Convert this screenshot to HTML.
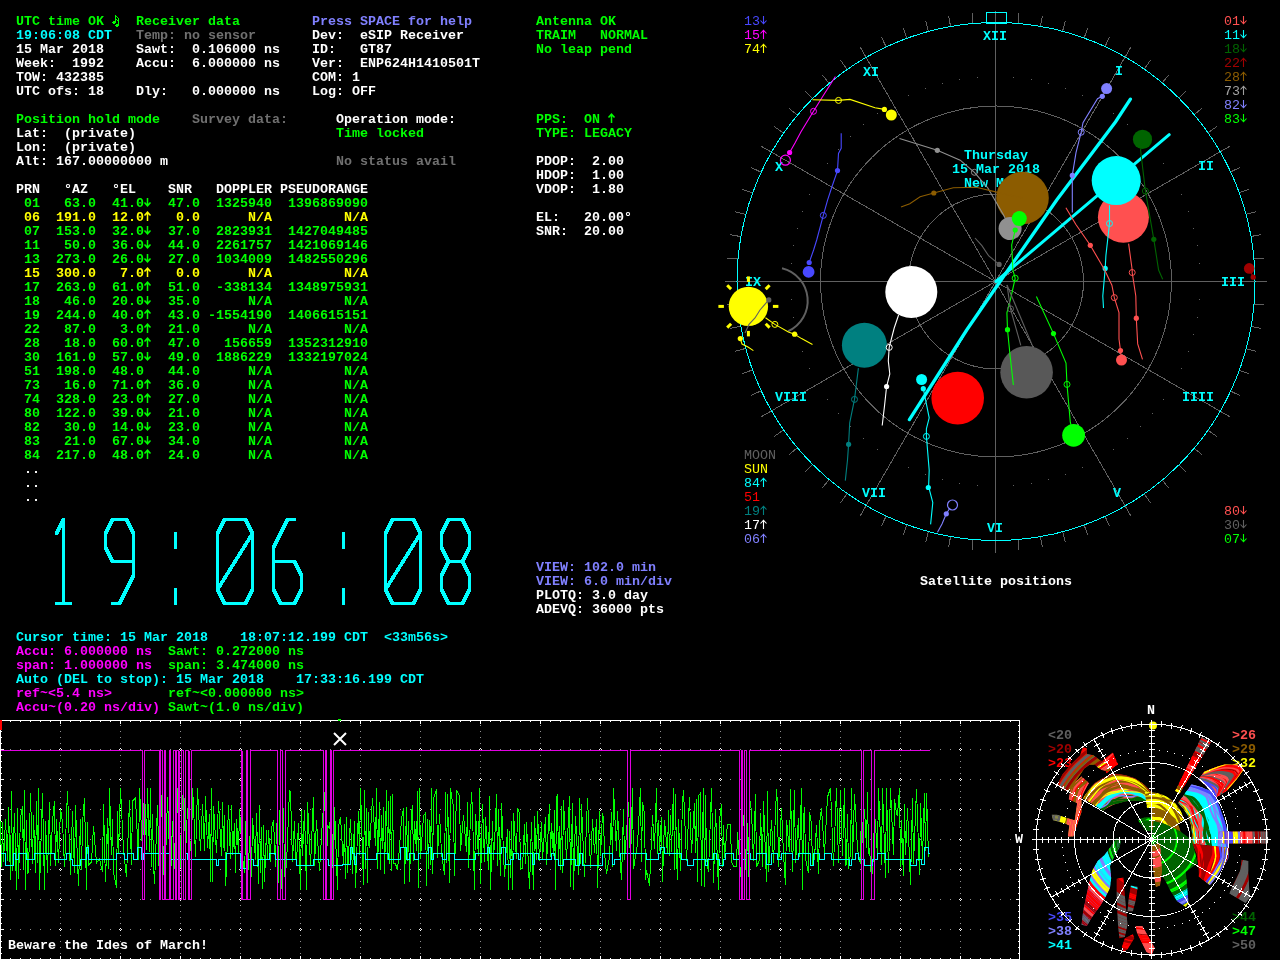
<!DOCTYPE html>
<html><head><meta charset="utf-8"><style>
html,body{margin:0;padding:0;background:#000;width:1280px;height:960px;overflow:hidden}
svg{display:block;will-change:transform}
text{white-space:pre}
</style></head><body>
<svg width="1280" height="960" viewBox="0 0 1280 960">
<rect width="1280" height="960" fill="#000"/>
<g><g stroke="#606060" stroke-width="1" fill="none" shape-rendering="crispEdges"><line x1="995.50" y1="281.50" x2="995.50" y2="10.50"/><line x1="1018.07" y1="23.49" x2="1019.03" y2="12.53"/><line x1="1040.47" y1="26.43" x2="1042.39" y2="15.60"/><line x1="1062.53" y1="31.33" x2="1065.38" y2="20.70"/><line x1="1084.08" y1="38.12" x2="1087.85" y2="27.78"/><line x1="1104.96" y1="46.77" x2="1109.61" y2="36.80"/><line x1="995.50" y1="281.50" x2="1131.00" y2="46.81"/><line x1="1144.06" y1="69.34" x2="1150.37" y2="60.33"/><line x1="1161.98" y1="83.09" x2="1169.05" y2="74.67"/><line x1="1178.64" y1="98.36" x2="1186.42" y2="90.58"/><line x1="1193.91" y1="115.02" x2="1202.33" y2="107.95"/><line x1="1207.66" y1="132.94" x2="1216.67" y2="126.63"/><line x1="995.50" y1="281.50" x2="1230.19" y2="146.00"/><line x1="1230.23" y1="172.04" x2="1240.20" y2="167.39"/><line x1="1238.88" y1="192.92" x2="1249.22" y2="189.15"/><line x1="1245.67" y1="214.47" x2="1256.30" y2="211.62"/><line x1="1250.57" y1="236.53" x2="1261.40" y2="234.61"/><line x1="1253.51" y1="258.93" x2="1264.47" y2="257.97"/><line x1="995.50" y1="281.50" x2="1266.50" y2="281.50"/><line x1="1253.51" y1="304.07" x2="1264.47" y2="305.03"/><line x1="1250.57" y1="326.47" x2="1261.40" y2="328.39"/><line x1="1245.67" y1="348.53" x2="1256.30" y2="351.38"/><line x1="1238.88" y1="370.08" x2="1249.22" y2="373.85"/><line x1="1230.23" y1="390.96" x2="1240.20" y2="395.61"/><line x1="995.50" y1="281.50" x2="1230.19" y2="417.00"/><line x1="1207.66" y1="430.06" x2="1216.67" y2="436.37"/><line x1="1193.91" y1="447.98" x2="1202.33" y2="455.05"/><line x1="1178.64" y1="464.64" x2="1186.42" y2="472.42"/><line x1="1161.98" y1="479.91" x2="1169.05" y2="488.33"/><line x1="1144.06" y1="493.66" x2="1150.37" y2="502.67"/><line x1="995.50" y1="281.50" x2="1131.00" y2="516.19"/><line x1="1104.96" y1="516.23" x2="1109.61" y2="526.20"/><line x1="1084.08" y1="524.88" x2="1087.85" y2="535.22"/><line x1="1062.53" y1="531.67" x2="1065.38" y2="542.30"/><line x1="1040.47" y1="536.57" x2="1042.39" y2="547.40"/><line x1="1018.07" y1="539.51" x2="1019.03" y2="550.47"/><line x1="995.50" y1="281.50" x2="995.50" y2="552.50"/><line x1="972.93" y1="539.51" x2="971.97" y2="550.47"/><line x1="950.53" y1="536.57" x2="948.61" y2="547.40"/><line x1="928.47" y1="531.67" x2="925.62" y2="542.30"/><line x1="906.92" y1="524.88" x2="903.15" y2="535.22"/><line x1="886.04" y1="516.23" x2="881.39" y2="526.20"/><line x1="995.50" y1="281.50" x2="860.00" y2="516.19"/><line x1="846.94" y1="493.66" x2="840.63" y2="502.67"/><line x1="829.02" y1="479.91" x2="821.95" y2="488.33"/><line x1="812.36" y1="464.64" x2="804.58" y2="472.42"/><line x1="797.09" y1="447.98" x2="788.67" y2="455.05"/><line x1="783.34" y1="430.06" x2="774.33" y2="436.37"/><line x1="995.50" y1="281.50" x2="760.81" y2="417.00"/><line x1="760.77" y1="390.96" x2="750.80" y2="395.61"/><line x1="752.12" y1="370.08" x2="741.78" y2="373.85"/><line x1="745.33" y1="348.53" x2="734.70" y2="351.38"/><line x1="740.43" y1="326.47" x2="729.60" y2="328.39"/><line x1="737.49" y1="304.07" x2="726.53" y2="305.03"/><line x1="995.50" y1="281.50" x2="724.50" y2="281.50"/><line x1="737.49" y1="258.93" x2="726.53" y2="257.97"/><line x1="740.43" y1="236.53" x2="729.60" y2="234.61"/><line x1="745.33" y1="214.47" x2="734.70" y2="211.62"/><line x1="752.12" y1="192.92" x2="741.78" y2="189.15"/><line x1="760.77" y1="172.04" x2="750.80" y2="167.39"/><line x1="995.50" y1="281.50" x2="760.81" y2="146.00"/><line x1="783.34" y1="132.94" x2="774.33" y2="126.63"/><line x1="797.09" y1="115.02" x2="788.67" y2="107.95"/><line x1="812.36" y1="98.36" x2="804.58" y2="90.58"/><line x1="829.02" y1="83.09" x2="821.95" y2="74.67"/><line x1="846.94" y1="69.34" x2="840.63" y2="60.33"/><line x1="995.50" y1="281.50" x2="860.00" y2="46.81"/><line x1="886.04" y1="46.77" x2="881.39" y2="36.80"/><line x1="906.92" y1="38.12" x2="903.15" y2="27.78"/><line x1="928.47" y1="31.33" x2="925.62" y2="20.70"/><line x1="950.53" y1="26.43" x2="948.61" y2="15.60"/><line x1="972.93" y1="23.49" x2="971.97" y2="12.53"/><circle cx="996" cy="281.5" r="87.5"/><circle cx="996" cy="281.5" r="175.5"/></g><g fill="#606060"><rect x="1013" y="77" width="1" height="1"/><rect x="1031" y="79" width="1" height="1"/><rect x="1048" y="83" width="1" height="1"/><rect x="1065" y="88" width="1" height="1"/><rect x="1082" y="95" width="1" height="1"/><rect x="1113" y="113" width="1" height="1"/><rect x="1127" y="124" width="1" height="1"/><rect x="1140" y="136" width="1" height="1"/><rect x="1152" y="149" width="1" height="1"/><rect x="1163" y="163" width="1" height="1"/><rect x="1181" y="194" width="1" height="1"/><rect x="1188" y="211" width="1" height="1"/><rect x="1193" y="228" width="1" height="1"/><rect x="1197" y="245" width="1" height="1"/><rect x="1199" y="263" width="1" height="1"/><rect x="1199" y="299" width="1" height="1"/><rect x="1197" y="317" width="1" height="1"/><rect x="1193" y="334" width="1" height="1"/><rect x="1188" y="351" width="1" height="1"/><rect x="1181" y="368" width="1" height="1"/><rect x="1163" y="399" width="1" height="1"/><rect x="1152" y="413" width="1" height="1"/><rect x="1140" y="426" width="1" height="1"/><rect x="1127" y="438" width="1" height="1"/><rect x="1113" y="449" width="1" height="1"/><rect x="1082" y="467" width="1" height="1"/><rect x="1065" y="474" width="1" height="1"/><rect x="1048" y="479" width="1" height="1"/><rect x="1031" y="483" width="1" height="1"/><rect x="1013" y="485" width="1" height="1"/><rect x="977" y="485" width="1" height="1"/><rect x="959" y="483" width="1" height="1"/><rect x="942" y="479" width="1" height="1"/><rect x="925" y="474" width="1" height="1"/><rect x="908" y="467" width="1" height="1"/><rect x="877" y="449" width="1" height="1"/><rect x="863" y="438" width="1" height="1"/><rect x="850" y="426" width="1" height="1"/><rect x="838" y="413" width="1" height="1"/><rect x="827" y="399" width="1" height="1"/><rect x="809" y="368" width="1" height="1"/><rect x="802" y="351" width="1" height="1"/><rect x="797" y="334" width="1" height="1"/><rect x="793" y="317" width="1" height="1"/><rect x="791" y="299" width="1" height="1"/><rect x="791" y="263" width="1" height="1"/><rect x="793" y="245" width="1" height="1"/><rect x="797" y="228" width="1" height="1"/><rect x="802" y="211" width="1" height="1"/><rect x="809" y="194" width="1" height="1"/><rect x="827" y="163" width="1" height="1"/><rect x="838" y="149" width="1" height="1"/><rect x="850" y="136" width="1" height="1"/><rect x="863" y="124" width="1" height="1"/><rect x="877" y="113" width="1" height="1"/><rect x="908" y="95" width="1" height="1"/><rect x="925" y="88" width="1" height="1"/><rect x="942" y="83" width="1" height="1"/><rect x="959" y="79" width="1" height="1"/><rect x="977" y="77" width="1" height="1"/></g><circle cx="996" cy="281.5" r="259" stroke="#00ffff" stroke-width="1" fill="none" shape-rendering="crispEdges"/><rect x="986.5" y="12.5" width="20" height="11" stroke="#00ffff" stroke-width="1" fill="none"/><g font-family="Liberation Mono" font-size="13.333" font-weight="bold" fill="#00ffff" xml:space="preserve"><text x="983" y="40">XII</text><text x="1115" y="75">I</text><text x="1198" y="170">II</text><text x="1221" y="286">III</text><text x="1182" y="401">IIII</text><text x="1113" y="497">V</text><text x="987" y="532">VI</text><text x="862" y="497">VII</text><text x="775" y="401">VIII</text><text x="745" y="286">IX</text><text x="775" y="171">X</text><text x="863" y="76">XI</text><text x="964" y="159">Thursday</text><text x="952" y="173">15 Mar 2018</text><text x="964" y="187">New Moon</text></g><path d="M782,268.2 A33.5,33.5 0 0 1 788.1,331.25" stroke="#606060" stroke-width="2" fill="none"/><circle cx="748.4" cy="306.4" r="19.7" fill="#ffff00"/><g stroke="#ffff00" stroke-width="3"><line x1="748.4" y1="281.9" x2="748.4" y2="276.4"/><line x1="765.7" y1="289.1" x2="769.6" y2="285.2"/><line x1="772.9" y1="306.4" x2="778.4" y2="306.4"/><line x1="765.7" y1="323.7" x2="769.6" y2="327.6"/><line x1="748.4" y1="330.9" x2="748.4" y2="336.4"/><line x1="731.1" y1="323.7" x2="727.2" y2="327.6"/><line x1="723.9" y1="306.4" x2="718.4" y2="306.4"/><line x1="731.1" y1="289.1" x2="727.2" y2="285.2"/></g><polyline points="909.4,419.6 966.7,330 991.6,293.75 1056.7,200 1115.6,121.7 1130.4,99.2" stroke="#00ffff" stroke-width="3.3" fill="none" stroke-linecap="round"/><line x1="996" y1="281.5" x2="1169.2" y2="134.6" stroke="#00ffff" stroke-width="3" stroke-linecap="round"/><circle cx="1022.5" cy="198.0" r="26.3" fill="#8c5c00"/><circle cx="1123.4" cy="217.3" r="25.5" fill="#ff5050"/><circle cx="1116.2" cy="180.6" r="24.5" fill="#00ffff"/><circle cx="1142.5" cy="139.4" r="9.6" fill="#006400"/><circle cx="1010.1" cy="228.5" r="11.5" fill="#909090"/><circle cx="1019.3" cy="218.6" r="7.5" fill="#00ff00"/><circle cx="1106.6" cy="88.6" r="5.5" fill="#8080ff"/><circle cx="891.3" cy="115.0" r="5.5" fill="#ffff00"/><circle cx="808.6" cy="271.9" r="5.9" fill="#4848ff"/><circle cx="1249.2" cy="268.4" r="5.3" fill="#a00000"/><circle cx="911.3" cy="292.0" r="26.0" fill="#ffffff"/><circle cx="864.4" cy="345.2" r="22.5" fill="#008080"/><circle cx="957.7" cy="398.1" r="26.3" fill="#ff0000"/><circle cx="1026.6" cy="372.3" r="26.3" fill="#585858"/><circle cx="1073.6" cy="435.3" r="11.4" fill="#00ff00"/><circle cx="921.6" cy="379.5" r="5.5" fill="#00ffff"/><circle cx="1121.5" cy="360.1" r="5.5" fill="#ff5050"/><circle cx="785.4" cy="160.2" r="5.0" fill="none" stroke="#ff00ff" stroke-width="1.2"/><circle cx="952.5" cy="505.0" r="5.0" fill="none" stroke="#8080ff" stroke-width="1.2"/><polyline points="835.4,76.5 823.0,96.0 813.5,111.3 801.0,131.7 795.0,143.0 789.6,152.5" stroke="#ff00ff" stroke-width="1.1" fill="none"/><circle cx="789.6" cy="152.5" r="2.6" fill="#ff00ff"/><circle cx="813.5" cy="111.3" r="3" fill="none" stroke="#ff00ff" stroke-width="1"/><polyline points="812.5,99.8 838.5,100.4 850.0,99.4 875.0,107.7 884.4,109.4" stroke="#ffff00" stroke-width="1.1" fill="none"/><circle cx="884.4" cy="109.4" r="2.6" fill="#ffff00"/><circle cx="838.5" cy="100.4" r="3" fill="none" stroke="#ffff00" stroke-width="1"/><polyline points="841.2,133.3 841.2,148.3 838.5,153.5 837.5,170.6 832.3,185.8 827.5,200.4 823.3,215.4 816.7,240.0 813.6,250.0 809.2,262.5" stroke="#4848ff" stroke-width="1.1" fill="none"/><circle cx="837.5" cy="170.6" r="2.6" fill="#4848ff"/><circle cx="809.2" cy="262.5" r="2.6" fill="#4848ff"/><circle cx="823.3" cy="215.4" r="3" fill="none" stroke="#4848ff" stroke-width="1"/><polyline points="1072.3,212.5 1072.3,175.4 1076.0,152.6 1081.2,132.2 1083.0,122.7 1097.5,98.7 1102.3,96.3" stroke="#8080ff" stroke-width="1.1" fill="none"/><circle cx="1072.3" cy="175.4" r="2.6" fill="#8080ff"/><circle cx="1102.3" cy="96.3" r="2.6" fill="#8080ff"/><circle cx="1081.2" cy="132.2" r="3" fill="none" stroke="#8080ff" stroke-width="1"/><polyline points="1142.5,139.4 1140.6,150.2 1145.4,191.0 1153.8,239.3 1158.6,270.0 1162.7,279.2" stroke="#006400" stroke-width="1.1" fill="none"/><circle cx="1153.8" cy="239.3" r="2.6" fill="#006400"/><circle cx="1145.4" cy="191.0" r="3" fill="none" stroke="#006400" stroke-width="1"/><polyline points="1109.5,205.3 1109.5,223.5 1105.9,255.6 1105.2,268.4 1102.8,296.0 1103.5,308.0" stroke="#00ffff" stroke-width="1.1" fill="none"/><circle cx="1105.2" cy="268.4" r="2.6" fill="#00ffff"/><circle cx="1109.5" cy="223.5" r="3" fill="none" stroke="#00ffff" stroke-width="1"/><polyline points="1065.9,207.7 1075.9,224.5 1090.3,245.3 1104.7,270.0 1111.9,285.2 1114.3,297.6 1119.0,312.7 1119.0,339.0 1120.5,350.6 1121.5,360.0" stroke="#ff5050" stroke-width="1.1" fill="none"/><circle cx="1090.3" cy="245.3" r="2.6" fill="#ff5050"/><circle cx="1120.5" cy="350.6" r="2.6" fill="#ff5050"/><circle cx="1114.3" cy="297.6" r="3" fill="none" stroke="#ff5050" stroke-width="1"/><polyline points="1128.6,243.6 1132.2,270.0 1132.2,272.5 1135.8,296.0 1136.3,318.2 1137.7,343.9 1142.5,359.4" stroke="#ff5050" stroke-width="1.1" fill="none"/><circle cx="1136.3" cy="318.2" r="2.6" fill="#ff5050"/><circle cx="1132.2" cy="272.5" r="3" fill="none" stroke="#ff5050" stroke-width="1"/><polyline points="1036.4,296.4 1053.5,333.6 1066.0,363.0 1067.0,384.4 1070.3,422.2 1073.6,435.3" stroke="#00ff00" stroke-width="1.1" fill="none"/><circle cx="1053.5" cy="333.6" r="2.6" fill="#00ff00"/><circle cx="1067.0" cy="384.4" r="3" fill="none" stroke="#00ff00" stroke-width="1"/><polyline points="1015.2,230.0 1011.7,245.0 1012.9,270.2 1015.2,278.2 1010.6,298.8 1006.9,312.8 1007.5,329.7 1010.2,356.6 1013.4,385.0" stroke="#00ff00" stroke-width="1.1" fill="none"/><circle cx="1015.2" cy="230.0" r="2.6" fill="#00ff00"/><circle cx="1007.5" cy="329.7" r="2.6" fill="#00ff00"/><circle cx="1015.2" cy="278.2" r="3" fill="none" stroke="#00ff00" stroke-width="1"/><polyline points="898.6,315.0 894.2,328.0 889.2,347.4 888.3,361.0 889.8,374.0 886.6,386.5 884.4,406.9 882.2,425.5" stroke="#ffffff" stroke-width="1.1" fill="none"/><circle cx="886.6" cy="386.5" r="2.6" fill="#ffffff"/><circle cx="889.2" cy="347.4" r="3" fill="none" stroke="#ffffff" stroke-width="1"/><polyline points="858.4,368.1 854.5,399.4 849.7,422.8 848.6,444.3 847.5,460.0 845.3,480.6" stroke="#008080" stroke-width="1.1" fill="none"/><circle cx="848.6" cy="444.3" r="2.6" fill="#008080"/><circle cx="854.5" cy="399.4" r="3" fill="none" stroke="#008080" stroke-width="1"/><polyline points="923.3,388.7 929.2,417.8 926.4,428.8 926.4,436.4 929.2,470.3 928.6,486.7 932.8,502.5 930.6,524.4" stroke="#00ffff" stroke-width="1.1" fill="none"/><circle cx="923.3" cy="388.7" r="2.6" fill="#00ffff"/><circle cx="928.3" cy="487.5" r="2.6" fill="#00ffff"/><circle cx="926.4" cy="436.4" r="3" fill="none" stroke="#00ffff" stroke-width="1"/><polyline points="937.5,532.2 942.0,524.0 946.3,513.8 950.0,508.0" stroke="#8080ff" stroke-width="1.1" fill="none"/><circle cx="946.3" cy="513.8" r="2.6" fill="#8080ff"/><polyline points="899.5,138.4 921.2,145.3 937.3,150.3 960.2,160.2 974.4,172.3 987.7,187.7 1003.7,215.2 1010.1,228.5" stroke="#909090" stroke-width="1.1" fill="none"/><circle cx="937.3" cy="150.3" r="2.6" fill="#909090"/><circle cx="974.4" cy="172.3" r="3" fill="none" stroke="#909090" stroke-width="1"/><polyline points="901.0,207.1 909.8,203.7 920.1,196.8 933.8,193.0 953.3,187.7 976.2,187.2 994.5,191.6 1022.5,198.0" stroke="#8c5c00" stroke-width="1.1" fill="none"/><circle cx="933.8" cy="193.0" r="2.6" fill="#8c5c00"/><polyline points="765.5,317.8 774.9,324.4 788.4,332.0 794.6,334.2 801.6,338.6 812.5,344.5" stroke="#ffff00" stroke-width="1.1" fill="none"/><circle cx="794.6" cy="334.2" r="2.6" fill="#ffff00"/><circle cx="774.9" cy="324.4" r="3" fill="none" stroke="#ffff00" stroke-width="1"/><polyline points="740.3,338.6 742.0,344.0 748.0,347.0 753.4,350.6" stroke="#ffff00" stroke-width="1.1" fill="none"/><circle cx="740.3" cy="338.6" r="2.6" fill="#ffff00"/><polyline points="768.8,299.9 760.0,310.0 755.0,318.0 749.0,324.4 745.0,333.0" stroke="#606060" stroke-width="1.1" fill="none"/><circle cx="768.8" cy="299.9" r="2.6" fill="#606060"/><polyline points="975.0,238.0 981.9,245.7 988.8,256.0 999.1,264.4" stroke="#606060" stroke-width="1.1" fill="none"/><circle cx="999.1" cy="264.4" r="2.6" fill="#606060"/><polyline points="1007.0,285.0 1010.5,308.8 1020.8,345.4" stroke="#606060" stroke-width="1.1" fill="none"/><circle cx="1010.5" cy="308.8" r="3" fill="none" stroke="#606060" stroke-width="1"/><polyline points="1007.0,285.0 1032.3,345.4" stroke="#606060" stroke-width="1.1" fill="none"/><polyline points="1249.2,268.4 1253.2,277.2" stroke="#a00000" stroke-width="1.1" fill="none"/><circle cx="1253.2" cy="277.2" r="2.6" fill="#a00000"/></g><g shape-rendering="crispEdges"><path fill="#909090" d="M60,725h1v1h-1zM60,731h1v1h-1zM60,737h1v1h-1zM60,743h1v1h-1zM60,755h1v1h-1zM60,761h1v1h-1zM60,767h1v1h-1zM60,773h1v1h-1zM60,785h1v1h-1zM60,791h1v1h-1zM60,797h1v1h-1zM60,803h1v1h-1zM60,815h1v1h-1zM60,821h1v1h-1zM60,827h1v1h-1zM60,833h1v1h-1zM60,845h1v1h-1zM60,851h1v1h-1zM60,857h1v1h-1zM60,863h1v1h-1zM60,875h1v1h-1zM60,881h1v1h-1zM60,887h1v1h-1zM60,893h1v1h-1zM60,905h1v1h-1zM60,911h1v1h-1zM60,917h1v1h-1zM60,923h1v1h-1zM60,935h1v1h-1zM60,941h1v1h-1zM60,947h1v1h-1zM60,953h1v1h-1zM120,725h1v1h-1zM120,731h1v1h-1zM120,737h1v1h-1zM120,743h1v1h-1zM120,755h1v1h-1zM120,761h1v1h-1zM120,767h1v1h-1zM120,773h1v1h-1zM120,785h1v1h-1zM120,791h1v1h-1zM120,797h1v1h-1zM120,803h1v1h-1zM120,815h1v1h-1zM120,821h1v1h-1zM120,827h1v1h-1zM120,833h1v1h-1zM120,845h1v1h-1zM120,851h1v1h-1zM120,857h1v1h-1zM120,863h1v1h-1zM120,875h1v1h-1zM120,881h1v1h-1zM120,887h1v1h-1zM120,893h1v1h-1zM120,905h1v1h-1zM120,911h1v1h-1zM120,917h1v1h-1zM120,923h1v1h-1zM120,935h1v1h-1zM120,941h1v1h-1zM120,947h1v1h-1zM120,953h1v1h-1zM180,725h1v1h-1zM180,731h1v1h-1zM180,737h1v1h-1zM180,743h1v1h-1zM180,755h1v1h-1zM180,761h1v1h-1zM180,767h1v1h-1zM180,773h1v1h-1zM180,785h1v1h-1zM180,791h1v1h-1zM180,797h1v1h-1zM180,803h1v1h-1zM180,815h1v1h-1zM180,821h1v1h-1zM180,827h1v1h-1zM180,833h1v1h-1zM180,845h1v1h-1zM180,851h1v1h-1zM180,857h1v1h-1zM180,863h1v1h-1zM180,875h1v1h-1zM180,881h1v1h-1zM180,887h1v1h-1zM180,893h1v1h-1zM180,905h1v1h-1zM180,911h1v1h-1zM180,917h1v1h-1zM180,923h1v1h-1zM180,935h1v1h-1zM180,941h1v1h-1zM180,947h1v1h-1zM180,953h1v1h-1zM240,725h1v1h-1zM240,731h1v1h-1zM240,737h1v1h-1zM240,743h1v1h-1zM240,755h1v1h-1zM240,761h1v1h-1zM240,767h1v1h-1zM240,773h1v1h-1zM240,785h1v1h-1zM240,791h1v1h-1zM240,797h1v1h-1zM240,803h1v1h-1zM240,815h1v1h-1zM240,821h1v1h-1zM240,827h1v1h-1zM240,833h1v1h-1zM240,845h1v1h-1zM240,851h1v1h-1zM240,857h1v1h-1zM240,863h1v1h-1zM240,875h1v1h-1zM240,881h1v1h-1zM240,887h1v1h-1zM240,893h1v1h-1zM240,905h1v1h-1zM240,911h1v1h-1zM240,917h1v1h-1zM240,923h1v1h-1zM240,935h1v1h-1zM240,941h1v1h-1zM240,947h1v1h-1zM240,953h1v1h-1zM300,725h1v1h-1zM300,731h1v1h-1zM300,737h1v1h-1zM300,743h1v1h-1zM300,755h1v1h-1zM300,761h1v1h-1zM300,767h1v1h-1zM300,773h1v1h-1zM300,785h1v1h-1zM300,791h1v1h-1zM300,797h1v1h-1zM300,803h1v1h-1zM300,815h1v1h-1zM300,821h1v1h-1zM300,827h1v1h-1zM300,833h1v1h-1zM300,845h1v1h-1zM300,851h1v1h-1zM300,857h1v1h-1zM300,863h1v1h-1zM300,875h1v1h-1zM300,881h1v1h-1zM300,887h1v1h-1zM300,893h1v1h-1zM300,905h1v1h-1zM300,911h1v1h-1zM300,917h1v1h-1zM300,923h1v1h-1zM300,935h1v1h-1zM300,941h1v1h-1zM300,947h1v1h-1zM300,953h1v1h-1zM360,725h1v1h-1zM360,731h1v1h-1zM360,737h1v1h-1zM360,743h1v1h-1zM360,755h1v1h-1zM360,761h1v1h-1zM360,767h1v1h-1zM360,773h1v1h-1zM360,785h1v1h-1zM360,791h1v1h-1zM360,797h1v1h-1zM360,803h1v1h-1zM360,815h1v1h-1zM360,821h1v1h-1zM360,827h1v1h-1zM360,833h1v1h-1zM360,845h1v1h-1zM360,851h1v1h-1zM360,857h1v1h-1zM360,863h1v1h-1zM360,875h1v1h-1zM360,881h1v1h-1zM360,887h1v1h-1zM360,893h1v1h-1zM360,905h1v1h-1zM360,911h1v1h-1zM360,917h1v1h-1zM360,923h1v1h-1zM360,935h1v1h-1zM360,941h1v1h-1zM360,947h1v1h-1zM360,953h1v1h-1zM420,725h1v1h-1zM420,731h1v1h-1zM420,737h1v1h-1zM420,743h1v1h-1zM420,755h1v1h-1zM420,761h1v1h-1zM420,767h1v1h-1zM420,773h1v1h-1zM420,785h1v1h-1zM420,791h1v1h-1zM420,797h1v1h-1zM420,803h1v1h-1zM420,815h1v1h-1zM420,821h1v1h-1zM420,827h1v1h-1zM420,833h1v1h-1zM420,845h1v1h-1zM420,851h1v1h-1zM420,857h1v1h-1zM420,863h1v1h-1zM420,875h1v1h-1zM420,881h1v1h-1zM420,887h1v1h-1zM420,893h1v1h-1zM420,905h1v1h-1zM420,911h1v1h-1zM420,917h1v1h-1zM420,923h1v1h-1zM420,935h1v1h-1zM420,941h1v1h-1zM420,947h1v1h-1zM420,953h1v1h-1zM480,725h1v1h-1zM480,731h1v1h-1zM480,737h1v1h-1zM480,743h1v1h-1zM480,755h1v1h-1zM480,761h1v1h-1zM480,767h1v1h-1zM480,773h1v1h-1zM480,785h1v1h-1zM480,791h1v1h-1zM480,797h1v1h-1zM480,803h1v1h-1zM480,815h1v1h-1zM480,821h1v1h-1zM480,827h1v1h-1zM480,833h1v1h-1zM480,845h1v1h-1zM480,851h1v1h-1zM480,857h1v1h-1zM480,863h1v1h-1zM480,875h1v1h-1zM480,881h1v1h-1zM480,887h1v1h-1zM480,893h1v1h-1zM480,905h1v1h-1zM480,911h1v1h-1zM480,917h1v1h-1zM480,923h1v1h-1zM480,935h1v1h-1zM480,941h1v1h-1zM480,947h1v1h-1zM480,953h1v1h-1zM540,725h1v1h-1zM540,731h1v1h-1zM540,737h1v1h-1zM540,743h1v1h-1zM540,755h1v1h-1zM540,761h1v1h-1zM540,767h1v1h-1zM540,773h1v1h-1zM540,785h1v1h-1zM540,791h1v1h-1zM540,797h1v1h-1zM540,803h1v1h-1zM540,815h1v1h-1zM540,821h1v1h-1zM540,827h1v1h-1zM540,833h1v1h-1zM540,845h1v1h-1zM540,851h1v1h-1zM540,857h1v1h-1zM540,863h1v1h-1zM540,875h1v1h-1zM540,881h1v1h-1zM540,887h1v1h-1zM540,893h1v1h-1zM540,905h1v1h-1zM540,911h1v1h-1zM540,917h1v1h-1zM540,923h1v1h-1zM540,935h1v1h-1zM540,941h1v1h-1zM540,947h1v1h-1zM540,953h1v1h-1zM600,725h1v1h-1zM600,731h1v1h-1zM600,737h1v1h-1zM600,743h1v1h-1zM600,755h1v1h-1zM600,761h1v1h-1zM600,767h1v1h-1zM600,773h1v1h-1zM600,785h1v1h-1zM600,791h1v1h-1zM600,797h1v1h-1zM600,803h1v1h-1zM600,815h1v1h-1zM600,821h1v1h-1zM600,827h1v1h-1zM600,833h1v1h-1zM600,845h1v1h-1zM600,851h1v1h-1zM600,857h1v1h-1zM600,863h1v1h-1zM600,875h1v1h-1zM600,881h1v1h-1zM600,887h1v1h-1zM600,893h1v1h-1zM600,905h1v1h-1zM600,911h1v1h-1zM600,917h1v1h-1zM600,923h1v1h-1zM600,935h1v1h-1zM600,941h1v1h-1zM600,947h1v1h-1zM600,953h1v1h-1zM660,725h1v1h-1zM660,731h1v1h-1zM660,737h1v1h-1zM660,743h1v1h-1zM660,755h1v1h-1zM660,761h1v1h-1zM660,767h1v1h-1zM660,773h1v1h-1zM660,785h1v1h-1zM660,791h1v1h-1zM660,797h1v1h-1zM660,803h1v1h-1zM660,815h1v1h-1zM660,821h1v1h-1zM660,827h1v1h-1zM660,833h1v1h-1zM660,845h1v1h-1zM660,851h1v1h-1zM660,857h1v1h-1zM660,863h1v1h-1zM660,875h1v1h-1zM660,881h1v1h-1zM660,887h1v1h-1zM660,893h1v1h-1zM660,905h1v1h-1zM660,911h1v1h-1zM660,917h1v1h-1zM660,923h1v1h-1zM660,935h1v1h-1zM660,941h1v1h-1zM660,947h1v1h-1zM660,953h1v1h-1zM720,725h1v1h-1zM720,731h1v1h-1zM720,737h1v1h-1zM720,743h1v1h-1zM720,755h1v1h-1zM720,761h1v1h-1zM720,767h1v1h-1zM720,773h1v1h-1zM720,785h1v1h-1zM720,791h1v1h-1zM720,797h1v1h-1zM720,803h1v1h-1zM720,815h1v1h-1zM720,821h1v1h-1zM720,827h1v1h-1zM720,833h1v1h-1zM720,845h1v1h-1zM720,851h1v1h-1zM720,857h1v1h-1zM720,863h1v1h-1zM720,875h1v1h-1zM720,881h1v1h-1zM720,887h1v1h-1zM720,893h1v1h-1zM720,905h1v1h-1zM720,911h1v1h-1zM720,917h1v1h-1zM720,923h1v1h-1zM720,935h1v1h-1zM720,941h1v1h-1zM720,947h1v1h-1zM720,953h1v1h-1zM780,725h1v1h-1zM780,731h1v1h-1zM780,737h1v1h-1zM780,743h1v1h-1zM780,755h1v1h-1zM780,761h1v1h-1zM780,767h1v1h-1zM780,773h1v1h-1zM780,785h1v1h-1zM780,791h1v1h-1zM780,797h1v1h-1zM780,803h1v1h-1zM780,815h1v1h-1zM780,821h1v1h-1zM780,827h1v1h-1zM780,833h1v1h-1zM780,845h1v1h-1zM780,851h1v1h-1zM780,857h1v1h-1zM780,863h1v1h-1zM780,875h1v1h-1zM780,881h1v1h-1zM780,887h1v1h-1zM780,893h1v1h-1zM780,905h1v1h-1zM780,911h1v1h-1zM780,917h1v1h-1zM780,923h1v1h-1zM780,935h1v1h-1zM780,941h1v1h-1zM780,947h1v1h-1zM780,953h1v1h-1zM840,725h1v1h-1zM840,731h1v1h-1zM840,737h1v1h-1zM840,743h1v1h-1zM840,755h1v1h-1zM840,761h1v1h-1zM840,767h1v1h-1zM840,773h1v1h-1zM840,785h1v1h-1zM840,791h1v1h-1zM840,797h1v1h-1zM840,803h1v1h-1zM840,815h1v1h-1zM840,821h1v1h-1zM840,827h1v1h-1zM840,833h1v1h-1zM840,845h1v1h-1zM840,851h1v1h-1zM840,857h1v1h-1zM840,863h1v1h-1zM840,875h1v1h-1zM840,881h1v1h-1zM840,887h1v1h-1zM840,893h1v1h-1zM840,905h1v1h-1zM840,911h1v1h-1zM840,917h1v1h-1zM840,923h1v1h-1zM840,935h1v1h-1zM840,941h1v1h-1zM840,947h1v1h-1zM840,953h1v1h-1zM900,725h1v1h-1zM900,731h1v1h-1zM900,737h1v1h-1zM900,743h1v1h-1zM900,755h1v1h-1zM900,761h1v1h-1zM900,767h1v1h-1zM900,773h1v1h-1zM900,785h1v1h-1zM900,791h1v1h-1zM900,797h1v1h-1zM900,803h1v1h-1zM900,815h1v1h-1zM900,821h1v1h-1zM900,827h1v1h-1zM900,833h1v1h-1zM900,845h1v1h-1zM900,851h1v1h-1zM900,857h1v1h-1zM900,863h1v1h-1zM900,875h1v1h-1zM900,881h1v1h-1zM900,887h1v1h-1zM900,893h1v1h-1zM900,905h1v1h-1zM900,911h1v1h-1zM900,917h1v1h-1zM900,923h1v1h-1zM900,935h1v1h-1zM900,941h1v1h-1zM900,947h1v1h-1zM900,953h1v1h-1zM960,725h1v1h-1zM960,731h1v1h-1zM960,737h1v1h-1zM960,743h1v1h-1zM960,755h1v1h-1zM960,761h1v1h-1zM960,767h1v1h-1zM960,773h1v1h-1zM960,785h1v1h-1zM960,791h1v1h-1zM960,797h1v1h-1zM960,803h1v1h-1zM960,815h1v1h-1zM960,821h1v1h-1zM960,827h1v1h-1zM960,833h1v1h-1zM960,845h1v1h-1zM960,851h1v1h-1zM960,857h1v1h-1zM960,863h1v1h-1zM960,875h1v1h-1zM960,881h1v1h-1zM960,887h1v1h-1zM960,893h1v1h-1zM960,905h1v1h-1zM960,911h1v1h-1zM960,917h1v1h-1zM960,923h1v1h-1zM960,935h1v1h-1zM960,941h1v1h-1zM960,947h1v1h-1zM960,953h1v1h-1zM10,749h1v1h-1zM20,749h1v1h-1zM30,749h1v1h-1zM40,749h1v1h-1zM50,749h1v1h-1zM70,749h1v1h-1zM80,749h1v1h-1zM90,749h1v1h-1zM100,749h1v1h-1zM110,749h1v1h-1zM130,749h1v1h-1zM140,749h1v1h-1zM150,749h1v1h-1zM160,749h1v1h-1zM170,749h1v1h-1zM190,749h1v1h-1zM200,749h1v1h-1zM210,749h1v1h-1zM220,749h1v1h-1zM230,749h1v1h-1zM250,749h1v1h-1zM260,749h1v1h-1zM270,749h1v1h-1zM280,749h1v1h-1zM290,749h1v1h-1zM310,749h1v1h-1zM320,749h1v1h-1zM330,749h1v1h-1zM340,749h1v1h-1zM350,749h1v1h-1zM370,749h1v1h-1zM380,749h1v1h-1zM390,749h1v1h-1zM400,749h1v1h-1zM410,749h1v1h-1zM430,749h1v1h-1zM440,749h1v1h-1zM450,749h1v1h-1zM460,749h1v1h-1zM470,749h1v1h-1zM490,749h1v1h-1zM500,749h1v1h-1zM510,749h1v1h-1zM520,749h1v1h-1zM530,749h1v1h-1zM550,749h1v1h-1zM560,749h1v1h-1zM570,749h1v1h-1zM580,749h1v1h-1zM590,749h1v1h-1zM610,749h1v1h-1zM620,749h1v1h-1zM630,749h1v1h-1zM640,749h1v1h-1zM650,749h1v1h-1zM670,749h1v1h-1zM680,749h1v1h-1zM690,749h1v1h-1zM700,749h1v1h-1zM710,749h1v1h-1zM730,749h1v1h-1zM740,749h1v1h-1zM750,749h1v1h-1zM760,749h1v1h-1zM770,749h1v1h-1zM790,749h1v1h-1zM800,749h1v1h-1zM810,749h1v1h-1zM820,749h1v1h-1zM830,749h1v1h-1zM850,749h1v1h-1zM860,749h1v1h-1zM870,749h1v1h-1zM880,749h1v1h-1zM890,749h1v1h-1zM910,749h1v1h-1zM920,749h1v1h-1zM930,749h1v1h-1zM940,749h1v1h-1zM950,749h1v1h-1zM970,749h1v1h-1zM980,749h1v1h-1zM990,749h1v1h-1zM1000,749h1v1h-1zM1010,749h1v1h-1zM10,779h1v1h-1zM20,779h1v1h-1zM30,779h1v1h-1zM40,779h1v1h-1zM50,779h1v1h-1zM70,779h1v1h-1zM80,779h1v1h-1zM90,779h1v1h-1zM100,779h1v1h-1zM110,779h1v1h-1zM130,779h1v1h-1zM140,779h1v1h-1zM150,779h1v1h-1zM160,779h1v1h-1zM170,779h1v1h-1zM190,779h1v1h-1zM200,779h1v1h-1zM210,779h1v1h-1zM220,779h1v1h-1zM230,779h1v1h-1zM250,779h1v1h-1zM260,779h1v1h-1zM270,779h1v1h-1zM280,779h1v1h-1zM290,779h1v1h-1zM310,779h1v1h-1zM320,779h1v1h-1zM330,779h1v1h-1zM340,779h1v1h-1zM350,779h1v1h-1zM370,779h1v1h-1zM380,779h1v1h-1zM390,779h1v1h-1zM400,779h1v1h-1zM410,779h1v1h-1zM430,779h1v1h-1zM440,779h1v1h-1zM450,779h1v1h-1zM460,779h1v1h-1zM470,779h1v1h-1zM490,779h1v1h-1zM500,779h1v1h-1zM510,779h1v1h-1zM520,779h1v1h-1zM530,779h1v1h-1zM550,779h1v1h-1zM560,779h1v1h-1zM570,779h1v1h-1zM580,779h1v1h-1zM590,779h1v1h-1zM610,779h1v1h-1zM620,779h1v1h-1zM630,779h1v1h-1zM640,779h1v1h-1zM650,779h1v1h-1zM670,779h1v1h-1zM680,779h1v1h-1zM690,779h1v1h-1zM700,779h1v1h-1zM710,779h1v1h-1zM730,779h1v1h-1zM740,779h1v1h-1zM750,779h1v1h-1zM760,779h1v1h-1zM770,779h1v1h-1zM790,779h1v1h-1zM800,779h1v1h-1zM810,779h1v1h-1zM820,779h1v1h-1zM830,779h1v1h-1zM850,779h1v1h-1zM860,779h1v1h-1zM870,779h1v1h-1zM880,779h1v1h-1zM890,779h1v1h-1zM910,779h1v1h-1zM920,779h1v1h-1zM930,779h1v1h-1zM940,779h1v1h-1zM950,779h1v1h-1zM970,779h1v1h-1zM980,779h1v1h-1zM990,779h1v1h-1zM1000,779h1v1h-1zM1010,779h1v1h-1zM10,809h1v1h-1zM20,809h1v1h-1zM30,809h1v1h-1zM40,809h1v1h-1zM50,809h1v1h-1zM70,809h1v1h-1zM80,809h1v1h-1zM90,809h1v1h-1zM100,809h1v1h-1zM110,809h1v1h-1zM130,809h1v1h-1zM140,809h1v1h-1zM150,809h1v1h-1zM160,809h1v1h-1zM170,809h1v1h-1zM190,809h1v1h-1zM200,809h1v1h-1zM210,809h1v1h-1zM220,809h1v1h-1zM230,809h1v1h-1zM250,809h1v1h-1zM260,809h1v1h-1zM270,809h1v1h-1zM280,809h1v1h-1zM290,809h1v1h-1zM310,809h1v1h-1zM320,809h1v1h-1zM330,809h1v1h-1zM340,809h1v1h-1zM350,809h1v1h-1zM370,809h1v1h-1zM380,809h1v1h-1zM390,809h1v1h-1zM400,809h1v1h-1zM410,809h1v1h-1zM430,809h1v1h-1zM440,809h1v1h-1zM450,809h1v1h-1zM460,809h1v1h-1zM470,809h1v1h-1zM490,809h1v1h-1zM500,809h1v1h-1zM510,809h1v1h-1zM520,809h1v1h-1zM530,809h1v1h-1zM550,809h1v1h-1zM560,809h1v1h-1zM570,809h1v1h-1zM580,809h1v1h-1zM590,809h1v1h-1zM610,809h1v1h-1zM620,809h1v1h-1zM630,809h1v1h-1zM640,809h1v1h-1zM650,809h1v1h-1zM670,809h1v1h-1zM680,809h1v1h-1zM690,809h1v1h-1zM700,809h1v1h-1zM710,809h1v1h-1zM730,809h1v1h-1zM740,809h1v1h-1zM750,809h1v1h-1zM760,809h1v1h-1zM770,809h1v1h-1zM790,809h1v1h-1zM800,809h1v1h-1zM810,809h1v1h-1zM820,809h1v1h-1zM830,809h1v1h-1zM850,809h1v1h-1zM860,809h1v1h-1zM870,809h1v1h-1zM880,809h1v1h-1zM890,809h1v1h-1zM910,809h1v1h-1zM920,809h1v1h-1zM930,809h1v1h-1zM940,809h1v1h-1zM950,809h1v1h-1zM970,809h1v1h-1zM980,809h1v1h-1zM990,809h1v1h-1zM1000,809h1v1h-1zM1010,809h1v1h-1zM10,839h1v1h-1zM20,839h1v1h-1zM30,839h1v1h-1zM40,839h1v1h-1zM50,839h1v1h-1zM70,839h1v1h-1zM80,839h1v1h-1zM90,839h1v1h-1zM100,839h1v1h-1zM110,839h1v1h-1zM130,839h1v1h-1zM140,839h1v1h-1zM150,839h1v1h-1zM160,839h1v1h-1zM170,839h1v1h-1zM190,839h1v1h-1zM200,839h1v1h-1zM210,839h1v1h-1zM220,839h1v1h-1zM230,839h1v1h-1zM250,839h1v1h-1zM260,839h1v1h-1zM270,839h1v1h-1zM280,839h1v1h-1zM290,839h1v1h-1zM310,839h1v1h-1zM320,839h1v1h-1zM330,839h1v1h-1zM340,839h1v1h-1zM350,839h1v1h-1zM370,839h1v1h-1zM380,839h1v1h-1zM390,839h1v1h-1zM400,839h1v1h-1zM410,839h1v1h-1zM430,839h1v1h-1zM440,839h1v1h-1zM450,839h1v1h-1zM460,839h1v1h-1zM470,839h1v1h-1zM490,839h1v1h-1zM500,839h1v1h-1zM510,839h1v1h-1zM520,839h1v1h-1zM530,839h1v1h-1zM550,839h1v1h-1zM560,839h1v1h-1zM570,839h1v1h-1zM580,839h1v1h-1zM590,839h1v1h-1zM610,839h1v1h-1zM620,839h1v1h-1zM630,839h1v1h-1zM640,839h1v1h-1zM650,839h1v1h-1zM670,839h1v1h-1zM680,839h1v1h-1zM690,839h1v1h-1zM700,839h1v1h-1zM710,839h1v1h-1zM730,839h1v1h-1zM740,839h1v1h-1zM750,839h1v1h-1zM760,839h1v1h-1zM770,839h1v1h-1zM790,839h1v1h-1zM800,839h1v1h-1zM810,839h1v1h-1zM820,839h1v1h-1zM830,839h1v1h-1zM850,839h1v1h-1zM860,839h1v1h-1zM870,839h1v1h-1zM880,839h1v1h-1zM890,839h1v1h-1zM910,839h1v1h-1zM920,839h1v1h-1zM930,839h1v1h-1zM940,839h1v1h-1zM950,839h1v1h-1zM970,839h1v1h-1zM980,839h1v1h-1zM990,839h1v1h-1zM1000,839h1v1h-1zM1010,839h1v1h-1zM10,869h1v1h-1zM20,869h1v1h-1zM30,869h1v1h-1zM40,869h1v1h-1zM50,869h1v1h-1zM70,869h1v1h-1zM80,869h1v1h-1zM90,869h1v1h-1zM100,869h1v1h-1zM110,869h1v1h-1zM130,869h1v1h-1zM140,869h1v1h-1zM150,869h1v1h-1zM160,869h1v1h-1zM170,869h1v1h-1zM190,869h1v1h-1zM200,869h1v1h-1zM210,869h1v1h-1zM220,869h1v1h-1zM230,869h1v1h-1zM250,869h1v1h-1zM260,869h1v1h-1zM270,869h1v1h-1zM280,869h1v1h-1zM290,869h1v1h-1zM310,869h1v1h-1zM320,869h1v1h-1zM330,869h1v1h-1zM340,869h1v1h-1zM350,869h1v1h-1zM370,869h1v1h-1zM380,869h1v1h-1zM390,869h1v1h-1zM400,869h1v1h-1zM410,869h1v1h-1zM430,869h1v1h-1zM440,869h1v1h-1zM450,869h1v1h-1zM460,869h1v1h-1zM470,869h1v1h-1zM490,869h1v1h-1zM500,869h1v1h-1zM510,869h1v1h-1zM520,869h1v1h-1zM530,869h1v1h-1zM550,869h1v1h-1zM560,869h1v1h-1zM570,869h1v1h-1zM580,869h1v1h-1zM590,869h1v1h-1zM610,869h1v1h-1zM620,869h1v1h-1zM630,869h1v1h-1zM640,869h1v1h-1zM650,869h1v1h-1zM670,869h1v1h-1zM680,869h1v1h-1zM690,869h1v1h-1zM700,869h1v1h-1zM710,869h1v1h-1zM730,869h1v1h-1zM740,869h1v1h-1zM750,869h1v1h-1zM760,869h1v1h-1zM770,869h1v1h-1zM790,869h1v1h-1zM800,869h1v1h-1zM810,869h1v1h-1zM820,869h1v1h-1zM830,869h1v1h-1zM850,869h1v1h-1zM860,869h1v1h-1zM870,869h1v1h-1zM880,869h1v1h-1zM890,869h1v1h-1zM910,869h1v1h-1zM920,869h1v1h-1zM930,869h1v1h-1zM940,869h1v1h-1zM950,869h1v1h-1zM970,869h1v1h-1zM980,869h1v1h-1zM990,869h1v1h-1zM1000,869h1v1h-1zM1010,869h1v1h-1zM10,899h1v1h-1zM20,899h1v1h-1zM30,899h1v1h-1zM40,899h1v1h-1zM50,899h1v1h-1zM70,899h1v1h-1zM80,899h1v1h-1zM90,899h1v1h-1zM100,899h1v1h-1zM110,899h1v1h-1zM130,899h1v1h-1zM140,899h1v1h-1zM150,899h1v1h-1zM160,899h1v1h-1zM170,899h1v1h-1zM190,899h1v1h-1zM200,899h1v1h-1zM210,899h1v1h-1zM220,899h1v1h-1zM230,899h1v1h-1zM250,899h1v1h-1zM260,899h1v1h-1zM270,899h1v1h-1zM280,899h1v1h-1zM290,899h1v1h-1zM310,899h1v1h-1zM320,899h1v1h-1zM330,899h1v1h-1zM340,899h1v1h-1zM350,899h1v1h-1zM370,899h1v1h-1zM380,899h1v1h-1zM390,899h1v1h-1zM400,899h1v1h-1zM410,899h1v1h-1zM430,899h1v1h-1zM440,899h1v1h-1zM450,899h1v1h-1zM460,899h1v1h-1zM470,899h1v1h-1zM490,899h1v1h-1zM500,899h1v1h-1zM510,899h1v1h-1zM520,899h1v1h-1zM530,899h1v1h-1zM550,899h1v1h-1zM560,899h1v1h-1zM570,899h1v1h-1zM580,899h1v1h-1zM590,899h1v1h-1zM610,899h1v1h-1zM620,899h1v1h-1zM630,899h1v1h-1zM640,899h1v1h-1zM650,899h1v1h-1zM670,899h1v1h-1zM680,899h1v1h-1zM690,899h1v1h-1zM700,899h1v1h-1zM710,899h1v1h-1zM730,899h1v1h-1zM740,899h1v1h-1zM750,899h1v1h-1zM760,899h1v1h-1zM770,899h1v1h-1zM790,899h1v1h-1zM800,899h1v1h-1zM810,899h1v1h-1zM820,899h1v1h-1zM830,899h1v1h-1zM850,899h1v1h-1zM860,899h1v1h-1zM870,899h1v1h-1zM880,899h1v1h-1zM890,899h1v1h-1zM910,899h1v1h-1zM920,899h1v1h-1zM930,899h1v1h-1zM940,899h1v1h-1zM950,899h1v1h-1zM970,899h1v1h-1zM980,899h1v1h-1zM990,899h1v1h-1zM1000,899h1v1h-1zM1010,899h1v1h-1zM10,929h1v1h-1zM20,929h1v1h-1zM30,929h1v1h-1zM40,929h1v1h-1zM50,929h1v1h-1zM70,929h1v1h-1zM80,929h1v1h-1zM90,929h1v1h-1zM100,929h1v1h-1zM110,929h1v1h-1zM130,929h1v1h-1zM140,929h1v1h-1zM150,929h1v1h-1zM160,929h1v1h-1zM170,929h1v1h-1zM190,929h1v1h-1zM200,929h1v1h-1zM210,929h1v1h-1zM220,929h1v1h-1zM230,929h1v1h-1zM250,929h1v1h-1zM260,929h1v1h-1zM270,929h1v1h-1zM280,929h1v1h-1zM290,929h1v1h-1zM310,929h1v1h-1zM320,929h1v1h-1zM330,929h1v1h-1zM340,929h1v1h-1zM350,929h1v1h-1zM370,929h1v1h-1zM380,929h1v1h-1zM390,929h1v1h-1zM400,929h1v1h-1zM410,929h1v1h-1zM430,929h1v1h-1zM440,929h1v1h-1zM450,929h1v1h-1zM460,929h1v1h-1zM470,929h1v1h-1zM490,929h1v1h-1zM500,929h1v1h-1zM510,929h1v1h-1zM520,929h1v1h-1zM530,929h1v1h-1zM550,929h1v1h-1zM560,929h1v1h-1zM570,929h1v1h-1zM580,929h1v1h-1zM590,929h1v1h-1zM610,929h1v1h-1zM620,929h1v1h-1zM630,929h1v1h-1zM640,929h1v1h-1zM650,929h1v1h-1zM670,929h1v1h-1zM680,929h1v1h-1zM690,929h1v1h-1zM700,929h1v1h-1zM710,929h1v1h-1zM730,929h1v1h-1zM740,929h1v1h-1zM750,929h1v1h-1zM760,929h1v1h-1zM770,929h1v1h-1zM790,929h1v1h-1zM800,929h1v1h-1zM810,929h1v1h-1zM820,929h1v1h-1zM830,929h1v1h-1zM850,929h1v1h-1zM860,929h1v1h-1zM870,929h1v1h-1zM880,929h1v1h-1zM890,929h1v1h-1zM910,929h1v1h-1zM920,929h1v1h-1zM930,929h1v1h-1zM940,929h1v1h-1zM950,929h1v1h-1zM970,929h1v1h-1zM980,929h1v1h-1zM990,929h1v1h-1zM1000,929h1v1h-1zM1010,929h1v1h-1z"/><path fill="#ffffff" d="M60,748h1v1h-1zM59,749h1v1h-1zM61,749h1v1h-1zM60,750h1v1h-1zM60,778h1v1h-1zM59,779h1v1h-1zM61,779h1v1h-1zM60,780h1v1h-1zM60,808h1v1h-1zM59,809h1v1h-1zM61,809h1v1h-1zM60,810h1v1h-1zM60,838h1v1h-1zM59,839h1v1h-1zM61,839h1v1h-1zM60,840h1v1h-1zM60,868h1v1h-1zM59,869h1v1h-1zM61,869h1v1h-1zM60,870h1v1h-1zM60,898h1v1h-1zM59,899h1v1h-1zM61,899h1v1h-1zM60,900h1v1h-1zM60,928h1v1h-1zM59,929h1v1h-1zM61,929h1v1h-1zM60,930h1v1h-1zM120,748h1v1h-1zM119,749h1v1h-1zM121,749h1v1h-1zM120,750h1v1h-1zM120,778h1v1h-1zM119,779h1v1h-1zM121,779h1v1h-1zM120,780h1v1h-1zM120,808h1v1h-1zM119,809h1v1h-1zM121,809h1v1h-1zM120,810h1v1h-1zM120,838h1v1h-1zM119,839h1v1h-1zM121,839h1v1h-1zM120,840h1v1h-1zM120,868h1v1h-1zM119,869h1v1h-1zM121,869h1v1h-1zM120,870h1v1h-1zM120,898h1v1h-1zM119,899h1v1h-1zM121,899h1v1h-1zM120,900h1v1h-1zM120,928h1v1h-1zM119,929h1v1h-1zM121,929h1v1h-1zM120,930h1v1h-1zM180,748h1v1h-1zM179,749h1v1h-1zM181,749h1v1h-1zM180,750h1v1h-1zM180,778h1v1h-1zM179,779h1v1h-1zM181,779h1v1h-1zM180,780h1v1h-1zM180,808h1v1h-1zM179,809h1v1h-1zM181,809h1v1h-1zM180,810h1v1h-1zM180,838h1v1h-1zM179,839h1v1h-1zM181,839h1v1h-1zM180,840h1v1h-1zM180,868h1v1h-1zM179,869h1v1h-1zM181,869h1v1h-1zM180,870h1v1h-1zM180,898h1v1h-1zM179,899h1v1h-1zM181,899h1v1h-1zM180,900h1v1h-1zM180,928h1v1h-1zM179,929h1v1h-1zM181,929h1v1h-1zM180,930h1v1h-1zM240,748h1v1h-1zM239,749h1v1h-1zM241,749h1v1h-1zM240,750h1v1h-1zM240,778h1v1h-1zM239,779h1v1h-1zM241,779h1v1h-1zM240,780h1v1h-1zM240,808h1v1h-1zM239,809h1v1h-1zM241,809h1v1h-1zM240,810h1v1h-1zM240,838h1v1h-1zM239,839h1v1h-1zM241,839h1v1h-1zM240,840h1v1h-1zM240,868h1v1h-1zM239,869h1v1h-1zM241,869h1v1h-1zM240,870h1v1h-1zM240,898h1v1h-1zM239,899h1v1h-1zM241,899h1v1h-1zM240,900h1v1h-1zM240,928h1v1h-1zM239,929h1v1h-1zM241,929h1v1h-1zM240,930h1v1h-1zM300,748h1v1h-1zM299,749h1v1h-1zM301,749h1v1h-1zM300,750h1v1h-1zM300,778h1v1h-1zM299,779h1v1h-1zM301,779h1v1h-1zM300,780h1v1h-1zM300,808h1v1h-1zM299,809h1v1h-1zM301,809h1v1h-1zM300,810h1v1h-1zM300,838h1v1h-1zM299,839h1v1h-1zM301,839h1v1h-1zM300,840h1v1h-1zM300,868h1v1h-1zM299,869h1v1h-1zM301,869h1v1h-1zM300,870h1v1h-1zM300,898h1v1h-1zM299,899h1v1h-1zM301,899h1v1h-1zM300,900h1v1h-1zM300,928h1v1h-1zM299,929h1v1h-1zM301,929h1v1h-1zM300,930h1v1h-1zM360,748h1v1h-1zM359,749h1v1h-1zM361,749h1v1h-1zM360,750h1v1h-1zM360,778h1v1h-1zM359,779h1v1h-1zM361,779h1v1h-1zM360,780h1v1h-1zM360,808h1v1h-1zM359,809h1v1h-1zM361,809h1v1h-1zM360,810h1v1h-1zM360,838h1v1h-1zM359,839h1v1h-1zM361,839h1v1h-1zM360,840h1v1h-1zM360,868h1v1h-1zM359,869h1v1h-1zM361,869h1v1h-1zM360,870h1v1h-1zM360,898h1v1h-1zM359,899h1v1h-1zM361,899h1v1h-1zM360,900h1v1h-1zM360,928h1v1h-1zM359,929h1v1h-1zM361,929h1v1h-1zM360,930h1v1h-1zM420,748h1v1h-1zM419,749h1v1h-1zM421,749h1v1h-1zM420,750h1v1h-1zM420,778h1v1h-1zM419,779h1v1h-1zM421,779h1v1h-1zM420,780h1v1h-1zM420,808h1v1h-1zM419,809h1v1h-1zM421,809h1v1h-1zM420,810h1v1h-1zM420,838h1v1h-1zM419,839h1v1h-1zM421,839h1v1h-1zM420,840h1v1h-1zM420,868h1v1h-1zM419,869h1v1h-1zM421,869h1v1h-1zM420,870h1v1h-1zM420,898h1v1h-1zM419,899h1v1h-1zM421,899h1v1h-1zM420,900h1v1h-1zM420,928h1v1h-1zM419,929h1v1h-1zM421,929h1v1h-1zM420,930h1v1h-1zM480,748h1v1h-1zM479,749h1v1h-1zM481,749h1v1h-1zM480,750h1v1h-1zM480,778h1v1h-1zM479,779h1v1h-1zM481,779h1v1h-1zM480,780h1v1h-1zM480,808h1v1h-1zM479,809h1v1h-1zM481,809h1v1h-1zM480,810h1v1h-1zM480,838h1v1h-1zM479,839h1v1h-1zM481,839h1v1h-1zM480,840h1v1h-1zM480,868h1v1h-1zM479,869h1v1h-1zM481,869h1v1h-1zM480,870h1v1h-1zM480,898h1v1h-1zM479,899h1v1h-1zM481,899h1v1h-1zM480,900h1v1h-1zM480,928h1v1h-1zM479,929h1v1h-1zM481,929h1v1h-1zM480,930h1v1h-1zM540,748h1v1h-1zM539,749h1v1h-1zM541,749h1v1h-1zM540,750h1v1h-1zM540,778h1v1h-1zM539,779h1v1h-1zM541,779h1v1h-1zM540,780h1v1h-1zM540,808h1v1h-1zM539,809h1v1h-1zM541,809h1v1h-1zM540,810h1v1h-1zM540,838h1v1h-1zM539,839h1v1h-1zM541,839h1v1h-1zM540,840h1v1h-1zM540,868h1v1h-1zM539,869h1v1h-1zM541,869h1v1h-1zM540,870h1v1h-1zM540,898h1v1h-1zM539,899h1v1h-1zM541,899h1v1h-1zM540,900h1v1h-1zM540,928h1v1h-1zM539,929h1v1h-1zM541,929h1v1h-1zM540,930h1v1h-1zM600,748h1v1h-1zM599,749h1v1h-1zM601,749h1v1h-1zM600,750h1v1h-1zM600,778h1v1h-1zM599,779h1v1h-1zM601,779h1v1h-1zM600,780h1v1h-1zM600,808h1v1h-1zM599,809h1v1h-1zM601,809h1v1h-1zM600,810h1v1h-1zM600,838h1v1h-1zM599,839h1v1h-1zM601,839h1v1h-1zM600,840h1v1h-1zM600,868h1v1h-1zM599,869h1v1h-1zM601,869h1v1h-1zM600,870h1v1h-1zM600,898h1v1h-1zM599,899h1v1h-1zM601,899h1v1h-1zM600,900h1v1h-1zM600,928h1v1h-1zM599,929h1v1h-1zM601,929h1v1h-1zM600,930h1v1h-1zM660,748h1v1h-1zM659,749h1v1h-1zM661,749h1v1h-1zM660,750h1v1h-1zM660,778h1v1h-1zM659,779h1v1h-1zM661,779h1v1h-1zM660,780h1v1h-1zM660,808h1v1h-1zM659,809h1v1h-1zM661,809h1v1h-1zM660,810h1v1h-1zM660,838h1v1h-1zM659,839h1v1h-1zM661,839h1v1h-1zM660,840h1v1h-1zM660,868h1v1h-1zM659,869h1v1h-1zM661,869h1v1h-1zM660,870h1v1h-1zM660,898h1v1h-1zM659,899h1v1h-1zM661,899h1v1h-1zM660,900h1v1h-1zM660,928h1v1h-1zM659,929h1v1h-1zM661,929h1v1h-1zM660,930h1v1h-1zM720,748h1v1h-1zM719,749h1v1h-1zM721,749h1v1h-1zM720,750h1v1h-1zM720,778h1v1h-1zM719,779h1v1h-1zM721,779h1v1h-1zM720,780h1v1h-1zM720,808h1v1h-1zM719,809h1v1h-1zM721,809h1v1h-1zM720,810h1v1h-1zM720,838h1v1h-1zM719,839h1v1h-1zM721,839h1v1h-1zM720,840h1v1h-1zM720,868h1v1h-1zM719,869h1v1h-1zM721,869h1v1h-1zM720,870h1v1h-1zM720,898h1v1h-1zM719,899h1v1h-1zM721,899h1v1h-1zM720,900h1v1h-1zM720,928h1v1h-1zM719,929h1v1h-1zM721,929h1v1h-1zM720,930h1v1h-1zM780,748h1v1h-1zM779,749h1v1h-1zM781,749h1v1h-1zM780,750h1v1h-1zM780,778h1v1h-1zM779,779h1v1h-1zM781,779h1v1h-1zM780,780h1v1h-1zM780,808h1v1h-1zM779,809h1v1h-1zM781,809h1v1h-1zM780,810h1v1h-1zM780,838h1v1h-1zM779,839h1v1h-1zM781,839h1v1h-1zM780,840h1v1h-1zM780,868h1v1h-1zM779,869h1v1h-1zM781,869h1v1h-1zM780,870h1v1h-1zM780,898h1v1h-1zM779,899h1v1h-1zM781,899h1v1h-1zM780,900h1v1h-1zM780,928h1v1h-1zM779,929h1v1h-1zM781,929h1v1h-1zM780,930h1v1h-1zM840,748h1v1h-1zM839,749h1v1h-1zM841,749h1v1h-1zM840,750h1v1h-1zM840,778h1v1h-1zM839,779h1v1h-1zM841,779h1v1h-1zM840,780h1v1h-1zM840,808h1v1h-1zM839,809h1v1h-1zM841,809h1v1h-1zM840,810h1v1h-1zM840,838h1v1h-1zM839,839h1v1h-1zM841,839h1v1h-1zM840,840h1v1h-1zM840,868h1v1h-1zM839,869h1v1h-1zM841,869h1v1h-1zM840,870h1v1h-1zM840,898h1v1h-1zM839,899h1v1h-1zM841,899h1v1h-1zM840,900h1v1h-1zM840,928h1v1h-1zM839,929h1v1h-1zM841,929h1v1h-1zM840,930h1v1h-1zM900,748h1v1h-1zM899,749h1v1h-1zM901,749h1v1h-1zM900,750h1v1h-1zM900,778h1v1h-1zM899,779h1v1h-1zM901,779h1v1h-1zM900,780h1v1h-1zM900,808h1v1h-1zM899,809h1v1h-1zM901,809h1v1h-1zM900,810h1v1h-1zM900,838h1v1h-1zM899,839h1v1h-1zM901,839h1v1h-1zM900,840h1v1h-1zM900,868h1v1h-1zM899,869h1v1h-1zM901,869h1v1h-1zM900,870h1v1h-1zM900,898h1v1h-1zM899,899h1v1h-1zM901,899h1v1h-1zM900,900h1v1h-1zM900,928h1v1h-1zM899,929h1v1h-1zM901,929h1v1h-1zM900,930h1v1h-1zM960,748h1v1h-1zM959,749h1v1h-1zM961,749h1v1h-1zM960,750h1v1h-1zM960,778h1v1h-1zM959,779h1v1h-1zM961,779h1v1h-1zM960,780h1v1h-1zM960,808h1v1h-1zM959,809h1v1h-1zM961,809h1v1h-1zM960,810h1v1h-1zM960,838h1v1h-1zM959,839h1v1h-1zM961,839h1v1h-1zM960,840h1v1h-1zM960,868h1v1h-1zM959,869h1v1h-1zM961,869h1v1h-1zM960,870h1v1h-1zM960,898h1v1h-1zM959,899h1v1h-1zM961,899h1v1h-1zM960,900h1v1h-1zM960,928h1v1h-1zM959,929h1v1h-1zM961,929h1v1h-1zM960,930h1v1h-1z"/><path fill="#ffffff" d="M0,720h1020v1h-1020z M0,959h1020v1h-1020z M0,720h1v240h-1z M1019,720h1v240h-1zM10,721h1v1h-1z M10,958h1v1h-1zM20,721h1v1h-1z M20,958h1v1h-1zM30,721h1v1h-1z M30,958h1v1h-1zM40,721h1v1h-1z M40,958h1v1h-1zM50,721h1v1h-1z M50,958h1v1h-1zM60,721h1v3h-1z M60,956h1v3h-1zM70,721h1v1h-1z M70,958h1v1h-1zM80,721h1v1h-1z M80,958h1v1h-1zM90,721h1v1h-1z M90,958h1v1h-1zM100,721h1v1h-1z M100,958h1v1h-1zM110,721h1v1h-1z M110,958h1v1h-1zM120,721h1v3h-1z M120,956h1v3h-1zM130,721h1v1h-1z M130,958h1v1h-1zM140,721h1v1h-1z M140,958h1v1h-1zM150,721h1v1h-1z M150,958h1v1h-1zM160,721h1v1h-1z M160,958h1v1h-1zM170,721h1v1h-1z M170,958h1v1h-1zM180,721h1v3h-1z M180,956h1v3h-1zM190,721h1v1h-1z M190,958h1v1h-1zM200,721h1v1h-1z M200,958h1v1h-1zM210,721h1v1h-1z M210,958h1v1h-1zM220,721h1v1h-1z M220,958h1v1h-1zM230,721h1v1h-1z M230,958h1v1h-1zM240,721h1v3h-1z M240,956h1v3h-1zM250,721h1v1h-1z M250,958h1v1h-1zM260,721h1v1h-1z M260,958h1v1h-1zM270,721h1v1h-1z M270,958h1v1h-1zM280,721h1v1h-1z M280,958h1v1h-1zM290,721h1v1h-1z M290,958h1v1h-1zM300,721h1v3h-1z M300,956h1v3h-1zM310,721h1v1h-1z M310,958h1v1h-1zM320,721h1v1h-1z M320,958h1v1h-1zM330,721h1v1h-1z M330,958h1v1h-1zM340,721h1v1h-1z M340,958h1v1h-1zM350,721h1v1h-1z M350,958h1v1h-1zM360,721h1v3h-1z M360,956h1v3h-1zM370,721h1v1h-1z M370,958h1v1h-1zM380,721h1v1h-1z M380,958h1v1h-1zM390,721h1v1h-1z M390,958h1v1h-1zM400,721h1v1h-1z M400,958h1v1h-1zM410,721h1v1h-1z M410,958h1v1h-1zM420,721h1v3h-1z M420,956h1v3h-1zM430,721h1v1h-1z M430,958h1v1h-1zM440,721h1v1h-1z M440,958h1v1h-1zM450,721h1v1h-1z M450,958h1v1h-1zM460,721h1v1h-1z M460,958h1v1h-1zM470,721h1v1h-1z M470,958h1v1h-1zM480,721h1v3h-1z M480,956h1v3h-1zM490,721h1v1h-1z M490,958h1v1h-1zM500,721h1v1h-1z M500,958h1v1h-1zM510,721h1v1h-1z M510,958h1v1h-1zM520,721h1v1h-1z M520,958h1v1h-1zM530,721h1v1h-1z M530,958h1v1h-1zM540,721h1v3h-1z M540,956h1v3h-1zM550,721h1v1h-1z M550,958h1v1h-1zM560,721h1v1h-1z M560,958h1v1h-1zM570,721h1v1h-1z M570,958h1v1h-1zM580,721h1v1h-1z M580,958h1v1h-1zM590,721h1v1h-1z M590,958h1v1h-1zM600,721h1v3h-1z M600,956h1v3h-1zM610,721h1v1h-1z M610,958h1v1h-1zM620,721h1v1h-1z M620,958h1v1h-1zM630,721h1v1h-1z M630,958h1v1h-1zM640,721h1v1h-1z M640,958h1v1h-1zM650,721h1v1h-1z M650,958h1v1h-1zM660,721h1v3h-1z M660,956h1v3h-1zM670,721h1v1h-1z M670,958h1v1h-1zM680,721h1v1h-1z M680,958h1v1h-1zM690,721h1v1h-1z M690,958h1v1h-1zM700,721h1v1h-1z M700,958h1v1h-1zM710,721h1v1h-1z M710,958h1v1h-1zM720,721h1v3h-1z M720,956h1v3h-1zM730,721h1v1h-1z M730,958h1v1h-1zM740,721h1v1h-1z M740,958h1v1h-1zM750,721h1v1h-1z M750,958h1v1h-1zM760,721h1v1h-1z M760,958h1v1h-1zM770,721h1v1h-1z M770,958h1v1h-1zM780,721h1v3h-1z M780,956h1v3h-1zM790,721h1v1h-1z M790,958h1v1h-1zM800,721h1v1h-1z M800,958h1v1h-1zM810,721h1v1h-1z M810,958h1v1h-1zM820,721h1v1h-1z M820,958h1v1h-1zM830,721h1v1h-1z M830,958h1v1h-1zM840,721h1v3h-1z M840,956h1v3h-1zM850,721h1v1h-1z M850,958h1v1h-1zM860,721h1v1h-1z M860,958h1v1h-1zM870,721h1v1h-1z M870,958h1v1h-1zM880,721h1v1h-1z M880,958h1v1h-1zM890,721h1v1h-1z M890,958h1v1h-1zM900,721h1v3h-1z M900,956h1v3h-1zM910,721h1v1h-1z M910,958h1v1h-1zM920,721h1v1h-1z M920,958h1v1h-1zM930,721h1v1h-1z M930,958h1v1h-1zM940,721h1v1h-1z M940,958h1v1h-1zM950,721h1v1h-1z M950,958h1v1h-1zM960,721h1v3h-1z M960,956h1v3h-1zM970,721h1v1h-1z M970,958h1v1h-1zM980,721h1v1h-1z M980,958h1v1h-1zM990,721h1v1h-1z M990,958h1v1h-1zM1000,721h1v1h-1z M1000,958h1v1h-1zM1010,721h1v1h-1z M1010,958h1v1h-1zM1,725h1v1h-1z M1018,725h1v1h-1zM1,731h1v1h-1z M1018,731h1v1h-1zM1,737h1v1h-1z M1018,737h1v1h-1zM1,743h1v1h-1z M1018,743h1v1h-1zM1,749h3v1h-3z M1016,749h3v1h-3zM1,755h1v1h-1z M1018,755h1v1h-1zM1,761h1v1h-1z M1018,761h1v1h-1zM1,767h1v1h-1z M1018,767h1v1h-1zM1,773h1v1h-1z M1018,773h1v1h-1zM1,779h3v1h-3z M1016,779h3v1h-3zM1,785h1v1h-1z M1018,785h1v1h-1zM1,791h1v1h-1z M1018,791h1v1h-1zM1,797h1v1h-1z M1018,797h1v1h-1zM1,803h1v1h-1z M1018,803h1v1h-1zM1,809h3v1h-3z M1016,809h3v1h-3zM1,815h1v1h-1z M1018,815h1v1h-1zM1,821h1v1h-1z M1018,821h1v1h-1zM1,827h1v1h-1z M1018,827h1v1h-1zM1,833h1v1h-1z M1018,833h1v1h-1zM1,839h3v1h-3z M1016,839h3v1h-3zM1,845h1v1h-1z M1018,845h1v1h-1zM1,851h1v1h-1z M1018,851h1v1h-1zM1,857h1v1h-1z M1018,857h1v1h-1zM1,863h1v1h-1z M1018,863h1v1h-1zM1,869h3v1h-3z M1016,869h3v1h-3zM1,875h1v1h-1z M1018,875h1v1h-1zM1,881h1v1h-1z M1018,881h1v1h-1zM1,887h1v1h-1z M1018,887h1v1h-1zM1,893h1v1h-1z M1018,893h1v1h-1zM1,899h3v1h-3z M1016,899h3v1h-3zM1,905h1v1h-1z M1018,905h1v1h-1zM1,911h1v1h-1z M1018,911h1v1h-1zM1,917h1v1h-1z M1018,917h1v1h-1zM1,923h1v1h-1z M1018,923h1v1h-1zM1,929h3v1h-3z M1016,929h3v1h-3zM1,935h1v1h-1z M1018,935h1v1h-1zM1,941h1v1h-1z M1018,941h1v1h-1zM1,947h1v1h-1z M1018,947h1v1h-1zM1,953h1v1h-1z M1018,953h1v1h-1z"/><rect x="0" y="720" width="2" height="10" fill="#ff0000"/><rect x="338" y="719" width="3" height="2" fill="#00ff00"/></g><polyline points="0.5,821 1.5,867 2.5,822 3.5,862 5.5,819 7.5,861 8.5,807 10.5,880 11.5,791 12.5,871 14.5,813 16.5,890 17.5,808 18.5,879 20.5,818 22.5,806 23.5,870 24.5,790 25.5,890 26.5,820 27.5,874 28.5,872 30.5,793 32.5,864 33.5,815 35.5,873 36.5,801 37.5,863 38.5,788 39.5,890 42.5,793 44.5,890 45.5,821 47.5,873 49.5,802 50.5,866 52.5,821 54.5,801 55.5,866 56.5,819 58.5,863 60.5,809 62.5,822 64.5,867 67.5,791 70.5,875 72.5,811 74.5,873 75.5,805 77.5,862 78.5,886 80.5,819 81.5,870 82.5,823 84.5,798 86.5,890 87.5,822 88.5,865 91.5,862 93.5,826 96.5,863 99.5,859 102.5,872 103.5,804 105.5,882 107.5,818 108.5,869 109.5,788 111.5,855 112.5,819 113.5,872 116.5,888 117.5,811 118.5,854 120.5,788 123.5,850 126.5,877 129.5,800 131.5,865 132.5,801 135.5,798 138.5,860 139.5,788 142.5,851 144.5,788 146.5,850 147.5,788 149.5,852 150.5,788 151.5,867 152.5,814 153.5,864 154.5,884 157.5,805 159.5,886 161.5,795 163.5,875 164.5,818 165.5,862 167.5,797 170.5,880 171.5,853 172.5,821 174.5,869 175.5,818 177.5,788 179.5,886 181.5,818 183.5,788 184.5,806 185.5,855 187.5,808 190.5,847 191.5,855 192.5,788 193.5,805 195.5,857 197.5,788 200.5,851 202.5,804 204.5,851 205.5,796 207.5,848 209.5,814 210.5,882 211.5,788 212.5,882 213.5,806 216.5,853 218.5,801 221.5,856 222.5,802 223.5,848 224.5,815 225.5,886 226.5,868 228.5,805 230.5,859 231.5,805 232.5,855 234.5,823 235.5,873 236.5,819 238.5,854 239.5,809 242.5,857 244.5,873 246.5,804 247.5,879 250.5,828 251.5,877 252.5,818 255.5,860 256.5,813 258.5,884 259.5,805 260.5,873 261.5,827 262.5,889 263.5,825 264.5,882 266.5,830 267.5,860 268.5,830 270.5,862 271.5,828 273.5,820 275.5,867 276.5,823 278.5,883 279.5,810 281.5,889 283.5,808 284.5,877 286.5,865 289.5,790 290.5,793 292.5,862 294.5,821 295.5,855 296.5,862 298.5,823 300.5,890 301.5,810 302.5,856 304.5,810 306.5,890 307.5,802 310.5,866 313.5,797 314.5,866 316.5,820 319.5,871 322.5,820 324.5,792 326.5,867 327.5,826 329.5,828 331.5,806 332.5,859 333.5,876 334.5,807 337.5,890 338.5,826 340.5,817 343.5,864 344.5,824 345.5,879 346.5,817 347.5,873 350.5,819 352.5,874 354.5,821 355.5,888 356.5,859 358.5,811 359.5,855 360.5,788 363.5,885 364.5,790 365.5,869 366.5,808 367.5,883 368.5,812 369.5,848 372.5,798 375.5,846 376.5,788 377.5,869 379.5,802 380.5,870 381.5,815 382.5,849 383.5,807 384.5,874 386.5,790 387.5,860 388.5,801 389.5,864 390.5,796 391.5,871 392.5,794 393.5,863 395.5,864 397.5,870 399.5,847 401.5,819 403.5,808 404.5,884 406.5,807 407.5,861 408.5,821 409.5,882 411.5,813 412.5,805 413.5,861 414.5,821 416.5,851 417.5,791 418.5,888 419.5,788 420.5,859 423.5,816 425.5,813 426.5,886 427.5,819 428.5,869 429.5,820 430.5,865 431.5,788 432.5,874 433.5,799 436.5,789 437.5,858 439.5,814 441.5,853 444.5,875 445.5,792 446.5,863 447.5,794 449.5,883 450.5,788 451.5,796 453.5,806 454.5,876 456.5,790 459.5,796 460.5,851 463.5,815 466.5,852 467.5,802 468.5,868 471.5,792 472.5,811 474.5,890 475.5,814 478.5,856 479.5,788 480.5,884 482.5,804 484.5,862 485.5,817 488.5,870 489.5,796 490.5,890 492.5,821 493.5,860 495.5,823 496.5,794 497.5,866 498.5,809 500.5,876 501.5,803 504.5,877 507.5,829 508.5,890 509.5,831 510.5,878 511.5,821 512.5,890 513.5,813 516.5,859 517.5,808 519.5,813 520.5,869 522.5,868 524.5,824 525.5,864 526.5,822 529.5,889 531.5,822 532.5,859 533.5,890 534.5,816 536.5,860 537.5,811 539.5,861 541.5,822 542.5,860 545.5,817 546.5,865 549.5,804 550.5,857 551.5,823 553.5,856 554.5,810 555.5,890 556.5,799 557.5,794 558.5,866 559.5,826 560.5,870 561.5,806 562.5,873 563.5,800 566.5,860 569.5,796 570.5,887 572.5,803 573.5,890 575.5,816 578.5,875 579.5,798 580.5,864 581.5,804 584.5,877 587.5,798 590.5,868 592.5,819 594.5,853 596.5,819 597.5,888 599.5,811 600.5,856 602.5,813 603.5,819 604.5,852 606.5,874 609.5,857 611.5,812 612.5,867 613.5,788 616.5,851 617.5,811 619.5,849 621.5,880 623.5,809 624.5,860 625.5,848 628.5,802 630.5,863 632.5,788 633.5,869 636.5,850 637.5,845 640.5,788 641.5,862 642.5,802 644.5,814 645.5,880 646.5,870 649.5,886 652.5,815 654.5,849 656.5,788 657.5,854 658.5,820 659.5,851 661.5,817 662.5,882 664.5,820 667.5,854 668.5,810 669.5,856 670.5,815 671.5,852 673.5,788 674.5,870 675.5,794 676.5,858 677.5,880 678.5,819 680.5,871 682.5,803 683.5,790 686.5,861 689.5,797 691.5,853 694.5,803 695.5,853 696.5,799 697.5,882 698.5,796 700.5,793 701.5,886 703.5,788 704.5,887 705.5,795 706.5,858 708.5,872 711.5,788 713.5,883 715.5,809 718.5,890 719.5,820 721.5,804 722.5,867 723.5,825 724.5,858 727.5,824 730.5,824 731.5,862 733.5,866 736.5,866 737.5,832 740.5,877 743.5,815 746.5,881 747.5,823 748.5,877 749.5,798 751.5,811 753.5,861 755.5,794 756.5,867 759.5,860 760.5,813 762.5,867 763.5,801 764.5,828 766.5,882 767.5,791 768.5,872 771.5,820 773.5,863 776.5,789 777.5,805 778.5,867 781.5,808 783.5,854 785.5,885 786.5,820 789.5,852 790.5,789 792.5,872 794.5,790 795.5,863 798.5,818 799.5,857 801.5,788 802.5,890 803.5,819 804.5,807 805.5,858 808.5,873 809.5,812 811.5,824 812.5,866 814.5,858 816.5,825 818.5,874 819.5,824 821.5,808 824.5,854 827.5,797 830.5,788 833.5,866 836.5,788 838.5,863 840.5,790 842.5,856 844.5,788 845.5,865 846.5,864 847.5,814 848.5,869 850.5,853 851.5,788 852.5,859 854.5,794 857.5,849 860.5,864 861.5,799 862.5,843 864.5,809 866.5,848 867.5,792 868.5,854 869.5,848 871.5,880 873.5,856 874.5,811 877.5,855 878.5,788 881.5,865 882.5,788 885.5,878 886.5,788 888.5,873 890.5,788 893.5,855 894.5,799 896.5,814 897.5,815 899.5,788 900.5,867 901.5,820 902.5,854 903.5,876 904.5,804 905.5,855 907.5,808 910.5,885 912.5,798 913.5,864 916.5,789 919.5,875 920.5,803 922.5,860 923.5,823 924.5,793 925.5,851 926.5,793 928.5,857" stroke="#00ff00" stroke-width="1" fill="none" shape-rendering="crispEdges"/><polyline points="0.5,853.5 3.5,853.5 3.5,853.5 5.5,853.5 5.5,865.5 13.5,865.5 13.5,853.5 15.5,853.5 15.5,859.5 18.5,859.5 18.5,853.5 26.5,853.5 26.5,859.5 34.5,859.5 34.5,853.5 40.5,853.5 40.5,853.5 44.5,853.5 44.5,853.5 50.5,853.5 50.5,853.5 54.5,853.5 54.5,859.5 60.5,859.5 60.5,859.5 64.5,859.5 64.5,859.5 66.5,859.5 66.5,853.5 70.5,853.5 70.5,859.5 72.5,859.5 72.5,865.5 80.5,865.5 80.5,859.5 86.5,859.5 86.5,847.5 88.5,847.5 88.5,859.5 93.5,859.5 93.5,859.5 99.5,859.5 99.5,859.5 105.5,859.5 105.5,859.5 113.5,859.5 113.5,859.5 116.5,859.5 116.5,853.5 124.5,853.5 124.5,859.5 127.5,859.5 127.5,853.5 129.5,853.5 129.5,853.5 133.5,853.5 133.5,859.5 137.5,859.5 137.5,847.5 141.5,847.5 141.5,859.5 143.5,859.5 143.5,853.5 145.5,853.5 145.5,853.5 147.5,853.5 147.5,853.5 155.5,853.5 155.5,853.5 157.5,853.5 157.5,853.5 165.5,853.5 165.5,853.5 170.5,853.5 170.5,859.5 175.5,859.5 175.5,859.5 177.5,859.5 177.5,859.5 185.5,859.5 185.5,853.5 187.5,853.5 187.5,859.5 192.5,859.5 192.5,859.5 195.5,859.5 195.5,859.5 197.5,859.5 197.5,859.5 205.5,859.5 205.5,859.5 207.5,859.5 207.5,859.5 212.5,859.5 212.5,859.5 216.5,859.5 216.5,865.5 218.5,865.5 218.5,859.5 226.5,859.5 226.5,853.5 231.5,853.5 231.5,853.5 234.5,853.5 234.5,853.5 240.5,853.5 240.5,868.5 246.5,868.5 246.5,859.5 249.5,859.5 249.5,859.5 253.5,859.5 253.5,865.5 258.5,865.5 258.5,859.5 263.5,859.5 263.5,859.5 269.5,859.5 269.5,853.5 275.5,853.5 275.5,859.5 281.5,859.5 281.5,859.5 283.5,859.5 283.5,859.5 287.5,859.5 287.5,859.5 290.5,859.5 290.5,859.5 296.5,859.5 296.5,865.5 301.5,865.5 301.5,865.5 305.5,865.5 305.5,865.5 307.5,865.5 307.5,865.5 313.5,865.5 313.5,859.5 319.5,859.5 319.5,859.5 323.5,859.5 323.5,859.5 328.5,859.5 328.5,865.5 336.5,865.5 336.5,865.5 342.5,865.5 342.5,864.5 350.5,864.5 350.5,847.5 352.5,847.5 352.5,853.5 354.5,853.5 354.5,864.5 356.5,864.5 356.5,853.5 360.5,853.5 360.5,853.5 365.5,853.5 365.5,859.5 368.5,859.5 368.5,859.5 376.5,859.5 376.5,853.5 380.5,853.5 380.5,853.5 383.5,853.5 383.5,853.5 388.5,853.5 388.5,859.5 396.5,859.5 396.5,859.5 400.5,859.5 400.5,847.5 406.5,847.5 406.5,859.5 409.5,859.5 409.5,853.5 414.5,853.5 414.5,859.5 418.5,859.5 418.5,853.5 424.5,853.5 424.5,853.5 428.5,853.5 428.5,847.5 431.5,847.5 431.5,859.5 433.5,859.5 433.5,853.5 438.5,853.5 438.5,853.5 440.5,853.5 440.5,853.5 442.5,853.5 442.5,859.5 446.5,859.5 446.5,853.5 454.5,853.5 454.5,859.5 457.5,859.5 457.5,859.5 465.5,859.5 465.5,859.5 469.5,859.5 469.5,859.5 475.5,859.5 475.5,853.5 477.5,853.5 477.5,853.5 485.5,853.5 485.5,853.5 487.5,853.5 487.5,847.5 489.5,847.5 489.5,853.5 493.5,853.5 493.5,853.5 501.5,853.5 501.5,847.5 505.5,847.5 505.5,864.5 510.5,864.5 510.5,859.5 513.5,859.5 513.5,853.5 518.5,853.5 518.5,859.5 520.5,859.5 520.5,853.5 522.5,853.5 522.5,853.5 530.5,853.5 530.5,853.5 532.5,853.5 532.5,864.5 534.5,864.5 534.5,853.5 538.5,853.5 538.5,859.5 540.5,859.5 540.5,859.5 543.5,859.5 543.5,859.5 548.5,859.5 548.5,859.5 551.5,859.5 551.5,853.5 554.5,853.5 554.5,859.5 558.5,859.5 558.5,865.5 563.5,865.5 563.5,859.5 568.5,859.5 568.5,859.5 570.5,859.5 570.5,859.5 573.5,859.5 573.5,859.5 575.5,859.5 575.5,865.5 579.5,865.5 579.5,853.5 582.5,853.5 582.5,865.5 586.5,865.5 586.5,865.5 594.5,865.5 594.5,865.5 602.5,865.5 602.5,853.5 606.5,853.5 606.5,853.5 612.5,853.5 612.5,864.5 614.5,864.5 614.5,859.5 620.5,859.5 620.5,853.5 626.5,853.5 626.5,853.5 629.5,853.5 629.5,853.5 635.5,853.5 635.5,853.5 638.5,853.5 638.5,853.5 646.5,853.5 646.5,859.5 650.5,859.5 650.5,859.5 658.5,859.5 658.5,853.5 660.5,853.5 660.5,847.5 664.5,847.5 664.5,853.5 669.5,853.5 669.5,853.5 674.5,853.5 674.5,853.5 677.5,853.5 677.5,853.5 681.5,853.5 681.5,859.5 687.5,859.5 687.5,865.5 693.5,865.5 693.5,859.5 695.5,859.5 695.5,859.5 699.5,859.5 699.5,859.5 705.5,859.5 705.5,865.5 707.5,865.5 707.5,859.5 713.5,859.5 713.5,853.5 716.5,853.5 716.5,859.5 719.5,859.5 719.5,865.5 723.5,865.5 723.5,859.5 725.5,859.5 725.5,853.5 733.5,853.5 733.5,859.5 739.5,859.5 739.5,853.5 742.5,853.5 742.5,859.5 744.5,859.5 744.5,859.5 746.5,859.5 746.5,853.5 750.5,853.5 750.5,859.5 753.5,859.5 753.5,859.5 756.5,859.5 756.5,853.5 764.5,853.5 764.5,853.5 766.5,853.5 766.5,864.5 771.5,864.5 771.5,853.5 773.5,853.5 773.5,853.5 777.5,853.5 777.5,859.5 781.5,859.5 781.5,853.5 787.5,853.5 787.5,853.5 792.5,853.5 792.5,859.5 798.5,859.5 798.5,853.5 802.5,853.5 802.5,853.5 810.5,853.5 810.5,865.5 813.5,865.5 813.5,853.5 819.5,853.5 819.5,859.5 824.5,859.5 824.5,853.5 829.5,853.5 829.5,853.5 831.5,853.5 831.5,859.5 835.5,859.5 835.5,859.5 843.5,859.5 843.5,859.5 849.5,859.5 849.5,865.5 851.5,865.5 851.5,859.5 855.5,859.5 855.5,853.5 858.5,853.5 858.5,859.5 864.5,859.5 864.5,865.5 870.5,865.5 870.5,865.5 872.5,865.5 872.5,859.5 877.5,859.5 877.5,853.5 885.5,853.5 885.5,859.5 890.5,859.5 890.5,859.5 898.5,859.5 898.5,859.5 902.5,859.5 902.5,859.5 908.5,859.5 908.5,859.5 910.5,859.5 910.5,865.5 916.5,865.5 916.5,859.5 921.5,859.5 921.5,864.5 924.5,864.5 924.5,847.5 928.5,847.5 928.5,853.5 929.5,853.5" stroke="#00ffff" stroke-width="1" fill="none" shape-rendering="crispEdges"/><polyline points="0.5,750.5 142.5,750.5 142.5,899.5 144.5,899.5 144.5,750.5 159.5,750.5 159.5,899.5 160.5,899.5 160.5,750.5 162.5,750.5 162.5,899.5 164.5,899.5 164.5,750.5 165.5,750.5 165.5,899.5 169.5,899.5 169.5,750.5 170.5,750.5 170.5,899.5 173.5,899.5 173.5,750.5 175.5,750.5 175.5,899.5 176.5,899.5 176.5,750.5 178.5,750.5 178.5,899.5 179.5,899.5 179.5,750.5 179.5,750.5 179.5,899.5 181.5,899.5 181.5,750.5 183.5,750.5 183.5,899.5 185.5,899.5 185.5,750.5 188.5,750.5 188.5,899.5 189.5,899.5 189.5,750.5 189.5,750.5 189.5,899.5 191.5,899.5 191.5,750.5 241.5,750.5 241.5,899.5 242.5,899.5 242.5,750.5 242.5,750.5 242.5,899.5 246.5,899.5 246.5,750.5 247.5,750.5 247.5,899.5 250.5,899.5 250.5,750.5 277.5,750.5 277.5,899.5 280.5,899.5 280.5,750.5 282.5,750.5 282.5,899.5 285.5,899.5 285.5,750.5 323.5,750.5 323.5,899.5 325.5,899.5 325.5,750.5 326.5,750.5 326.5,899.5 330.5,899.5 330.5,750.5 331.5,750.5 331.5,899.5 333.5,899.5 333.5,750.5 627.5,750.5 627.5,899.5 630.5,899.5 630.5,750.5 739.5,750.5 739.5,899.5 741.5,899.5 741.5,750.5 742.5,750.5 742.5,899.5 744.5,899.5 744.5,750.5 746.5,750.5 746.5,899.5 749.5,899.5 749.5,750.5 861.5,750.5 861.5,899.5 863.5,899.5 863.5,750.5 871.5,750.5 871.5,899.5 874.5,899.5 874.5,750.5 929.5,750.5" stroke="#e000e0" stroke-width="1" fill="none" shape-rendering="crispEdges"/><path d="M334,733 L346,745 M346,733 L334,745" stroke="#ffffff" stroke-width="2"/><g font-family="Liberation Mono" font-size="13.333" xml:space="preserve"><text x="1048" y="739" fill="#606060" font-weight="bold">&lt;20</text><text x="1048" y="753" fill="#a00000" font-weight="bold">&gt;20</text><text x="1048" y="767" fill="#ff0000" font-weight="bold">&gt;23</text><text x="1232" y="739" fill="#ff5050" font-weight="bold">&gt;26</text><text x="1232" y="753" fill="#8c5c00" font-weight="bold">&gt;29</text><text x="1232" y="767" fill="#ffff00" font-weight="bold">&gt;32</text><text x="1048" y="921" fill="#4848ff" font-weight="bold">&gt;35</text><text x="1048" y="935" fill="#8080ff" font-weight="bold">&gt;38</text><text x="1048" y="949" fill="#00ffff" font-weight="bold">&gt;41</text><text x="1232" y="921" fill="#006400" font-weight="bold">&gt;44</text><text x="1232" y="935" fill="#00ff00" font-weight="bold">&gt;47</text><text x="1232" y="949" fill="#606060" font-weight="bold">&gt;50</text></g><defs><clipPath id="cpA"><polygon points="1057.8,783.6 1062.5,774.2 1070.6,764.7 1080.1,755.2 1082.8,747.1 1086.9,748.4 1086.9,753.9 1093.6,755.2 1100.4,760.6 1105.8,762.0 1111.2,767.4 1108.5,771.5 1101.8,770.1 1097.7,767.4 1095.0,764.7 1089.6,764.7 1084.2,768.7 1078.7,776.9 1074.7,783.6 1070.6,790.4 1065.2,790.4 1060.5,787.7"/></clipPath><clipPath id="cpG"><polygon points="1218.5,831.5 1268.0,831.5 1268.0,843.5 1218.5,843.5"/></clipPath><clipPath id="cpM"><polygon points="1153.7,821.0 1165.0,824.0 1180.0,831.3 1191.7,840.0 1195.0,852.0 1197.5,863.3 1191.0,868.0 1185.8,872.1 1187.0,885.0 1188.5,903.0 1185.8,907.0 1177.1,901.3 1170.0,890.0 1165.4,880.8 1159.6,872.1 1152.3,851.7 1151.5,839.5"/></clipPath><clipPath id="cpI"><polygon points="1081.5,924.8 1083.0,912.0 1084.2,905.8 1088.2,886.9 1092.3,870.6 1097.7,861.1 1104.5,855.0 1111.2,846.0 1116.7,838.0 1121.0,841.0 1119.4,848.0 1114.0,857.1 1110.0,866.0 1111.2,878.0 1110.0,888.0 1105.0,898.0 1100.4,905.8 1092.3,916.7 1086.9,926.1"/></clipPath><clipPath id="cpJ1"><polygon points="1116.7,878.7 1123.4,877.4 1124.8,895.0 1127.5,924.8 1124.8,937.0 1119.4,938.3 1118.0,924.8 1116.7,897.7"/></clipPath><clipPath id="cpJ2"><polygon points="1130.9,885.5 1137.7,886.9 1135.6,900.4 1132.9,911.2 1127.5,911.2 1128.8,897.7"/></clipPath><clipPath id="cpK1"><polygon points="1124.8,938.3 1132.9,934.3 1134.3,938.3 1127.5,949.2 1123.4,951.9 1122.1,946.5"/></clipPath><clipPath id="cpK2"><polygon points="1135.6,926.1 1142.4,926.1 1154.6,947.8 1151.9,954.6 1146.5,951.9 1137.0,932.9"/></clipPath><clipPath id="cpL"><polygon points="1152.0,844.9 1160.0,843.5 1162.0,870.6 1160.0,885.5 1155.9,886.9 1153.2,870.6"/></clipPath><clipPath id="cpC"><polygon points="1051.7,814.8 1057.1,814.8 1065.2,817.5 1074.7,820.2 1077.4,801.2 1081.5,799.9 1081.5,812.1 1076.0,828.3 1073.3,836.5 1067.9,836.5 1069.3,825.6 1063.9,822.9 1053.0,820.2"/></clipPath><clipPath id="cpP"><polygon points="1241.6,859.8 1248.3,861.1 1248.3,873.3 1249.7,897.7 1245.6,903.1 1229.4,893.6 1232.1,886.9 1240.2,870.6"/></clipPath></defs><clipPath id="csA3"><polygon points="1068.8,799.2 1069.4,795.8 1070.1,792.5 1070.9,789.2 1071.9,785.8 1074.2,783.4 1076.6,781.0 1079.1,778.8 1081.6,776.6 1089.1,783.3 1087.5,785.8 1086.1,788.4 1084.8,791.0 1083.5,793.6 1082.4,796.3 1081.4,799.0 1080.4,801.7 1079.6,804.4"/></clipPath><g clip-path="url(#csA3)" fill="none"><polygon points="1068.8,799.2 1069.4,795.8 1070.1,792.5 1070.9,789.2 1071.9,785.8 1074.2,783.4 1076.6,781.0 1079.1,778.8 1081.6,776.6 1089.1,783.3 1087.5,785.8 1086.1,788.4 1084.8,791.0 1083.5,793.6 1082.4,796.3 1081.4,799.0 1080.4,801.7 1079.6,804.4" fill="#8c5c00"/><polyline points="1077.9,806.7 1078.9,804.1 1079.5,801.2 1080.3,798.4 1081.1,795.5 1082.2,792.7 1083.4,790.1 1084.8,787.4 1086.4,784.9 1088.1,782.4 1090.2,780.3" stroke="#ff5050" stroke-width="3.2"/><polyline points="1077.1,806.4 1078.5,803.9 1079.3,801.1 1080.2,798.3 1081.1,795.5 1082.0,792.6 1083.2,789.9 1084.5,787.1 1085.8,784.4 1087.3,781.7 1089.1,779.3" stroke="#ff0000" stroke-width="1.1"/><polyline points="1075.5,805.6 1076.6,803.0 1077.2,800.0 1077.9,797.0 1078.7,794.0 1079.7,791.1 1081.2,788.4 1082.8,785.8 1084.6,783.3 1086.5,781.0 1088.6,778.8" stroke="#ff5050" stroke-width="2.1"/><polyline points="1073.3,804.7 1073.9,801.7 1074.2,798.4 1074.7,795.2 1075.7,792.2 1077.1,789.3 1079.3,787.1 1081.7,785.0 1084.1,783.0 1086.4,780.9 1088.5,778.7" stroke="#8c5c00" stroke-width="3.2"/><polyline points="1070.5,803.4 1071.8,800.6 1072.6,797.5 1073.4,794.4 1074.5,791.4 1075.6,788.3 1077.7,785.9 1079.9,783.6 1082.1,781.3 1084.4,779.1 1086.5,776.8" stroke="#ff0000" stroke-width="2.6"/><polyline points="1069.2,802.9 1070.8,800.1 1071.6,797.0 1072.6,793.9 1073.6,790.8 1074.7,787.7 1076.9,785.3 1079.2,783.0 1081.5,780.7 1083.8,778.5 1085.9,776.2" stroke="#ff5050" stroke-width="2.1"/><polyline points="1068.1,802.4 1069.3,799.4 1069.7,796.0 1070.3,792.6 1071.0,789.2 1071.9,785.8 1074.1,783.3 1076.5,780.9 1078.9,778.6 1081.5,776.5 1083.8,774.1" stroke="#ff5050" stroke-width="1.6"/><polyline points="1066.5,801.6 1068.0,798.8 1068.7,795.5 1069.5,792.1 1070.4,788.8 1071.4,785.5 1073.9,783.1 1076.4,780.8 1078.9,778.6 1081.4,776.4 1083.6,773.9" stroke="#ff5050" stroke-width="1.6"/></g><clipPath id="csA2"><polygon points="1100.1,763.2 1101.5,761.8 1103.0,760.4 1104.6,759.1 1106.2,757.7 1107.8,756.4 1109.4,755.2 1111.1,753.9 1112.9,752.7 1118.1,764.6 1116.6,765.6 1115.1,766.6 1113.7,767.6 1112.2,768.7 1110.8,769.7 1109.4,770.9 1108.1,772.0 1106.8,773.2"/></clipPath><g clip-path="url(#csA2)" fill="none"><polygon points="1100.1,763.2 1101.5,761.8 1103.0,760.4 1104.6,759.1 1106.2,757.7 1107.8,756.4 1109.4,755.2 1111.1,753.9 1112.9,752.7 1118.1,764.6 1116.6,765.6 1115.1,766.6 1113.7,767.6 1112.2,768.7 1110.8,769.7 1109.4,770.9 1108.1,772.0 1106.8,773.2" fill="#ff0000"/><polyline points="1105.1,773.9 1106.5,772.8 1107.7,771.5 1109.0,770.2 1110.4,768.9 1111.7,767.8 1113.2,766.6 1114.6,765.5 1116.1,764.5 1117.7,763.6 1119.4,762.9" stroke="#ff0000" stroke-width="2.1"/><polyline points="1103.0,770.9 1104.5,769.9 1106.0,768.8 1107.5,767.7 1109.1,766.8 1110.7,766.0 1112.4,765.2 1114.1,764.5 1115.8,763.8 1117.5,763.2 1119.3,762.8" stroke="#ff0000" stroke-width="2.1"/><polyline points="1102.9,770.7 1104.3,769.5 1105.6,768.1 1106.9,766.8 1108.3,765.4 1109.7,764.1 1111.2,762.9 1112.7,761.6 1114.2,760.5 1115.8,759.3 1117.5,758.5" stroke="#ff0000" stroke-width="2.6"/><polyline points="1101.1,768.1 1102.8,767.3 1104.4,766.2 1106.0,765.3 1107.6,764.3 1109.3,763.4 1111.0,762.5 1112.7,761.7 1114.4,760.8 1116.1,760.0 1117.9,759.4" stroke="#ff0000" stroke-width="1.6"/><polyline points="1100.6,767.4 1102.0,766.2 1103.3,764.6 1104.7,763.1 1106.1,761.7 1107.6,760.3 1109.1,758.9 1110.7,757.6 1112.3,756.3 1113.9,755.1 1115.8,754.3" stroke="#ff0000" stroke-width="3.2"/><polyline points="1100.3,767.1 1101.8,765.8 1103.1,764.2 1104.4,762.6 1105.7,761.0 1107.1,759.4 1108.5,757.7 1110.0,756.2 1111.5,754.7 1113.1,753.2 1114.9,752.2" stroke="#ff5050" stroke-width="1.6"/><polyline points="1099.1,765.4 1100.7,764.1 1102.0,762.6 1103.4,761.0 1104.9,759.5 1106.3,758.0 1107.8,756.5 1109.4,755.1 1111.0,753.7 1112.7,752.3 1114.6,751.4" stroke="#ff0000" stroke-width="1.6"/><polyline points="1098.0,763.7 1099.6,762.6 1101.1,761.2 1102.6,759.8 1104.2,758.4 1105.8,757.0 1107.4,755.7 1109.1,754.4 1110.8,753.1 1112.5,751.9 1114.4,751.0" stroke="#ff0000" stroke-width="2.1"/></g><clipPath id="csB"><polygon points="1082.9,798.3 1084.4,795.9 1086.0,793.6 1087.6,791.4 1089.3,789.2 1091.1,787.0 1093.0,784.9 1094.9,782.9 1097.3,781.4 1099.7,779.9 1102.2,778.6 1104.6,777.3 1107.1,776.2 1109.7,775.1 1112.2,774.1 1115.1,773.8 1118.2,774.1 1121.2,774.5 1124.2,775.1 1127.1,775.8 1129.9,776.7 1132.6,777.6 1135.2,778.6 1137.8,780.2 1140.3,781.9 1142.7,783.6 1144.9,785.5 1146.9,787.4 1148.9,789.4 1150.7,791.5 1150.9,803.5 1149.6,803.0 1148.3,802.6 1146.9,802.2 1145.5,801.9 1144.1,801.6 1142.7,801.3 1141.2,801.2 1139.7,801.0 1138.2,801.0 1136.7,800.9 1135.1,800.8 1133.4,800.8 1131.8,800.8 1130.1,800.9 1128.4,801.1 1126.7,801.3 1125.0,801.6 1123.2,802.0 1121.5,802.5 1119.7,803.0 1117.9,803.5 1116.1,804.1 1114.2,804.8 1112.4,805.5 1110.6,806.4 1108.8,807.3 1107.0,808.3 1105.2,809.5 1103.5,810.7"/></clipPath><g clip-path="url(#csB)" fill="none"><polygon points="1082.9,798.3 1084.4,795.9 1086.0,793.6 1087.6,791.4 1089.3,789.2 1091.1,787.0 1093.0,784.9 1094.9,782.9 1097.3,781.4 1099.7,779.9 1102.2,778.6 1104.6,777.3 1107.1,776.2 1109.7,775.1 1112.2,774.1 1115.1,773.8 1118.2,774.1 1121.2,774.5 1124.2,775.1 1127.1,775.8 1129.9,776.7 1132.6,777.6 1135.2,778.6 1137.8,780.2 1140.3,781.9 1142.7,783.6 1144.9,785.5 1146.9,787.4 1148.9,789.4 1150.7,791.5 1150.9,803.5 1149.6,803.0 1148.3,802.6 1146.9,802.2 1145.5,801.9 1144.1,801.6 1142.7,801.3 1141.2,801.2 1139.7,801.0 1138.2,801.0 1136.7,800.9 1135.1,800.8 1133.4,800.8 1131.8,800.8 1130.1,800.9 1128.4,801.1 1126.7,801.3 1125.0,801.6 1123.2,802.0 1121.5,802.5 1119.7,803.0 1117.9,803.5 1116.1,804.1 1114.2,804.8 1112.4,805.5 1110.6,806.4 1108.8,807.3 1107.0,808.3 1105.2,809.5 1103.5,810.7" fill="#ff5050"/><polyline points="1104.6,813.5 1105.7,812.0 1107.5,810.9 1109.2,809.9 1110.8,808.8 1112.3,807.8 1113.8,806.7 1115.2,805.7 1116.7,804.7 1118.1,803.7 1119.7,802.9 1121.2,802.1 1122.8,801.4 1124.5,800.9 1126.3,800.6 1128.1,800.5 1129.9,800.6 1131.8,800.8 1133.6,801.2 1135.4,801.7 1137.2,802.2 1138.8,802.7 1140.4,803.2 1141.9,803.6 1143.3,803.9 1144.6,804.1 1145.9,804.2 1147.2,804.3 1148.4,804.2 1149.6,804.2 1150.9,804.1 1152.1,803.6" stroke="#006400" stroke-width="1.1"/><polyline points="1101.7,811.9 1102.2,809.9 1103.6,808.4 1105.1,807.0 1106.8,805.8 1108.6,804.8 1110.6,803.9 1112.6,803.3 1114.8,802.8 1117.0,802.5 1119.2,802.3 1121.3,802.2 1123.3,802.1 1125.2,802.0 1127.1,801.9 1128.8,801.8 1130.5,801.6 1132.0,801.3 1133.6,801.0 1135.0,800.7 1136.5,800.3 1137.9,799.9 1139.3,799.6 1140.7,799.3 1142.2,799.2 1143.7,799.3 1145.2,799.6 1146.7,800.1 1148.1,800.8 1149.5,801.7 1150.9,802.7 1152.1,803.3" stroke="#006400" stroke-width="3.2"/><polyline points="1101.4,811.7 1102.0,809.8 1103.3,808.2 1104.5,806.6 1105.8,805.1 1107.3,803.7 1108.9,802.5 1110.7,801.4 1112.6,800.6 1114.7,800.1 1117.0,799.8 1119.2,799.6 1121.4,799.5 1123.5,799.5 1125.5,799.5 1127.5,799.5 1129.3,799.4 1131.0,799.3 1132.7,799.1 1134.2,798.8 1135.7,798.4 1137.2,798.1 1138.7,797.7 1140.2,797.4 1141.8,797.5 1143.4,797.7 1145.0,798.3 1146.5,799.1 1148.1,800.1 1149.5,801.3 1150.9,802.5 1152.1,803.1" stroke="#006400" stroke-width="2.1"/><polyline points="1099.3,810.5 1100.5,808.8 1102.3,807.5 1104.1,806.3 1105.9,805.1 1107.6,804.0 1109.4,802.9 1111.1,801.8 1112.8,800.8 1114.6,799.9 1116.3,799.1 1118.1,798.3 1119.9,797.5 1121.7,796.9 1123.5,796.4 1125.4,796.0 1127.3,795.8 1129.3,795.9 1131.3,796.1 1133.2,796.4 1135.1,796.8 1136.9,797.2 1138.7,797.6 1140.4,798.0 1142.0,798.5 1143.6,799.0 1145.2,799.5 1146.7,800.0 1148.1,800.5 1149.5,801.0 1150.8,801.6 1152.2,801.4" stroke="#006400" stroke-width="1.6"/><polyline points="1097.6,809.6 1099.4,808.2 1101.8,807.2 1104.0,806.2 1105.8,805.1 1107.4,803.8 1108.7,802.3 1109.9,800.7 1111.1,799.1 1112.6,797.7 1114.3,796.7 1116.2,795.9 1118.4,795.6 1120.7,795.6 1123.1,795.8 1125.5,796.2 1127.7,796.5 1129.7,796.8 1131.6,796.8 1133.2,796.5 1134.8,796.0 1136.3,795.4 1137.9,794.9 1139.5,794.7 1141.2,795.0 1143.0,795.8 1144.8,797.0 1146.5,798.5 1148.1,800.1 1149.5,801.6 1150.9,802.8 1152.1,802.8" stroke="#8080ff" stroke-width="1.6"/><polyline points="1098.2,809.9 1099.1,808.0 1100.5,806.4 1102.0,804.8 1103.5,803.3 1105.0,801.8 1106.5,800.4 1108.1,799.0 1109.7,797.7 1111.5,796.6 1113.3,795.6 1115.2,794.7 1117.1,793.8 1119.0,793.1 1121.0,792.5 1123.0,792.1 1125.1,791.9 1127.3,792.1 1129.5,792.3 1131.7,792.8 1133.8,793.3 1135.8,793.9 1137.8,794.5 1139.6,795.3 1141.5,796.2 1143.3,797.1 1144.9,798.1 1146.5,799.1 1148.0,800.1 1149.5,801.0 1150.8,802.0 1152.2,802.0" stroke="#00ffff" stroke-width="2.6"/><polyline points="1095.2,808.3 1096.7,806.6 1098.6,805.1 1100.4,803.7 1102.1,802.3 1103.7,800.8 1105.2,799.3 1106.8,797.8 1108.3,796.3 1110.1,795.1 1112.0,794.1 1114.0,793.1 1116.0,792.4 1118.2,791.9 1120.4,791.6 1122.6,791.5 1124.9,791.6 1127.3,792.0 1129.5,792.3 1131.6,792.6 1133.6,792.9 1135.5,793.0 1137.3,793.0 1139.1,793.1 1140.8,793.3 1142.6,793.7 1144.4,794.4 1146.1,795.2 1147.7,796.3 1149.3,797.6 1150.8,799.0 1152.2,799.4" stroke="#00ffff" stroke-width="2.6"/><polyline points="1092.4,806.7 1093.5,804.6 1095.1,802.9 1096.9,801.3 1098.8,799.8 1100.8,798.4 1102.8,797.2 1104.9,796.1 1107.1,795.1 1109.4,794.4 1111.7,793.8 1114.0,793.2 1116.2,792.7 1118.4,792.3 1120.6,791.8 1122.6,791.5 1124.8,791.3 1127.0,791.4 1129.1,791.6 1131.2,791.7 1133.2,791.9 1135.1,792.0 1137.0,792.1 1138.8,792.3 1140.7,792.7 1142.5,793.1 1144.2,793.6 1145.9,794.3 1147.6,795.0 1149.2,795.8 1150.8,796.8 1152.2,796.7" stroke="#ffff00" stroke-width="1.1"/><polyline points="1094.4,807.8 1095.3,805.7 1096.5,803.8 1097.6,801.8 1098.8,799.8 1100.1,797.9 1101.7,796.2 1103.5,794.8 1105.6,793.6 1108.0,792.9 1110.5,792.4 1113.0,792.0 1115.4,791.6 1117.7,791.3 1119.9,790.8 1121.8,790.1 1123.8,789.6 1125.8,789.1 1127.8,788.7 1129.8,788.4 1131.9,788.4 1134.0,788.5 1136.1,789.0 1138.2,789.9 1140.4,791.2 1142.4,792.7 1144.3,794.3 1146.1,795.9 1147.8,797.2 1149.3,798.4 1150.8,799.3 1152.2,798.8" stroke="#ffff00" stroke-width="1.6"/><polyline points="1092.5,806.8 1093.7,804.7 1095.2,802.9 1096.7,801.2 1098.3,799.4 1099.8,797.7 1101.4,796.0 1103.1,794.4 1104.8,792.8 1106.8,791.6 1108.9,790.5 1111.0,789.5 1113.1,788.6 1115.4,787.9 1117.6,787.3 1119.9,786.9 1122.3,786.8 1124.8,787.2 1127.3,787.6 1129.7,788.2 1132.0,788.7 1134.2,789.3 1136.3,789.8 1138.3,790.3 1140.3,791.1 1142.2,791.9 1144.1,792.7 1145.9,793.5 1147.6,794.5 1149.2,795.5 1150.8,796.6 1152.3,796.5" stroke="#8c5c00" stroke-width="2.6"/><polyline points="1089.7,805.2 1091.5,803.5 1093.7,801.9 1095.7,800.4 1097.7,798.9 1099.4,797.3 1101.0,795.6 1102.5,793.8 1103.9,791.9 1105.6,790.3 1107.3,788.7 1109.1,787.2 1111.1,785.9 1113.3,784.9 1115.6,784.2 1118.1,783.9 1120.8,784.1 1123.7,784.9 1126.4,785.8 1129.1,786.7 1131.6,787.6 1133.9,788.3 1136.0,788.8 1138.0,789.2 1140.0,789.7 1141.9,790.1 1143.7,790.6 1145.6,791.1 1147.3,792.0 1149.1,793.1 1150.7,794.5 1152.3,794.8" stroke="#8c5c00" stroke-width="2.6"/><polyline points="1088.9,804.8 1090.4,802.8 1092.1,800.9 1093.8,799.1 1095.5,797.3 1097.1,795.5 1098.7,793.6 1100.4,791.8 1102.1,790.1 1104.1,788.7 1106.2,787.3 1108.3,786.2 1110.5,785.1 1112.8,784.3 1115.2,783.6 1117.6,783.1 1120.2,783.0 1122.9,783.5 1125.6,784.0 1128.2,784.5 1130.6,785.1 1133.0,785.7 1135.2,786.2 1137.4,786.7 1139.5,787.6 1141.6,788.4 1143.6,789.4 1145.5,790.6 1147.3,791.8 1149.1,793.3 1150.7,794.9 1152.3,795.1" stroke="#ff5050" stroke-width="1.6"/><polyline points="1088.2,804.4 1089.4,802.2 1090.7,800.0 1092.0,797.8 1093.4,795.7 1094.9,793.7 1096.6,791.8 1098.5,790.1 1100.6,788.6 1103.0,787.5 1105.5,786.6 1108.0,785.7 1110.4,784.9 1112.7,784.1 1115.0,783.2 1117.1,782.3 1119.5,781.7 1122.0,781.6 1124.5,781.6 1127.0,781.8 1129.5,782.2 1132.0,782.9 1134.5,783.8 1136.9,784.9 1139.3,786.5 1141.5,788.0 1143.6,789.6 1145.6,791.1 1147.4,792.5 1149.1,793.8 1150.7,795.0 1152.3,794.6" stroke="#8c5c00" stroke-width="2.1"/><polyline points="1087.4,804.0 1088.8,801.8 1090.3,799.8 1091.9,797.8 1093.4,795.7 1095.0,793.8 1096.6,791.8 1098.2,789.8 1099.9,787.9 1101.9,786.3 1104.0,784.8 1106.1,783.4 1108.3,782.2 1110.5,781.0 1112.9,780.0 1115.3,779.2 1117.9,778.9 1120.8,779.2 1123.6,779.7 1126.4,780.4 1129.2,781.3 1131.8,782.2 1134.3,783.3 1136.7,784.4 1139.1,785.9 1141.4,787.5 1143.5,789.1 1145.5,790.7 1147.4,792.2 1149.1,793.8 1150.7,795.3 1152.3,795.1" stroke="#ffff00" stroke-width="1.6"/><polyline points="1084.7,802.5 1086.0,800.2 1087.6,798.0 1089.3,796.0 1091.2,794.0 1093.1,792.2 1095.0,790.4 1097.0,788.7 1099.0,787.0 1101.3,785.7 1103.6,784.4 1105.8,783.1 1108.1,781.9 1110.3,780.7 1112.6,779.6 1114.9,778.6 1117.5,778.2 1120.3,778.3 1123.1,778.6 1125.9,779.1 1128.6,779.8 1131.2,780.6 1133.8,781.6 1136.3,782.7 1138.7,784.2 1141.0,785.7 1143.2,787.3 1145.3,789.0 1147.2,790.6 1149.0,792.3 1150.7,793.9 1152.3,793.7" stroke="#8c5c00" stroke-width="2.1"/><polyline points="1082.6,801.3 1084.0,798.9 1085.5,796.7 1087.2,794.5 1089.0,792.4 1090.9,790.4 1092.8,788.5 1094.8,786.6 1096.9,784.9 1099.4,783.6 1101.9,782.4 1104.3,781.3 1106.8,780.2 1109.3,779.3 1111.8,778.4 1114.3,777.6 1117.0,777.3 1119.9,777.6 1122.8,777.9 1125.6,778.4 1128.2,778.9 1130.8,779.5 1133.4,780.2 1135.8,781.0 1138.3,782.2 1140.6,783.5 1142.9,784.9 1145.0,786.5 1147.0,788.1 1148.9,789.8 1150.7,791.7 1152.3,791.6" stroke="#ffff00" stroke-width="3.2"/><polyline points="1083.0,801.5 1084.2,799.1 1085.5,796.6 1086.7,794.1 1088.0,791.6 1089.4,789.2 1090.9,786.9 1092.7,784.7 1094.7,782.7 1097.2,781.3 1099.8,780.1 1102.6,779.1 1105.3,778.2 1108.0,777.4 1110.6,776.5 1113.2,775.7 1115.9,775.3 1118.8,775.4 1121.6,775.4 1124.4,775.6 1127.1,775.9 1129.8,776.4 1132.4,777.1 1135.1,778.2 1137.7,779.9 1140.3,781.8 1142.7,784.0 1145.0,786.2 1147.0,788.5 1148.9,790.7 1150.7,792.9 1152.3,792.8" stroke="#8c5c00" stroke-width="1.6"/><polyline points="1080.6,800.2 1081.9,797.7 1083.2,795.2 1084.7,792.7 1086.3,790.4 1088.0,788.1 1089.9,785.9 1091.8,783.9 1093.9,781.9 1096.4,780.4 1099.0,779.1 1101.6,777.8 1104.1,776.7 1106.7,775.6 1109.3,774.5 1111.9,773.5 1114.7,773.2 1117.8,773.4 1120.8,773.7 1123.8,774.2 1126.6,774.7 1129.4,775.4 1132.2,776.3 1134.8,777.2 1137.5,778.8 1140.0,780.5 1142.5,782.4 1144.7,784.4 1146.9,786.5 1148.8,788.8 1150.7,791.1 1152.3,791.3" stroke="#a00000" stroke-width="2.6"/></g><clipPath id="csDy"><polygon points="1144.8,792.0 1146.5,791.9 1148.2,792.0 1149.8,792.1 1151.5,792.2 1153.1,792.4 1154.8,792.7 1156.4,793.0 1158.0,793.3 1159.6,793.8 1161.1,794.3 1162.6,794.8 1164.1,795.4 1165.6,796.2 1167.0,797.0 1168.3,797.8 1169.7,798.7 1170.9,799.6 1172.2,800.6 1173.4,801.6 1174.5,802.7 1175.6,803.7 1176.6,804.9 1177.6,806.1 1178.4,807.4 1179.3,808.7 1180.0,810.0 1180.7,811.3 1181.4,812.6 1181.9,814.0 1182.5,815.3 1182.9,816.7 1183.4,818.0 1183.7,819.4 1175.2,824.7 1174.8,823.8 1174.3,822.9 1173.8,822.1 1173.3,821.2 1172.7,820.4 1172.1,819.6 1171.5,818.8 1170.8,818.1 1170.1,817.3 1169.4,816.6 1168.6,815.9 1167.9,815.2 1167.1,814.6 1166.2,814.0 1165.4,813.4 1164.5,812.8 1163.6,812.3 1162.7,811.8 1161.8,811.3 1160.8,810.8 1159.8,810.4 1158.9,810.0 1157.9,809.6 1156.8,809.3 1155.8,808.9 1154.7,808.7 1153.7,808.4 1152.6,808.2 1151.5,808.1 1150.4,807.9 1149.3,807.9 1148.2,807.8 1147.0,807.8"/></clipPath><g clip-path="url(#csDy)" fill="none"><polygon points="1144.8,792.0 1146.5,791.9 1148.2,792.0 1149.8,792.1 1151.5,792.2 1153.1,792.4 1154.8,792.7 1156.4,793.0 1158.0,793.3 1159.6,793.8 1161.1,794.3 1162.6,794.8 1164.1,795.4 1165.6,796.2 1167.0,797.0 1168.3,797.8 1169.7,798.7 1170.9,799.6 1172.2,800.6 1173.4,801.6 1174.5,802.7 1175.6,803.7 1176.6,804.9 1177.6,806.1 1178.4,807.4 1179.3,808.7 1180.0,810.0 1180.7,811.3 1181.4,812.6 1181.9,814.0 1182.5,815.3 1182.9,816.7 1183.4,818.0 1183.7,819.4 1175.2,824.7 1174.8,823.8 1174.3,822.9 1173.8,822.1 1173.3,821.2 1172.7,820.4 1172.1,819.6 1171.5,818.8 1170.8,818.1 1170.1,817.3 1169.4,816.6 1168.6,815.9 1167.9,815.2 1167.1,814.6 1166.2,814.0 1165.4,813.4 1164.5,812.8 1163.6,812.3 1162.7,811.8 1161.8,811.3 1160.8,810.8 1159.8,810.4 1158.9,810.0 1157.9,809.6 1156.8,809.3 1155.8,808.9 1154.7,808.7 1153.7,808.4 1152.6,808.2 1151.5,808.1 1150.4,807.9 1149.3,807.9 1148.2,807.8 1147.0,807.8" fill="#ffff00"/><polyline points="1146.0,808.2 1147.1,808.1 1148.2,808.1 1149.3,808.1 1150.4,808.1 1151.5,808.1 1152.6,808.2 1153.7,808.2 1154.8,808.3 1155.9,808.4 1156.9,808.6 1158.0,808.8 1159.1,809.1 1160.1,809.4 1161.2,809.8 1162.1,810.2 1163.1,810.7 1164.1,811.3 1165.0,811.9 1165.8,812.6 1166.6,813.3 1167.4,814.1 1168.1,814.8 1168.8,815.7 1169.5,816.5 1170.1,817.3 1170.7,818.2 1171.3,819.0 1171.9,819.8 1172.4,820.7 1173.0,821.5 1173.5,822.3 1174.1,823.1 1174.6,823.9 1175.2,824.7 1175.8,825.5" stroke="#ffff00" stroke-width="2.6"/><polyline points="1145.7,806.8 1146.9,806.4 1148.0,806.0 1149.1,805.5 1150.3,805.0 1151.5,804.7 1152.7,804.6 1153.9,804.9 1155.1,805.4 1156.2,806.2 1157.2,807.1 1158.2,808.0 1159.2,808.7 1160.2,809.2 1161.2,809.5 1162.4,809.6 1163.6,809.6 1164.8,809.7 1165.9,809.9 1167.0,810.4 1167.9,811.1 1168.6,812.1 1169.2,813.3 1169.7,814.5 1170.1,815.7 1170.6,816.7 1171.3,817.5 1172.1,818.1 1173.1,818.7 1174.1,819.1 1175.1,819.7 1176.0,820.4 1176.6,821.2 1177.0,822.3 1177.1,823.5 1177.2,824.7" stroke="#ffff00" stroke-width="1.6"/><polyline points="1145.3,804.3 1146.5,803.8 1147.7,803.5 1149.0,803.3 1150.2,803.1 1151.5,803.0 1152.8,803.0 1154.0,803.1 1155.3,803.3 1156.5,803.6 1157.7,804.1 1158.9,804.6 1160.0,805.2 1161.1,805.9 1162.1,806.7 1163.1,807.6 1164.1,808.4 1165.0,809.3 1165.8,810.1 1166.7,810.9 1167.5,811.7 1168.4,812.5 1169.2,813.3 1170.0,814.0 1170.9,814.7 1171.7,815.4 1172.6,816.1 1173.5,816.8 1174.3,817.5 1175.1,818.2 1175.9,819.0 1176.7,819.8 1177.4,820.7 1178.0,821.6 1178.5,822.6 1179.1,823.6" stroke="#8c5c00" stroke-width="2.1"/><polyline points="1144.9,802.3 1146.3,802.5 1147.6,802.7 1148.9,803.0 1150.2,803.1 1151.5,803.1 1152.8,803.1 1154.1,803.0 1155.4,802.8 1156.7,802.6 1158.0,802.5 1159.4,802.5 1160.7,802.6 1162.0,802.9 1163.2,803.4 1164.4,804.1 1165.5,804.9 1166.5,805.9 1167.4,806.9 1168.2,808.1 1169.0,809.3 1169.7,810.4 1170.4,811.5 1171.0,812.6 1171.7,813.6 1172.5,814.5 1173.3,815.3 1174.1,816.1 1175.0,816.8 1175.9,817.5 1176.9,818.2 1177.8,819.0 1178.6,819.8 1179.3,820.7 1179.9,821.7 1180.6,822.7" stroke="#ffff00" stroke-width="2.6"/><polyline points="1144.5,799.8 1146.0,800.5 1147.5,801.1 1148.8,801.4 1150.2,801.5 1151.5,801.1 1152.9,800.6 1154.3,800.0 1155.7,799.4 1157.2,799.1 1158.6,799.1 1160.0,799.6 1161.2,800.5 1162.3,801.8 1163.3,803.2 1164.2,804.7 1165.1,805.9 1166.0,806.9 1167.1,807.6 1168.3,808.0 1169.6,808.1 1171.0,808.2 1172.5,808.4 1173.8,808.8 1174.9,809.5 1175.8,810.6 1176.3,812.0 1176.5,813.6 1176.6,815.3 1176.6,816.9 1176.6,818.4 1176.8,819.7 1177.3,820.8 1178.0,821.6 1179.0,822.3 1180.3,822.8" stroke="#ffff00" stroke-width="1.6"/><polyline points="1144.3,798.4 1145.7,798.0 1147.1,797.8 1148.6,797.7 1150.0,797.5 1151.5,797.4 1153.0,797.4 1154.4,797.4 1155.9,797.5 1157.4,797.7 1158.8,797.9 1160.3,798.2 1161.7,798.7 1163.1,799.2 1164.4,799.9 1165.7,800.6 1166.9,801.4 1168.0,802.3 1169.2,803.3 1170.2,804.3 1171.2,805.4 1172.1,806.5 1173.0,807.6 1173.8,808.8 1174.5,810.0 1175.2,811.2 1175.9,812.4 1176.5,813.7 1177.0,814.8 1177.6,816.0 1178.1,817.2 1178.6,818.3 1179.1,819.4 1179.6,820.5 1180.1,821.6 1180.9,822.5" stroke="#8c5c00" stroke-width="3.2"/><polyline points="1143.8,796.0 1145.4,795.8 1146.9,795.8 1148.4,795.8 1150.0,795.8 1151.5,795.8 1153.0,795.8 1154.5,795.9 1156.1,796.0 1157.6,796.2 1159.1,796.4 1160.6,796.7 1162.1,797.0 1163.5,797.5 1164.9,798.2 1166.3,798.9 1167.6,799.7 1168.8,800.6 1170.0,801.6 1171.1,802.6 1172.1,803.7 1173.1,804.9 1174.1,806.0 1174.9,807.2 1175.7,808.5 1176.4,809.8 1177.1,811.0 1177.8,812.3 1178.5,813.5 1179.1,814.6 1179.7,815.8 1180.3,817.0 1180.9,818.1 1181.5,819.3 1182.0,820.4 1182.8,821.4" stroke="#ffff00" stroke-width="1.6"/><polyline points="1143.7,795.0 1145.2,794.9 1146.8,794.7 1148.3,794.2 1149.9,793.6 1151.5,793.0 1153.1,792.6 1154.8,792.4 1156.4,792.6 1158.0,793.2 1159.5,794.1 1160.9,795.3 1162.2,796.5 1163.5,797.7 1164.7,798.8 1166.0,799.7 1167.4,800.3 1168.8,800.6 1170.3,800.9 1171.9,801.1 1173.4,801.6 1174.8,802.3 1175.9,803.3 1176.8,804.7 1177.4,806.3 1177.8,808.1 1178.1,809.9 1178.5,811.6 1178.9,813.1 1179.4,814.3 1180.2,815.4 1181.2,816.3 1182.2,817.2 1183.2,818.1 1184.1,819.1 1185.1,820.1" stroke="#8c5c00" stroke-width="2.1"/><polyline points="1143.3,793.3 1144.9,792.3 1146.4,791.4 1148.1,790.6 1149.8,790.1 1151.5,790.1 1153.2,790.6 1154.9,791.4 1156.4,792.6 1157.9,793.8 1159.4,795.0 1160.8,795.8 1162.3,796.4 1163.8,796.6 1165.4,796.7 1167.1,796.7 1168.8,796.8 1170.4,797.1 1171.8,797.8 1173.1,798.9 1174.1,800.4 1174.9,802.1 1175.5,803.9 1176.1,805.7 1176.6,807.4 1177.3,808.7 1178.3,809.8 1179.4,810.6 1180.7,811.3 1182.0,812.1 1183.1,813.0 1184.0,814.1 1184.5,815.5 1184.7,817.1 1184.5,818.9 1184.4,820.5" stroke="#ffff00" stroke-width="1.1"/><polyline points="1143.1,792.0 1144.8,791.7 1146.5,791.5 1148.1,791.1 1149.8,790.6 1151.5,790.2 1153.2,790.0 1155.0,790.0 1156.7,790.4 1158.3,791.0 1159.9,791.8 1161.4,792.8 1162.9,793.9 1164.3,795.0 1165.6,796.0 1167.0,796.8 1168.5,797.5 1170.0,798.0 1171.5,798.5 1173.0,799.0 1174.5,799.7 1175.8,800.6 1177.0,801.7 1178.0,803.1 1178.7,804.7 1179.3,806.4 1179.7,808.2 1180.2,809.8 1180.6,811.4 1181.2,812.7 1181.9,814.0 1182.8,815.1 1183.6,816.2 1184.5,817.2 1185.2,818.4 1186.2,819.5" stroke="#ffff00" stroke-width="1.6"/></g><clipPath id="csDb"><polygon points="1151.5,807.5 1152.6,807.6 1153.7,807.7 1154.8,807.8 1155.9,808.0 1157.0,808.2 1158.1,808.5 1159.2,808.8 1160.2,809.1 1161.2,809.5 1162.3,809.9 1163.3,810.3 1164.3,810.8 1165.2,811.3 1166.2,811.9 1167.1,812.4 1168.0,813.0 1168.9,813.7 1169.8,814.3 1170.6,815.0 1171.4,815.8 1172.2,816.5 1173.0,817.3 1173.7,818.1 1174.4,818.9 1175.0,819.8 1175.7,820.6 1176.3,821.5 1176.8,822.4 1177.4,823.3 1177.9,824.3 1178.3,825.2 1178.8,826.2 1179.2,827.2 1179.5,828.2 1179.8,829.2 1180.1,830.2 1180.4,831.2 1180.6,832.2 1163.1,836.6 1163.0,836.2 1162.8,835.8 1162.6,835.4 1162.4,835.1 1162.2,834.7 1162.0,834.4 1161.8,834.0 1161.5,833.7 1161.3,833.4 1161.0,833.1 1160.7,832.8 1160.5,832.5 1160.2,832.2 1159.9,832.0 1159.6,831.7 1159.3,831.5 1158.9,831.2 1158.6,831.0 1158.3,830.8 1157.9,830.6 1157.6,830.5 1157.2,830.3 1156.9,830.2 1156.5,830.0 1156.2,829.9 1155.8,829.8 1155.5,829.7 1155.1,829.6 1154.7,829.5 1154.4,829.5 1154.0,829.4 1153.6,829.4 1153.3,829.4 1152.9,829.4 1152.6,829.4 1152.2,829.4 1151.9,829.5 1151.5,829.5"/></clipPath><g clip-path="url(#csDb)" fill="none"><polygon points="1151.5,807.5 1152.6,807.6 1153.7,807.7 1154.8,807.8 1155.9,808.0 1157.0,808.2 1158.1,808.5 1159.2,808.8 1160.2,809.1 1161.2,809.5 1162.3,809.9 1163.3,810.3 1164.3,810.8 1165.2,811.3 1166.2,811.9 1167.1,812.4 1168.0,813.0 1168.9,813.7 1169.8,814.3 1170.6,815.0 1171.4,815.8 1172.2,816.5 1173.0,817.3 1173.7,818.1 1174.4,818.9 1175.0,819.8 1175.7,820.6 1176.3,821.5 1176.8,822.4 1177.4,823.3 1177.9,824.3 1178.3,825.2 1178.8,826.2 1179.2,827.2 1179.5,828.2 1179.8,829.2 1180.1,830.2 1180.4,831.2 1180.6,832.2 1163.1,836.6 1163.0,836.2 1162.8,835.8 1162.6,835.4 1162.4,835.1 1162.2,834.7 1162.0,834.4 1161.8,834.0 1161.5,833.7 1161.3,833.4 1161.0,833.1 1160.7,832.8 1160.5,832.5 1160.2,832.2 1159.9,832.0 1159.6,831.7 1159.3,831.5 1158.9,831.2 1158.6,831.0 1158.3,830.8 1157.9,830.6 1157.6,830.5 1157.2,830.3 1156.9,830.2 1156.5,830.0 1156.2,829.9 1155.8,829.8 1155.5,829.7 1155.1,829.6 1154.7,829.5 1154.4,829.5 1154.0,829.4 1153.6,829.4 1153.3,829.4 1152.9,829.4 1152.6,829.4 1152.2,829.4 1151.9,829.5 1151.5,829.5" fill="#8c5c00"/><polyline points="1151.2,830.0 1151.5,829.8 1151.8,829.6 1152.2,829.4 1152.6,829.2 1153.0,829.0 1153.4,828.8 1153.8,828.7 1154.2,828.6 1154.6,828.5 1155.1,828.5 1155.5,828.6 1155.9,828.7 1156.3,828.8 1156.6,829.0 1157.0,829.2 1157.3,829.4 1157.6,829.7 1157.9,830.0 1158.2,830.3 1158.4,830.7 1158.6,831.0 1158.8,831.4 1159.0,831.8 1159.1,832.1 1159.3,832.5 1159.5,832.8 1159.6,833.1 1159.8,833.5 1160.0,833.8 1160.2,834.1 1160.4,834.4 1160.6,834.6 1160.9,834.9 1161.2,835.2 1161.5,835.5 1161.8,835.8 1162.1,836.1 1162.4,836.4 1162.8,836.7 1163.0,837.0" stroke="#ffff00" stroke-width="2.1"/><polyline points="1151.1,827.8 1151.5,828.0 1151.9,828.1 1152.3,828.2 1152.7,828.3 1153.1,828.4 1153.5,828.4 1153.8,828.4 1154.3,828.5 1154.7,828.5 1155.1,828.4 1155.5,828.4 1156.0,828.4 1156.5,828.3 1157.0,828.3 1157.5,828.3 1158.0,828.3 1158.5,828.3 1159.0,828.3 1159.6,828.4 1160.1,828.5 1160.6,828.7 1161.1,828.8 1161.6,829.1 1162.0,829.3 1162.4,829.6 1162.8,830.0 1163.2,830.4 1163.5,830.8 1163.7,831.2 1164.0,831.7 1164.1,832.2 1164.3,832.7 1164.4,833.2 1164.4,833.7 1164.5,834.3 1164.5,834.8 1164.5,835.3 1164.5,835.8 1164.4,836.3 1164.3,836.8" stroke="#8c5c00" stroke-width="3.2"/><polyline points="1151.0,825.4 1151.5,825.6 1152.0,825.7 1152.5,825.6 1153.0,825.5 1153.5,825.2 1154.1,824.9 1154.7,824.6 1155.3,824.3 1155.9,824.2 1156.5,824.1 1157.1,824.2 1157.6,824.4 1158.1,824.8 1158.5,825.2 1158.8,825.8 1159.1,826.3 1159.4,826.9 1159.7,827.4 1160.0,827.8 1160.3,828.2 1160.8,828.4 1161.3,828.6 1161.9,828.7 1162.5,828.8 1163.2,829.0 1163.9,829.1 1164.5,829.3 1165.0,829.7 1165.5,830.1 1165.8,830.6 1165.9,831.2 1166.0,831.8 1165.9,832.5 1165.9,833.1 1165.8,833.7 1165.7,834.3 1165.7,834.9 1165.8,835.4 1166.0,835.9 1166.3,836.4" stroke="#8c5c00" stroke-width="2.1"/><polyline points="1150.9,822.8 1151.5,822.3 1152.1,821.9 1152.8,821.6 1153.4,821.5 1154.0,821.5 1154.6,821.8 1155.2,822.2 1155.7,822.7 1156.1,823.4 1156.5,824.0 1156.9,824.5 1157.4,825.0 1157.8,825.4 1158.3,825.6 1158.9,825.6 1159.5,825.6 1160.2,825.5 1161.0,825.4 1161.8,825.3 1162.6,825.3 1163.3,825.5 1163.9,825.7 1164.4,826.2 1164.7,826.7 1165.0,827.4 1165.1,828.1 1165.1,828.9 1165.1,829.6 1165.1,830.3 1165.1,831.0 1165.2,831.6 1165.5,832.1 1165.9,832.5 1166.4,832.9 1167.0,833.2 1167.7,833.6 1168.4,834.0 1169.0,834.5 1169.6,835.0 1169.9,835.6" stroke="#8c5c00" stroke-width="1.6"/><polyline points="1150.8,819.9 1151.5,820.5 1152.1,821.1 1152.7,821.7 1153.3,822.1 1153.9,822.4 1154.5,822.5 1155.1,822.3 1155.8,822.1 1156.6,821.7 1157.4,821.3 1158.3,820.9 1159.1,820.7 1159.9,820.6 1160.6,820.8 1161.2,821.3 1161.7,821.9 1162.0,822.7 1162.3,823.5 1162.5,824.4 1162.6,825.2 1162.9,826.0 1163.2,826.5 1163.6,826.9 1164.2,827.2 1164.9,827.4 1165.8,827.5 1166.7,827.6 1167.6,827.8 1168.4,828.1 1169.1,828.5 1169.6,829.0 1169.9,829.7 1170.0,830.5 1169.8,831.3 1169.6,832.2 1169.2,833.0 1168.9,833.8 1168.7,834.6 1168.6,835.2 1168.7,835.8" stroke="#8c5c00" stroke-width="3.2"/><polyline points="1150.7,817.7 1151.5,817.9 1152.2,818.1 1153.0,818.2 1153.7,818.4 1154.5,818.5 1155.2,818.5 1156.0,818.5 1156.7,818.5 1157.5,818.5 1158.3,818.6 1159.1,818.6 1159.9,818.8 1160.6,819.0 1161.4,819.3 1162.1,819.6 1162.7,820.1 1163.3,820.6 1163.8,821.2 1164.4,821.8 1164.8,822.4 1165.3,823.1 1165.8,823.7 1166.2,824.2 1166.7,824.8 1167.3,825.3 1167.8,825.8 1168.4,826.3 1169.0,826.8 1169.6,827.3 1170.2,827.8 1170.7,828.4 1171.2,829.0 1171.6,829.7 1172.0,830.4 1172.2,831.1 1172.4,831.9 1172.5,832.7 1172.5,833.5 1172.5,834.3 1172.5,835.0" stroke="#ffff00" stroke-width="3.2"/><polyline points="1150.7,815.7 1151.5,815.5 1152.3,815.3 1153.2,815.2 1154.1,815.1 1154.9,815.0 1155.8,815.0 1156.7,815.1 1157.5,815.2 1158.4,815.4 1159.2,815.7 1160.0,816.0 1160.8,816.4 1161.6,816.9 1162.3,817.4 1163.0,817.9 1163.6,818.5 1164.3,819.1 1164.8,819.7 1165.4,820.4 1165.9,821.0 1166.4,821.7 1166.9,822.4 1167.4,823.1 1167.8,823.8 1168.2,824.4 1168.7,825.1 1169.1,825.7 1169.6,826.4 1170.0,827.0 1170.5,827.7 1170.9,828.3 1171.4,828.9 1171.9,829.6 1172.3,830.2 1172.8,830.9 1173.3,831.6 1173.7,832.3 1174.1,833.0 1174.5,833.8 1174.9,834.5" stroke="#8c5c00" stroke-width="1.1"/><polyline points="1150.6,813.6 1151.5,813.8 1152.4,814.2 1153.2,814.7 1154.1,815.2 1154.9,815.5 1155.7,815.7 1156.6,815.7 1157.5,815.5 1158.4,815.4 1159.4,815.3 1160.3,815.3 1161.2,815.5 1162.0,816.0 1162.7,816.6 1163.2,817.4 1163.8,818.2 1164.3,819.0 1164.9,819.6 1165.6,820.1 1166.4,820.5 1167.2,820.8 1168.1,821.0 1169.0,821.3 1169.8,821.8 1170.5,822.4 1171.0,823.1 1171.3,824.0 1171.5,825.0 1171.7,825.9 1171.8,826.8 1172.0,827.6 1172.4,828.4 1172.9,829.0 1173.6,829.7 1174.3,830.3 1175.0,831.0 1175.5,831.7 1175.8,832.5 1175.9,833.4 1175.9,834.3" stroke="#8c5c00" stroke-width="1.6"/><polyline points="1150.5,811.7 1151.5,811.8 1152.5,812.1 1153.4,812.6 1154.3,813.1 1155.1,813.6 1156.0,814.0 1156.9,814.2 1157.8,814.2 1158.8,814.2 1159.8,814.0 1160.8,814.0 1161.8,814.1 1162.7,814.4 1163.5,814.9 1164.2,815.6 1164.8,816.5 1165.3,817.3 1165.9,818.1 1166.5,818.8 1167.2,819.4 1168.1,819.8 1169.0,820.1 1169.9,820.4 1170.8,820.8 1171.6,821.4 1172.3,822.1 1172.7,822.9 1173.0,823.9 1173.2,824.9 1173.3,825.9 1173.4,826.8 1173.7,827.7 1174.1,828.5 1174.7,829.2 1175.4,829.8 1176.1,830.6 1176.7,831.3 1177.2,832.1 1177.4,833.0 1177.4,834.0" stroke="#8c5c00" stroke-width="2.1"/><polyline points="1150.5,809.5 1151.5,809.3 1152.6,809.3 1153.6,809.5 1154.6,810.0 1155.6,810.7 1156.4,811.4 1157.3,812.2 1158.1,813.0 1158.9,813.6 1159.8,814.1 1160.6,814.4 1161.6,814.5 1162.6,814.6 1163.7,814.5 1164.8,814.5 1165.9,814.5 1167.0,814.6 1168.0,815.0 1168.9,815.5 1169.7,816.2 1170.3,817.1 1170.7,818.2 1171.0,819.3 1171.2,820.4 1171.5,821.5 1171.7,822.5 1172.1,823.4 1172.6,824.2 1173.2,824.8 1174.0,825.4 1174.9,826.0 1175.8,826.6 1176.8,827.2 1177.6,827.9 1178.3,828.7 1178.8,829.6 1179.0,830.6 1179.0,831.6 1178.8,832.7 1178.5,833.8" stroke="#8c5c00" stroke-width="1.6"/><polyline points="1150.4,809.0 1151.5,808.9 1152.6,808.8 1153.6,808.8 1154.7,808.9 1155.8,809.1 1156.8,809.3 1157.8,809.7 1158.8,810.1 1159.8,810.5 1160.7,811.0 1161.7,811.6 1162.5,812.2 1163.4,812.8 1164.3,813.4 1165.1,813.9 1165.9,814.5 1166.7,815.1 1167.6,815.7 1168.4,816.2 1169.2,816.8 1170.1,817.4 1170.9,817.9 1171.7,818.5 1172.6,819.2 1173.4,819.8 1174.1,820.5 1174.8,821.3 1175.5,822.1 1176.1,822.9 1176.6,823.8 1177.1,824.7 1177.5,825.7 1177.8,826.7 1178.1,827.7 1178.3,828.7 1178.4,829.7 1178.5,830.7 1178.6,831.7 1178.7,832.7 1178.8,833.7" stroke="#8c5c00" stroke-width="1.6"/><polyline points="1150.4,807.9 1151.5,807.8 1152.6,807.8 1153.7,807.8 1154.8,807.8 1155.9,807.9 1157.1,808.0 1158.2,808.1 1159.3,808.3 1160.4,808.6 1161.5,808.9 1162.5,809.3 1163.5,809.7 1164.5,810.2 1165.5,810.8 1166.4,811.4 1167.3,812.1 1168.2,812.8 1169.0,813.6 1169.8,814.3 1170.6,815.1 1171.3,815.9 1172.0,816.7 1172.7,817.5 1173.4,818.4 1174.1,819.2 1174.7,820.0 1175.4,820.8 1176.1,821.7 1176.7,822.5 1177.3,823.3 1178.0,824.2 1178.5,825.1 1179.1,826.0 1179.6,827.0 1180.0,828.0 1180.4,829.0 1180.8,830.0 1181.0,831.0 1181.2,832.1 1181.4,833.1" stroke="#8c5c00" stroke-width="2.6"/></g><clipPath id="csE"><polygon points="1201.5,737.0 1202.7,737.6 1203.9,738.3 1205.1,738.9 1206.3,739.6 1207.5,740.2 1208.7,740.9 1209.9,741.6 1211.1,742.3 1179.7,793.5 1179.2,793.1 1178.6,792.8 1178.0,792.5 1177.5,792.2 1176.9,791.8 1176.3,791.5 1175.8,791.3 1175.2,791.0"/></clipPath><g clip-path="url(#csE)" fill="none"><polygon points="1201.5,737.0 1202.7,737.6 1203.9,738.3 1205.1,738.9 1206.3,739.6 1207.5,740.2 1208.7,740.9 1209.9,741.6 1211.1,742.3 1179.7,793.5 1179.2,793.1 1178.6,792.8 1178.0,792.5 1177.5,792.2 1176.9,791.8 1176.3,791.5 1175.8,791.3 1175.2,791.0" fill="#ff0000"/><polyline points="1173.7,792.6 1174.3,792.7 1175.0,792.8 1175.6,792.9 1176.3,793.0 1176.9,793.2 1177.5,793.4 1178.1,793.6 1178.8,793.8 1179.4,794.1 1179.9,794.3" stroke="#ffff00" stroke-width="2.1"/><polyline points="1174.9,790.0 1175.4,790.5 1175.9,791.0 1176.3,791.5 1176.8,792.0 1177.3,792.6 1177.7,793.1 1178.1,793.6 1178.6,794.1 1179.0,794.6 1179.4,795.1" stroke="#ffff00" stroke-width="1.6"/><polyline points="1175.1,789.5 1175.7,789.8 1176.3,790.1 1176.9,790.4 1177.5,790.8 1178.1,791.1 1178.6,791.4 1179.2,791.7 1179.8,792.1 1180.3,792.4 1180.9,792.8" stroke="#ffff00" stroke-width="2.6"/><polyline points="1176.8,786.0 1177.4,786.5 1177.9,787.0 1178.5,787.4 1179.0,787.9 1179.5,788.4 1180.1,788.9 1180.6,789.4 1181.1,789.9 1181.6,790.4 1182.1,790.9" stroke="#8c5c00" stroke-width="3.2"/><polyline points="1176.7,786.1 1177.3,786.6 1177.9,787.0 1178.5,787.4 1179.1,787.7 1179.7,788.0 1180.4,788.3 1181.0,788.6 1181.7,788.8 1182.4,789.0 1183.1,789.2" stroke="#8c5c00" stroke-width="1.1"/><polyline points="1178.3,782.7 1179.1,782.9 1179.8,783.2 1180.5,783.4 1181.2,783.7 1181.9,784.1 1182.6,784.5 1183.2,784.9 1183.8,785.3 1184.4,785.8 1185.0,786.4" stroke="#ff0000" stroke-width="1.6"/><polyline points="1179.0,781.3 1179.7,781.7 1180.4,782.0 1181.1,782.4 1181.8,782.7 1182.4,783.1 1183.1,783.5 1183.7,783.9 1184.4,784.4 1185.0,784.8 1185.6,785.3" stroke="#ff0000" stroke-width="1.6"/><polyline points="1179.8,779.8 1180.5,780.0 1181.3,780.3 1182.0,780.6 1182.7,781.0 1183.4,781.4 1184.1,781.8 1184.8,782.2 1185.4,782.6 1186.0,783.1 1186.7,783.6" stroke="#ff0000" stroke-width="3.2"/><polyline points="1180.7,777.8 1181.4,778.2 1182.1,778.7 1182.7,779.2 1183.4,779.7 1184.1,780.2 1184.7,780.7 1185.4,781.2 1186.0,781.7 1186.6,782.2 1187.2,782.7" stroke="#ff0000" stroke-width="1.1"/><polyline points="1180.3,778.7 1181.0,779.0 1181.8,779.3 1182.5,779.6 1183.2,780.0 1184.0,780.3 1184.7,780.7 1185.4,781.0 1186.2,781.4 1186.9,781.8 1187.6,782.1" stroke="#ff0000" stroke-width="1.6"/><polyline points="1181.6,775.8 1182.4,776.2 1183.1,776.6 1183.8,777.1 1184.5,777.5 1185.2,778.0 1186.0,778.4 1186.7,778.9 1187.4,779.4 1188.1,779.9 1188.7,780.3" stroke="#ff0000" stroke-width="2.1"/><polyline points="1183.2,772.6 1183.9,773.0 1184.7,773.4 1185.5,773.9 1186.3,774.3 1187.0,774.8 1187.8,775.3 1188.5,775.7 1189.2,776.3 1189.9,776.8 1190.7,777.3" stroke="#ff0000" stroke-width="3.2"/><polyline points="1183.4,772.0 1184.2,772.4 1185.1,772.7 1185.9,773.1 1186.7,773.4 1187.5,773.8 1188.4,774.2 1189.2,774.5 1190.0,774.9 1190.8,775.3 1191.7,775.7" stroke="#ff0000" stroke-width="2.1"/><polyline points="1185.5,767.5 1186.4,768.0 1187.2,768.5 1188.0,769.1 1188.8,769.6 1189.5,770.2 1190.3,770.7 1191.1,771.3 1191.8,771.9 1192.5,772.5 1193.3,773.2" stroke="#ff0000" stroke-width="3.2"/><polyline points="1186.0,766.5 1186.9,766.9 1187.8,767.3 1188.7,767.7 1189.5,768.2 1190.4,768.7 1191.2,769.2 1192.0,769.7 1192.8,770.2 1193.6,770.7 1194.4,771.3" stroke="#ff5050" stroke-width="1.6"/><polyline points="1187.0,764.5 1187.9,764.8 1188.8,765.2 1189.8,765.6 1190.7,766.0 1191.6,766.4 1192.5,766.9 1193.4,767.4 1194.2,767.8 1195.1,768.4 1195.9,768.9" stroke="#ff0000" stroke-width="2.1"/><polyline points="1187.0,764.4 1187.9,764.8 1188.8,765.2 1189.7,765.7 1190.6,766.1 1191.5,766.5 1192.4,767.0 1193.3,767.4 1194.2,767.9 1195.1,768.3 1196.0,768.8" stroke="#ff5050" stroke-width="2.6"/><polyline points="1187.9,762.5 1188.8,763.0 1189.7,763.6 1190.6,764.0 1191.5,764.5 1192.4,765.0 1193.3,765.5 1194.2,765.9 1195.1,766.3 1196.1,766.8 1197.0,767.2" stroke="#ff0000" stroke-width="1.6"/><polyline points="1188.4,761.6 1189.3,762.0 1190.2,762.4 1191.2,762.9 1192.1,763.3 1193.1,763.8 1194.0,764.2 1194.9,764.7 1195.9,765.1 1196.8,765.6 1197.7,766.1" stroke="#ff0000" stroke-width="2.1"/><polyline points="1190.6,756.8 1191.6,757.3 1192.6,757.8 1193.6,758.3 1194.5,758.8 1195.5,759.4 1196.4,759.9 1197.3,760.5 1198.3,761.1 1199.2,761.7 1200.0,762.4" stroke="#ff0000" stroke-width="2.6"/><polyline points="1190.7,756.6 1191.8,756.9 1192.8,757.3 1193.9,757.6 1195.0,757.9 1196.0,758.3 1197.1,758.7 1198.1,759.1 1199.2,759.6 1200.2,760.0 1201.2,760.5" stroke="#ff0000" stroke-width="1.6"/><polyline points="1191.9,754.1 1192.9,754.5 1194.0,755.0 1195.0,755.5 1196.0,756.1 1197.0,756.6 1197.9,757.2 1198.9,757.8 1199.8,758.4 1200.8,759.1 1201.7,759.7" stroke="#a00000" stroke-width="2.1"/><polyline points="1192.5,752.8 1193.6,753.2 1194.7,753.6 1195.7,754.1 1196.8,754.5 1197.9,754.9 1199.0,755.4 1200.0,755.9 1201.1,756.3 1202.2,756.8 1203.2,757.4" stroke="#a00000" stroke-width="3.2"/><polyline points="1194.3,749.1 1195.4,749.5 1196.4,750.1 1197.5,750.7 1198.5,751.3 1199.5,752.0 1200.5,752.8 1201.4,753.5 1202.3,754.3 1203.2,755.2 1204.0,756.0" stroke="#a00000" stroke-width="1.1"/><polyline points="1194.3,749.1 1195.4,749.5 1196.5,750.0 1197.6,750.5 1198.6,751.1 1199.7,751.6 1200.8,752.2 1201.9,752.7 1202.9,753.3 1204.0,753.9 1205.0,754.5" stroke="#606060" stroke-width="2.6"/><polyline points="1195.7,746.1 1196.7,746.7 1197.8,747.4 1198.9,748.0 1199.9,748.8 1200.9,749.5 1201.9,750.3 1202.8,751.0 1203.8,751.8 1204.7,752.7 1205.6,753.5" stroke="#606060" stroke-width="1.1"/><polyline points="1195.2,747.1 1196.3,747.7 1197.4,748.3 1198.4,748.8 1199.5,749.4 1200.6,750.0 1201.7,750.6 1202.7,751.2 1203.8,751.9 1204.8,752.5 1205.9,753.1" stroke="#606060" stroke-width="2.6"/><polyline points="1197.4,742.5 1198.6,743.0 1199.8,743.5 1201.0,744.0 1202.1,744.5 1203.3,745.1 1204.4,745.7 1205.6,746.3 1206.7,746.9 1207.8,747.6 1208.9,748.3" stroke="#a00000" stroke-width="2.1"/><polyline points="1197.3,742.7 1198.5,743.1 1199.7,743.6 1200.9,744.1 1202.1,744.5 1203.3,745.0 1204.5,745.6 1205.7,746.1 1206.9,746.7 1208.0,747.3 1209.1,747.9" stroke="#606060" stroke-width="1.1"/><polyline points="1197.3,742.6 1198.4,743.3 1199.6,743.9 1200.7,744.6 1201.8,745.2 1202.9,745.8 1204.0,746.5 1205.1,747.1 1206.2,747.8 1207.3,748.4 1208.4,749.0" stroke="#606060" stroke-width="1.6"/><polyline points="1198.7,739.8 1199.7,740.6 1200.8,741.4 1201.8,742.3 1202.9,743.1 1203.9,744.0 1205.0,744.8 1206.0,745.6 1207.0,746.4 1208.1,747.1 1209.2,747.9" stroke="#606060" stroke-width="1.1"/><polyline points="1198.6,739.9 1199.8,740.4 1201.0,741.0 1202.2,741.5 1203.4,742.1 1204.6,742.7 1205.8,743.3 1207.0,743.9 1208.2,744.5 1209.4,745.1 1210.5,745.7" stroke="#606060" stroke-width="2.1"/><polyline points="1200.1,736.7 1201.4,737.1 1202.8,737.5 1204.1,738.0 1205.4,738.5 1206.6,739.0 1207.9,739.5 1209.2,740.1 1210.4,740.8 1211.6,741.4 1212.8,742.1" stroke="#606060" stroke-width="2.6"/><polyline points="1200.7,735.4 1202.0,736.0 1203.2,736.7 1204.4,737.3 1205.6,738.0 1206.9,738.6 1208.1,739.2 1209.3,739.9 1210.5,740.5 1211.8,741.1 1213.0,741.8" stroke="#606060" stroke-width="2.1"/></g><clipPath id="csF1"><polygon points="1191.5,784.5 1194.1,785.0 1196.7,785.7 1199.3,786.5 1201.9,787.3 1204.5,788.4 1207.1,789.5 1209.6,790.7 1212.2,792.1 1213.6,794.4 1215.0,796.7 1216.2,799.0 1217.4,801.4 1218.5,803.9 1219.5,806.3 1220.4,808.8 1221.2,811.3 1222.0,813.8 1223.0,816.3 1223.9,818.7 1224.8,821.2 1225.5,823.8 1226.2,826.3 1226.8,828.9 1227.3,831.5 1227.7,834.2 1228.0,836.8 1228.2,839.5 1228.4,842.2 1228.6,844.9 1229.1,847.7 1192.3,843.8 1192.1,842.3 1191.8,840.9 1191.5,839.5 1191.7,838.1 1191.8,836.7 1191.9,835.3 1191.9,833.8 1191.9,832.4 1191.8,830.9 1191.7,829.5 1191.5,828.0 1191.3,826.6 1191.0,825.1 1190.6,823.7 1190.2,822.3 1189.8,820.8 1189.3,819.4 1188.7,818.0 1188.1,816.6 1187.4,815.3 1186.7,813.9 1185.9,812.6 1185.1,811.3 1184.2,810.1 1183.3,808.8 1182.3,807.6 1181.3,806.4 1180.2,805.3 1179.1,804.2 1178.0,803.1"/></clipPath><g clip-path="url(#csF1)" fill="none"><polygon points="1191.5,784.5 1194.1,785.0 1196.7,785.7 1199.3,786.5 1201.9,787.3 1204.5,788.4 1207.1,789.5 1209.6,790.7 1212.2,792.1 1213.6,794.4 1215.0,796.7 1216.2,799.0 1217.4,801.4 1218.5,803.9 1219.5,806.3 1220.4,808.8 1221.2,811.3 1222.0,813.8 1223.0,816.3 1223.9,818.7 1224.8,821.2 1225.5,823.8 1226.2,826.3 1226.8,828.9 1227.3,831.5 1227.7,834.2 1228.0,836.8 1228.2,839.5 1228.4,842.2 1228.6,844.9 1229.1,847.7 1192.3,843.8 1192.1,842.3 1191.8,840.9 1191.5,839.5 1191.7,838.1 1191.8,836.7 1191.9,835.3 1191.9,833.8 1191.9,832.4 1191.8,830.9 1191.7,829.5 1191.5,828.0 1191.3,826.6 1191.0,825.1 1190.6,823.7 1190.2,822.3 1189.8,820.8 1189.3,819.4 1188.7,818.0 1188.1,816.6 1187.4,815.3 1186.7,813.9 1185.9,812.6 1185.1,811.3 1184.2,810.1 1183.3,808.8 1182.3,807.6 1181.3,806.4 1180.2,805.3 1179.1,804.2 1178.0,803.1" fill="#00ffff"/><polyline points="1175.4,804.1 1176.8,804.7 1178.3,805.3 1179.8,805.7 1181.4,806.3 1182.9,807.0 1184.0,808.1 1184.8,809.5 1185.3,811.1 1185.5,812.9 1185.6,814.7 1185.7,816.4 1186.0,817.9 1186.6,819.2 1187.5,820.3 1188.7,821.4 1189.9,822.4 1191.0,823.6 1191.8,824.8 1192.2,826.3 1192.1,827.9 1191.6,829.5 1190.9,831.1 1190.2,832.7 1189.6,834.1 1189.3,835.5 1189.4,836.8 1189.9,838.2 1190.5,839.5 1191.7,840.9 1192.6,842.4 1193.1,843.9 1192.9,845.3" stroke="#ffff00" stroke-width="2.1"/><polyline points="1177.0,801.7 1178.0,803.0 1179.0,804.3 1180.1,805.4 1181.3,806.4 1182.6,807.3 1183.9,808.2 1185.3,809.1 1186.5,810.2 1187.5,811.4 1188.3,812.8 1188.8,814.4 1189.1,816.0 1189.3,817.6 1189.6,819.3 1189.9,820.8 1190.3,822.2 1190.9,823.6 1191.6,824.9 1192.4,826.2 1193.1,827.6 1193.6,829.0 1193.8,830.5 1193.7,832.1 1193.4,833.6 1192.9,835.1 1192.4,836.6 1192.0,838.1 1191.7,839.5 1192.1,840.9 1192.6,842.4 1193.3,843.9 1193.6,845.4" stroke="#8c5c00" stroke-width="2.1"/><polyline points="1177.8,800.5 1179.3,801.2 1180.8,802.0 1182.0,803.1 1183.2,804.3 1184.1,805.7 1185.0,807.2 1185.7,808.7 1186.5,810.1 1187.3,811.5 1188.2,812.9 1189.1,814.2 1190.1,815.4 1191.1,816.6 1192.0,818.0 1192.8,819.4 1193.4,820.9 1193.7,822.4 1193.9,824.1 1193.9,825.7 1193.8,827.4 1193.7,829.0 1193.7,830.5 1193.8,832.1 1194.0,833.5 1194.3,835.0 1194.6,836.5 1194.9,838.0 1195.1,839.5 1195.5,841.0 1195.7,842.6 1195.7,844.2 1195.2,845.6" stroke="#ffff00" stroke-width="1.6"/><polyline points="1177.8,800.6 1179.1,801.4 1180.6,802.3 1182.0,803.2 1183.4,804.0 1184.8,805.0 1186.2,806.0 1187.4,807.1 1188.6,808.4 1189.6,809.7 1190.4,811.2 1191.0,812.8 1191.6,814.5 1192.0,816.1 1192.4,817.8 1192.7,819.4 1193.1,821.0 1193.5,822.5 1194.0,824.0 1194.5,825.5 1195.1,827.0 1195.6,828.5 1196.1,830.0 1196.5,831.6 1196.8,833.1 1196.9,834.7 1196.8,836.3 1196.6,837.9 1196.3,839.5 1196.3,841.1 1196.2,842.6 1196.2,844.2 1195.8,845.7" stroke="#ff5050" stroke-width="1.6"/><polyline points="1177.9,800.4 1179.4,801.1 1181.0,801.8 1182.6,802.4 1184.3,803.1 1185.9,803.9 1187.4,804.8 1188.8,806.0 1189.9,807.2 1190.9,808.7 1191.6,810.4 1192.0,812.2 1192.4,814.0 1192.6,815.8 1192.9,817.5 1193.1,819.2 1193.5,820.8 1194.0,822.3 1194.6,823.8 1195.4,825.2 1196.2,826.7 1197.0,828.2 1197.7,829.7 1198.3,831.3 1198.6,832.9 1198.7,834.5 1198.6,836.2 1198.3,837.9 1197.7,839.5 1197.5,841.1 1197.2,842.7 1197.0,844.3 1196.4,845.8" stroke="#ff0000" stroke-width="1.1"/><polyline points="1179.0,798.8 1180.8,799.2 1182.5,799.8 1184.1,800.6 1185.5,801.7 1186.7,803.0 1187.7,804.5 1188.5,806.2 1189.2,807.9 1189.8,809.5 1190.4,811.2 1191.1,812.8 1191.9,814.2 1193.0,815.6 1194.1,816.8 1195.3,818.2 1196.4,819.5 1197.3,821.0 1198.0,822.6 1198.4,824.3 1198.5,826.0 1198.3,827.8 1198.0,829.6 1197.5,831.4 1197.1,833.1 1196.8,834.7 1196.7,836.3 1196.8,837.9 1197.2,839.5 1198.0,841.1 1199.0,842.8 1199.8,844.6 1200.0,846.3" stroke="#ff5050" stroke-width="1.1"/><polyline points="1179.5,798.0 1181.2,798.6 1182.9,799.3 1184.6,800.1 1186.1,801.0 1187.6,802.2 1188.9,803.4 1190.0,804.8 1191.0,806.3 1191.9,807.9 1192.5,809.7 1193.0,811.5 1193.5,813.3 1194.0,815.0 1194.5,816.6 1195.1,818.2 1195.8,819.8 1196.5,821.3 1197.2,822.9 1198.1,824.4 1198.9,825.9 1199.6,827.5 1200.2,829.1 1200.7,830.8 1201.0,832.5 1201.0,834.3 1200.9,836.0 1200.5,837.8 1200.1,839.5 1199.9,841.2 1199.7,842.9 1199.6,844.6 1199.1,846.2" stroke="#ff0000" stroke-width="2.1"/><polyline points="1180.3,796.8 1181.9,797.7 1183.5,798.5 1185.2,799.4 1186.8,800.3 1188.3,801.4 1189.8,802.5 1191.2,803.7 1192.6,805.0 1193.9,806.4 1194.8,808.0 1195.7,809.7 1196.4,811.4 1197.1,813.2 1197.6,815.0 1198.1,816.8 1198.5,818.6 1198.9,820.4 1199.2,822.1 1199.5,823.9 1199.9,825.6 1200.2,827.4 1200.5,829.1 1200.7,830.8 1201.0,832.5 1201.2,834.3 1201.3,836.0 1201.5,837.8 1201.6,839.5 1202.0,841.3 1202.4,843.1 1202.9,844.9 1202.8,846.7" stroke="#ff5050" stroke-width="2.6"/><polyline points="1182.0,794.3 1183.6,795.3 1185.2,796.4 1186.4,797.9 1187.4,799.6 1188.4,801.3 1189.4,802.9 1190.7,804.2 1192.2,805.4 1193.9,806.3 1195.6,807.5 1197.2,808.7 1198.8,810.0 1200.0,811.5 1200.9,813.2 1201.3,815.2 1201.3,817.3 1201.0,819.5 1200.7,821.6 1200.6,823.5 1200.8,825.4 1201.3,827.1 1202.2,828.7 1203.3,830.4 1204.4,832.1 1205.3,833.8 1205.8,835.7 1205.9,837.6 1205.5,839.5 1205.1,841.4 1204.5,843.2 1203.9,845.0 1203.1,846.7" stroke="#ff5050" stroke-width="2.1"/><polyline points="1182.8,793.1 1184.5,794.1 1186.2,795.0 1187.8,796.3 1189.1,797.7 1190.4,799.2 1191.5,800.8 1192.7,802.4 1193.9,803.9 1195.3,805.3 1196.4,806.9 1197.6,808.4 1199.0,809.8 1200.4,811.3 1201.8,812.8 1203.0,814.4 1204.0,816.1 1204.8,818.0 1205.2,819.9 1205.5,822.0 1205.5,824.0 1205.3,826.1 1205.1,828.1 1204.8,830.1 1204.6,832.0 1204.6,833.9 1204.8,835.8 1205.2,837.6 1205.8,839.5 1206.7,841.4 1207.6,843.4 1208.5,845.5 1208.7,847.5" stroke="#006400" stroke-width="3.2"/><polyline points="1182.9,792.9 1184.9,793.6 1187.0,794.0 1189.0,794.8 1190.8,795.8 1192.5,797.1 1193.9,798.6 1195.2,800.1 1196.5,801.7 1197.9,803.2 1199.0,805.0 1200.1,806.7 1201.4,808.3 1202.8,809.9 1204.1,811.5 1205.2,813.3 1206.1,815.2 1206.7,817.2 1206.9,819.3 1207.1,821.4 1207.1,823.5 1207.2,825.6 1207.3,827.6 1207.6,829.6 1208.1,831.5 1208.7,833.5 1209.4,835.4 1210.1,837.5 1210.5,839.5 1210.9,841.6 1211.1,843.7 1211.1,845.8 1210.3,847.8" stroke="#006400" stroke-width="3.2"/><polyline points="1184.2,791.0 1186.0,792.1 1188.0,792.8 1189.9,793.7 1191.8,794.7 1193.7,795.8 1195.5,797.0 1197.2,798.3 1198.9,799.7 1200.5,801.2 1201.5,803.2 1202.4,805.2 1203.2,807.2 1204.0,809.2 1204.7,811.2 1205.4,813.2 1206.0,815.2 1206.6,817.3 1207.1,819.3 1207.9,821.2 1208.6,823.1 1209.3,825.1 1209.9,827.1 1210.5,829.1 1211.1,831.1 1211.6,833.2 1212.0,835.3 1212.3,837.4 1212.5,839.5 1212.8,841.6 1213.2,843.8 1213.6,846.0 1213.3,848.2" stroke="#00ffff" stroke-width="1.6"/><polyline points="1183.9,791.5 1185.5,792.7 1187.6,793.4 1189.8,793.9 1192.1,794.4 1194.5,795.0 1196.8,795.7 1199.0,796.7 1201.1,797.9 1202.9,799.3 1203.8,801.5 1204.5,803.7 1205.1,806.0 1205.6,808.3 1206.2,810.4 1206.8,812.5 1207.6,814.5 1208.6,816.4 1209.7,818.3 1210.9,820.2 1212.1,822.1 1213.0,824.2 1213.7,826.3 1214.1,828.5 1214.1,830.7 1213.9,832.9 1213.6,835.2 1213.2,837.3 1212.9,839.5 1212.9,841.6 1213.3,843.8 1213.9,846.1 1214.2,848.3" stroke="#00ffff" stroke-width="3.2"/><polyline points="1184.5,790.6 1186.3,791.7 1188.6,792.0 1191.0,792.4 1193.5,792.8 1196.0,793.4 1198.6,794.1 1201.0,794.9 1203.3,796.1 1205.4,797.4 1206.6,799.5 1207.5,801.7 1208.2,804.1 1208.7,806.5 1209.1,808.9 1209.4,811.3 1209.7,813.6 1210.0,815.8 1210.5,818.0 1211.4,820.0 1212.4,822.0 1213.4,824.1 1214.6,826.1 1215.7,828.2 1216.7,830.3 1217.5,832.6 1218.1,834.8 1218.5,837.2 1218.5,839.5 1218.4,841.8 1218.3,844.2 1218.1,846.5 1217.2,848.7" stroke="#00ffff" stroke-width="2.6"/><polyline points="1185.6,789.0 1187.5,789.9 1190.0,790.3 1192.5,790.7 1195.0,791.2 1197.5,791.8 1200.0,792.7 1202.3,793.8 1204.4,795.1 1206.3,796.6 1207.3,798.9 1208.2,801.3 1208.9,803.7 1209.5,806.0 1210.1,808.3 1210.8,810.6 1211.6,812.7 1212.5,814.9 1213.4,817.0 1214.7,819.0 1215.9,821.0 1217.1,823.2 1218.0,825.4 1218.8,827.6 1219.3,830.0 1219.5,832.4 1219.5,834.7 1219.3,837.1 1218.9,839.5 1218.6,841.8 1218.5,844.2 1218.6,846.5 1218.2,848.9" stroke="#8080ff" stroke-width="2.1"/><polyline points="1187.1,786.8 1189.0,787.9 1191.4,788.4 1193.9,789.0 1196.3,789.8 1198.6,790.7 1201.0,791.7 1203.3,792.9 1205.6,794.1 1207.8,795.5 1209.0,797.7 1210.2,799.9 1211.3,802.2 1212.2,804.4 1213.1,806.8 1213.8,809.1 1214.4,811.5 1215.0,813.9 1215.4,816.2 1216.1,818.5 1216.7,820.8 1217.2,823.1 1217.7,825.4 1218.1,827.8 1218.5,830.1 1218.8,832.4 1219.1,834.8 1219.3,837.1 1219.5,839.5 1219.7,841.9 1220.1,844.3 1220.6,846.8 1220.5,849.2" stroke="#8080ff" stroke-width="1.6"/><polyline points="1187.9,785.6 1189.5,787.3 1191.5,788.3 1193.5,789.4 1195.6,790.5 1197.8,791.6 1200.1,792.5 1202.6,793.5 1205.3,794.4 1207.9,795.4 1209.7,797.2 1211.3,799.2 1212.6,801.3 1213.7,803.6 1214.5,806.0 1215.0,808.5 1215.4,811.1 1215.6,813.6 1215.9,816.1 1216.6,818.3 1217.4,820.6 1218.4,822.8 1219.5,825.0 1220.6,827.3 1221.6,829.6 1222.4,832.0 1223.0,834.5 1223.2,837.0 1223.1,839.5 1222.9,842.0 1222.6,844.5 1222.5,847.0 1221.8,849.4" stroke="#8080ff" stroke-width="1.6"/><polyline points="1188.6,784.5 1190.5,785.8 1193.0,786.4 1195.3,787.3 1197.6,788.3 1199.8,789.5 1202.0,790.8 1204.1,792.2 1206.2,793.6 1208.2,795.2 1209.4,797.4 1210.5,799.7 1211.7,801.9 1212.8,804.1 1214.0,806.3 1215.2,808.4 1216.3,810.6 1217.4,812.9 1218.5,815.1 1219.7,817.3 1220.8,819.6 1221.8,822.0 1222.6,824.4 1223.2,826.9 1223.5,829.4 1223.8,831.9 1223.8,834.4 1223.7,837.0 1223.5,839.5 1223.3,842.0 1223.3,844.5 1223.4,847.1 1223.0,849.5" stroke="#8080ff" stroke-width="1.6"/><polyline points="1188.5,784.7 1190.2,786.2 1192.6,786.9 1195.0,787.7 1197.3,788.6 1199.7,789.6 1202.1,790.6 1204.5,791.8 1207.0,793.0 1209.4,794.3 1210.9,796.4 1212.3,798.5 1213.6,800.7 1214.9,802.9 1216.1,805.1 1217.2,807.5 1218.2,809.8 1219.0,812.2 1219.8,814.7 1220.7,817.0 1221.5,819.4 1222.2,821.9 1222.7,824.4 1223.2,826.9 1223.6,829.4 1223.9,831.9 1224.1,834.4 1224.2,837.0 1224.3,839.5 1224.4,842.0 1224.7,844.6 1225.2,847.2 1225.0,849.8" stroke="#8080ff" stroke-width="1.1"/><polyline points="1189.1,783.7 1190.9,785.2 1193.3,786.0 1195.8,786.7 1198.2,787.6 1200.7,788.5 1203.2,789.5 1205.8,790.6 1208.4,791.8 1211.0,793.0 1212.6,795.1 1214.1,797.3 1215.5,799.5 1216.8,801.8 1218.0,804.2 1219.0,806.6 1219.9,809.0 1220.6,811.6 1221.2,814.1 1222.1,816.6 1222.8,819.1 1223.4,821.6 1224.0,824.1 1224.5,826.6 1224.9,829.2 1225.4,831.7 1225.8,834.3 1226.2,836.9 1226.5,839.5 1226.8,842.1 1227.3,844.8 1227.9,847.5 1227.8,850.2" stroke="#4848ff" stroke-width="3.2"/><polyline points="1189.6,783.0 1191.6,784.3 1194.4,784.6 1197.1,785.1 1199.9,785.7 1202.8,786.4 1205.6,787.3 1208.4,788.3 1211.2,789.4 1214.0,790.7 1215.6,792.9 1217.1,795.2 1218.5,797.6 1219.8,800.1 1220.9,802.6 1222.0,805.1 1222.9,807.7 1223.7,810.3 1224.3,813.0 1225.3,815.5 1226.1,818.1 1226.8,820.7 1227.4,823.4 1227.9,826.0 1228.3,828.7 1228.6,831.4 1228.8,834.1 1229.0,836.8 1229.0,839.5 1229.0,842.2 1229.2,844.9 1229.5,847.7 1229.1,850.4" stroke="#8080ff" stroke-width="3.2"/></g><clipPath id="csF2"><polygon points="1229.1,847.7 1229.0,850.4 1228.8,853.1 1228.5,855.9 1228.2,858.6 1226.8,861.1 1225.4,863.5 1223.9,865.8 1222.3,868.1 1220.8,870.4 1219.4,872.6 1218.0,874.9 1216.5,877.0 1214.9,879.1 1213.3,881.2 1211.6,883.2 1209.8,885.1 1198.8,876.4 1198.9,873.9 1198.8,871.4 1198.7,869.0 1198.4,866.6 1198.1,864.3 1197.8,862.1 1197.6,860.0 1197.3,858.0 1196.9,856.0 1196.5,854.1 1195.9,852.2 1195.3,850.4 1194.7,848.7 1193.9,847.0 1193.1,845.4 1192.3,843.8"/></clipPath><g clip-path="url(#csF2)" fill="none"><polygon points="1229.1,847.7 1229.0,850.4 1228.8,853.1 1228.5,855.9 1228.2,858.6 1226.8,861.1 1225.4,863.5 1223.9,865.8 1222.3,868.1 1220.8,870.4 1219.4,872.6 1218.0,874.9 1216.5,877.0 1214.9,879.1 1213.3,881.2 1211.6,883.2 1209.8,885.1 1198.8,876.4 1198.9,873.9 1198.8,871.4 1198.7,869.0 1198.4,866.6 1198.1,864.3 1197.8,862.1 1197.6,860.0 1197.3,858.0 1196.9,856.0 1196.5,854.1 1195.9,852.2 1195.3,850.4 1194.7,848.7 1193.9,847.0 1193.1,845.4 1192.3,843.8" fill="#a00000"/><polyline points="1193.2,842.4 1193.0,843.9 1193.6,845.4 1193.9,847.0 1194.0,848.5 1194.1,850.1 1194.3,851.8 1194.7,853.5 1195.3,855.4 1196.0,857.5 1196.8,859.7 1197.6,862.0 1198.4,864.5 1199.2,867.0 1199.6,869.6 1199.6,872.0 1199.4,874.3 1198.9,876.5 1197.1,877.7" stroke="#ff0000" stroke-width="2.6"/><polyline points="1193.8,842.5 1193.9,844.0 1194.9,845.6 1195.9,847.3 1196.8,849.1 1197.7,851.0 1198.4,852.9 1199.0,854.9 1199.5,857.0 1199.9,859.1 1200.2,861.2 1200.3,863.3 1200.6,865.6 1200.8,868.0 1200.9,870.4 1200.9,872.8 1200.7,875.3 1200.4,877.7 1198.9,879.3" stroke="#a00000" stroke-width="3.2"/><polyline points="1198.1,842.8 1197.7,844.4 1198.1,846.1 1198.4,847.8 1198.5,849.5 1198.7,851.3 1198.7,853.0 1198.7,854.8 1198.8,856.7 1198.9,858.7 1199.1,860.7 1199.4,862.9 1199.8,865.2 1200.3,867.7 1200.8,870.3 1201.0,872.9 1201.2,875.6 1201.1,878.2 1199.8,880.0" stroke="#ff0000" stroke-width="1.6"/><polyline points="1196.5,842.6 1196.3,844.2 1197.2,845.9 1198.3,847.8 1199.4,849.7 1200.6,851.7 1201.5,853.8 1202.2,856.0 1202.7,858.1 1203.0,860.3 1202.9,862.4 1202.7,864.4 1202.3,866.5 1201.8,868.6 1201.2,870.6 1200.6,872.6 1199.9,874.7 1199.3,876.8 1197.8,878.3" stroke="#ff0000" stroke-width="1.6"/><polyline points="1199.0,842.8 1198.8,844.5 1199.6,846.3 1200.3,848.1 1201.0,850.0 1201.6,852.0 1202.0,854.0 1202.3,856.0 1202.5,858.1 1202.7,860.2 1202.8,862.3 1202.8,864.5 1202.9,866.8 1203.0,869.2 1202.9,871.6 1202.7,874.0 1202.4,876.5 1201.9,878.9 1200.4,880.6" stroke="#ff0000" stroke-width="2.1"/><polyline points="1202.3,843.1 1202.5,844.9 1203.4,846.8 1204.0,848.8 1204.4,850.8 1204.6,852.7 1204.4,854.7 1204.0,856.6 1203.5,858.4 1203.0,860.3 1202.6,862.2 1202.2,864.2 1202.0,866.4 1202.0,868.7 1202.1,871.1 1202.1,873.6 1202.0,876.2 1201.9,878.9 1200.8,880.8" stroke="#a00000" stroke-width="1.6"/><polyline points="1201.8,843.0 1201.7,844.8 1202.4,846.7 1203.1,848.6 1203.8,850.6 1204.5,852.7 1204.9,854.8 1205.1,856.9 1205.3,859.1 1205.4,861.3 1205.4,863.5 1205.3,865.7 1205.2,868.1 1205.1,870.4 1204.8,872.8 1204.3,875.1 1203.7,877.4 1202.9,879.6 1201.2,881.2" stroke="#a00000" stroke-width="1.6"/><polyline points="1204.6,843.2 1204.7,845.1 1205.4,847.1 1206.1,849.1 1206.7,851.2 1207.2,853.4 1207.2,855.5 1207.1,857.6 1206.9,859.7 1206.6,861.8 1206.2,863.8 1205.7,865.9 1205.3,868.1 1204.8,870.3 1204.2,872.5 1203.6,874.6 1202.9,876.8 1202.0,879.0 1200.5,880.6" stroke="#a00000" stroke-width="1.6"/><polyline points="1207.8,843.4 1207.7,845.4 1208.2,847.5 1208.4,849.5 1208.5,851.6 1208.5,853.7 1208.0,855.7 1207.4,857.7 1206.7,859.6 1206.0,861.5 1205.3,863.4 1204.7,865.4 1204.2,867.5 1203.8,869.7 1203.4,872.0 1203.1,874.3 1202.7,876.7 1202.2,879.1 1201.1,881.1" stroke="#a00000" stroke-width="1.6"/><polyline points="1208.7,843.5 1208.1,845.4 1208.2,847.5 1208.2,849.5 1208.2,851.5 1208.2,853.6 1207.9,855.7 1207.6,857.7 1207.4,859.8 1207.1,862.0 1207.0,864.2 1206.9,866.5 1206.8,868.9 1206.7,871.4 1206.4,873.8 1206.0,876.3 1205.4,878.7 1204.6,881.0 1203.1,882.8" stroke="#a00000" stroke-width="2.6"/><polyline points="1211.8,843.7 1210.8,845.7 1210.4,847.8 1210.0,849.8 1209.7,851.9 1209.8,854.0 1209.7,856.2 1209.8,858.4 1210.0,860.8 1210.2,863.2 1210.3,865.7 1210.1,868.1 1209.7,870.4 1208.9,872.7 1207.8,874.7 1206.4,876.5 1204.9,878.3 1203.3,880.0 1201.5,881.4" stroke="#a00000" stroke-width="2.6"/><polyline points="1214.4,843.9 1214.0,846.1 1214.0,848.3 1214.0,850.5 1213.9,852.8 1213.7,855.0 1212.9,857.1 1212.1,859.2 1211.3,861.3 1210.4,863.3 1209.7,865.4 1209.0,867.5 1208.4,869.7 1207.8,872.0 1207.1,874.3 1206.5,876.6 1205.7,878.9 1204.9,881.2 1203.6,883.2" stroke="#ff0000" stroke-width="3.2"/><polyline points="1215.0,843.9 1214.9,846.2 1215.2,848.5 1215.5,850.8 1215.8,853.2 1216.1,855.6 1215.7,857.9 1215.2,860.2 1214.6,862.5 1213.9,864.7 1213.2,867.0 1212.5,869.2 1211.7,871.5 1210.8,873.7 1209.7,875.9 1208.6,878.0 1207.3,880.0 1205.9,882.0 1204.2,883.7" stroke="#ffff00" stroke-width="2.1"/><polyline points="1218.3,844.2 1217.7,846.5 1217.6,848.8 1217.7,851.2 1217.8,853.6 1218.1,856.1 1217.7,858.5 1217.3,860.9 1216.7,863.2 1215.8,865.5 1214.8,867.7 1213.7,869.8 1212.4,871.9 1211.1,873.9 1209.7,875.9 1208.3,877.8 1207.1,879.9 1205.9,882.0 1204.6,884.1" stroke="#ff0000" stroke-width="3.2"/><polyline points="1219.8,844.3 1219.7,846.7 1220.2,849.2 1220.6,851.7 1221.0,854.3 1221.2,856.9 1220.7,859.3 1219.9,861.7 1218.9,864.0 1217.8,866.3 1216.5,868.4 1215.2,870.6 1213.8,872.6 1212.3,874.6 1210.8,876.6 1209.3,878.5 1207.8,880.4 1206.3,882.3 1204.8,884.3" stroke="#4848ff" stroke-width="2.1"/><polyline points="1222.3,844.5 1222.4,846.9 1222.7,849.5 1222.9,852.1 1223.0,854.7 1223.1,857.3 1222.2,859.8 1221.3,862.2 1220.3,864.5 1219.1,866.8 1218.0,869.1 1216.9,871.4 1215.8,873.7 1214.6,875.9 1213.2,878.1 1211.8,880.1 1210.2,882.2 1208.6,884.1 1206.8,885.9" stroke="#8080ff" stroke-width="1.6"/><polyline points="1224.3,844.6 1223.8,847.1 1223.6,849.6 1223.3,852.2 1222.9,854.7 1222.5,857.2 1221.2,859.5 1219.9,861.7 1218.6,863.9 1217.2,866.1 1216.0,868.2 1214.9,870.4 1213.9,872.7 1212.8,874.9 1211.6,877.1 1210.5,879.3 1209.2,881.4 1207.9,883.6 1206.6,885.7" stroke="#8080ff" stroke-width="1.1"/><polyline points="1225.7,844.7 1225.7,847.3 1225.9,850.0 1225.9,852.6 1225.8,855.3 1225.6,858.0 1224.3,860.4 1223.0,862.7 1221.5,865.0 1219.9,867.1 1218.4,869.3 1217.0,871.4 1215.6,873.6 1214.2,875.7 1212.8,877.8 1211.4,879.9 1210.0,882.0 1208.6,884.1 1207.1,886.2" stroke="#ffff00" stroke-width="2.6"/><polyline points="1227.2,844.8 1226.5,847.4 1226.0,850.0 1225.6,852.6 1225.2,855.2 1225.0,857.8 1224.0,860.3 1223.0,862.7 1222.0,865.2 1221.1,867.6 1220.2,870.1 1219.4,872.6 1218.4,875.1 1217.2,877.4 1215.8,879.7 1214.2,881.8 1212.3,883.7 1210.3,885.4 1208.3,887.2" stroke="#4848ff" stroke-width="1.6"/><polyline points="1230.2,845.0 1230.1,847.8 1230.1,850.5 1229.9,853.3 1229.5,856.1 1229.0,858.8 1227.5,861.3 1225.9,863.7 1224.1,865.9 1222.3,868.1 1220.6,870.3 1219.1,872.4 1217.5,874.6 1215.8,876.6 1214.2,878.7 1212.6,880.7 1210.9,882.7 1209.2,884.6 1207.8,886.7" stroke="#8080ff" stroke-width="2.1"/><polyline points="1231.1,845.1 1230.5,847.8 1230.1,850.5 1229.7,853.3 1229.4,856.0 1229.1,858.8 1227.9,861.4 1226.7,863.9 1225.5,866.4 1224.2,868.9 1223.0,871.3 1221.8,873.8 1220.5,876.2 1218.9,878.4 1217.1,880.5 1215.2,882.5 1213.1,884.2 1210.8,885.9 1208.8,887.6" stroke="#4848ff" stroke-width="2.6"/></g><clipPath id="csFt"><polygon points="1204.4,771.7 1211.0,768.9 1217.8,766.4 1224.6,764.6 1230.4,764.5 1236.3,764.6 1241.2,766.0 1243.9,769.3 1236.3,779.8 1227.0,790.5 1215.2,798.1 1213.7,795.8 1212.0,793.5 1210.3,791.3 1208.5,789.2 1206.6,787.1 1204.6,785.1 1202.6,783.2 1200.5,781.4 1198.3,779.6"/></clipPath><g clip-path="url(#csFt)" fill="none"><polygon points="1204.4,771.7 1211.0,768.9 1217.8,766.4 1224.6,764.6 1230.4,764.5 1236.3,764.6 1241.2,766.0 1243.9,769.3 1236.3,779.8 1227.0,790.5 1215.2,798.1 1213.7,795.8 1212.0,793.5 1210.3,791.3 1208.5,789.2 1206.6,787.1 1204.6,785.1 1202.6,783.2 1200.5,781.4 1198.3,779.6" fill="#ff5050"/><polyline points="1195.3,779.0 1197.3,780.9 1199.2,782.9 1201.2,784.8 1203.2,786.6 1205.4,788.3 1207.5,790.0 1209.7,791.8 1211.8,793.7 1214.1,795.5 1216.2,797.5 1217.8,799.9" stroke="#4848ff" stroke-width="2.1"/><polyline points="1197.1,776.5 1199.4,778.2 1201.7,779.9 1203.8,781.9 1205.7,784.0 1207.4,786.3 1209.0,788.7 1210.5,791.1 1212.0,793.6 1213.1,796.2 1214.3,798.7 1216.0,800.9" stroke="#8080ff" stroke-width="2.6"/><polyline points="1197.2,776.3 1199.6,777.9 1202.1,779.4 1204.5,781.1 1206.7,783.0 1208.7,785.1 1210.6,787.3 1212.4,789.6 1214.1,792.0 1214.8,795.0 1215.5,797.9 1217.3,800.1" stroke="#4848ff" stroke-width="2.6"/><polyline points="1196.6,777.2 1198.7,779.1 1201.5,780.2 1204.4,781.2 1207.4,782.3 1210.2,783.7 1213.0,785.2 1215.5,787.0 1217.5,789.4 1217.7,792.9 1217.4,796.7 1218.6,799.4" stroke="#4848ff" stroke-width="2.1"/><polyline points="1196.9,776.7 1199.3,778.3 1202.5,778.9 1205.7,779.8 1208.8,780.8 1211.6,782.4 1214.2,784.1 1216.5,786.2 1218.3,788.8 1217.9,792.8 1217.2,796.8 1218.6,799.4" stroke="#8080ff" stroke-width="1.6"/><polyline points="1197.1,776.5 1199.2,778.4 1202.3,779.2 1205.4,780.1 1208.5,781.2 1211.4,782.6 1214.3,784.1 1216.9,785.9 1219.1,788.2 1218.8,792.2 1218.0,796.3 1219.8,798.6" stroke="#606060" stroke-width="2.1"/><polyline points="1197.6,775.8 1200.3,777.0 1204.2,777.0 1207.9,777.4 1211.3,778.3 1214.1,779.9 1216.7,781.9 1218.9,784.3 1220.3,787.2 1219.0,792.0 1217.5,796.7 1219.3,798.9" stroke="#ff0000" stroke-width="2.1"/><polyline points="1198.1,775.1 1200.3,777.1 1203.7,777.5 1207.3,778.0 1210.8,778.8 1214.0,780.1 1217.2,781.5 1220.2,783.2 1222.3,785.7 1221.1,790.6 1219.3,795.5 1221.0,797.9" stroke="#ff5050" stroke-width="1.6"/><polyline points="1199.2,773.5 1201.5,775.5 1205.0,776.0 1208.5,776.7 1211.9,777.7 1214.8,779.3 1217.9,780.8 1220.8,782.7 1223.0,785.2 1221.5,790.3 1219.4,795.4 1221.6,797.6" stroke="#ff0000" stroke-width="2.6"/><polyline points="1199.2,773.5 1201.4,775.6 1205.1,775.8 1208.8,776.3 1212.5,777.0 1215.8,778.3 1219.3,779.6 1222.5,781.3 1225.0,783.7 1223.1,789.1 1220.6,794.7 1222.6,797.0" stroke="#606060" stroke-width="1.1"/><polyline points="1199.5,773.1 1202.2,774.6 1206.5,774.2 1210.8,774.2 1214.8,774.7 1218.2,776.1 1221.4,777.8 1224.1,780.0 1225.7,783.1 1222.7,789.4 1219.0,795.7 1220.5,798.2" stroke="#ff5050" stroke-width="1.6"/><polyline points="1199.7,772.9 1202.3,774.4 1206.8,773.9 1211.2,773.8 1215.4,774.1 1218.9,775.5 1222.2,777.0 1225.1,779.2 1226.8,782.3 1223.5,788.8 1219.5,795.3 1221.0,797.9" stroke="#ff0000" stroke-width="1.1"/><polyline points="1199.4,773.3 1201.6,775.4 1205.8,775.1 1210.1,774.9 1214.4,775.1 1218.3,776.0 1222.3,776.9 1226.0,778.5 1228.5,781.0 1225.7,787.3 1221.9,793.8 1223.7,796.3" stroke="#ff5050" stroke-width="1.6"/><polyline points="1199.3,773.4 1202.1,774.7 1207.1,773.5 1212.2,772.6 1217.1,772.3 1221.2,773.2 1225.2,774.4 1228.4,776.4 1230.2,779.7 1226.2,787.0 1221.1,794.3 1222.3,797.1" stroke="#606060" stroke-width="2.1"/><polyline points="1199.2,773.5 1201.8,775.1 1207.0,773.7 1212.3,772.5 1217.5,771.9 1222.0,772.5 1226.3,773.4 1229.9,775.3 1231.9,778.4 1227.5,786.0 1222.0,793.7 1223.4,796.5" stroke="#606060" stroke-width="2.6"/><polyline points="1200.3,772.0 1203.0,773.5 1208.4,771.9 1213.9,770.8 1219.2,770.2 1223.6,771.0 1227.9,772.1 1231.5,774.0 1233.4,777.3 1228.5,785.4 1222.3,793.5 1224.0,796.2" stroke="#606060" stroke-width="3.2"/><polyline points="1200.8,771.4 1203.3,773.2 1208.8,771.5 1214.4,770.2 1219.9,769.5 1224.6,770.0 1229.4,770.7 1233.4,772.4 1235.7,775.5 1230.3,784.1 1223.6,792.6 1225.4,795.3" stroke="#ff0000" stroke-width="2.6"/><polyline points="1200.5,771.8 1203.1,773.5 1208.8,771.4 1214.8,769.7 1220.8,768.5 1226.0,768.7 1231.1,769.2 1235.6,770.6 1238.1,773.7 1232.5,782.6 1225.3,791.5 1227.1,794.3" stroke="#ff0000" stroke-width="1.1"/><polyline points="1201.3,770.7 1203.6,772.8 1209.2,771.0 1215.0,769.6 1220.7,768.6 1225.7,769.0 1230.7,769.6 1235.1,771.0 1237.6,774.1 1231.8,783.0 1224.6,792.1 1226.5,794.6" stroke="#a00000" stroke-width="1.1"/><polyline points="1200.2,772.1 1202.6,774.1 1208.6,771.8 1214.9,769.6 1221.5,767.9 1227.2,767.5 1233.0,767.5 1238.0,768.6 1240.8,771.7 1234.6,781.1 1226.5,790.8 1227.9,793.8" stroke="#ff5050" stroke-width="2.1"/><polyline points="1201.7,770.1 1204.3,771.9 1210.5,769.5 1216.7,767.6 1222.9,766.4 1228.1,766.6 1233.4,767.2 1237.8,768.8 1240.3,772.1 1233.6,781.8 1225.4,791.5 1227.4,794.1" stroke="#ff5050" stroke-width="1.6"/><polyline points="1202.3,769.3 1204.6,771.5 1210.7,769.2 1217.1,767.2 1223.4,765.9 1228.8,766.0 1234.2,766.5 1238.8,768.0 1241.2,771.4 1234.0,781.5 1225.0,791.7 1226.8,794.4" stroke="#ff0000" stroke-width="2.6"/><polyline points="1202.6,768.9 1205.1,770.8 1211.7,768.1 1218.5,765.7 1225.2,764.0 1230.9,764.0 1236.7,764.3 1241.5,765.8 1244.0,769.3 1236.3,779.9 1226.7,790.6 1228.3,793.6" stroke="#ff0000" stroke-width="1.1"/><polyline points="1201.5,770.4 1204.2,772.0 1211.1,768.7 1218.4,765.8 1225.7,763.5 1231.9,763.0 1238.3,762.9 1243.6,764.0 1246.5,767.3 1238.7,778.2 1229.0,789.2 1230.8,792.0" stroke="#ffff00" stroke-width="3.2"/></g><clipPath id="csNg"><polygon points="1137.7,819.8 1138.5,819.5 1139.3,819.1 1140.1,818.8 1140.9,818.5 1141.7,818.2 1142.5,818.0 1143.4,817.8 1144.2,817.6 1145.0,817.5 1145.8,817.4 1146.6,817.3 1147.5,817.3 1148.3,817.3 1149.1,817.3 1149.9,817.3 1150.7,817.4 1151.5,817.5 1151.5,831.5 1151.2,831.4 1150.9,831.3 1150.6,831.2 1150.3,831.1 1150.0,831.1 1149.6,831.0 1149.3,831.0 1149.0,830.9 1148.6,830.9 1148.3,830.9 1147.9,830.9 1147.6,830.9 1147.2,831.0 1146.8,831.0 1146.5,831.1 1146.1,831.2 1145.8,831.3"/></clipPath><g clip-path="url(#csNg)" fill="none"><polygon points="1137.7,819.8 1138.5,819.5 1139.3,819.1 1140.1,818.8 1140.9,818.5 1141.7,818.2 1142.5,818.0 1143.4,817.8 1144.2,817.6 1145.0,817.5 1145.8,817.4 1146.6,817.3 1147.5,817.3 1148.3,817.3 1149.1,817.3 1149.9,817.3 1150.7,817.4 1151.5,817.5 1151.5,831.5 1151.2,831.4 1150.9,831.3 1150.6,831.2 1150.3,831.1 1150.0,831.1 1149.6,831.0 1149.3,831.0 1149.0,830.9 1148.6,830.9 1148.3,830.9 1147.9,830.9 1147.6,830.9 1147.2,831.0 1146.8,831.0 1146.5,831.1 1146.1,831.2 1145.8,831.3" fill="#006400"/><polyline points="1146.2,832.5 1146.5,832.4 1146.8,832.2 1147.0,832.0 1147.2,831.7 1147.4,831.3 1147.5,830.9 1147.7,830.5 1148.0,830.1 1148.3,829.8 1148.6,829.7 1149.0,829.6 1149.4,829.7 1149.8,829.9 1150.2,830.3 1150.5,830.7 1150.9,831.2 1151.2,831.7 1151.5,832.2 1151.8,832.5" stroke="#006400" stroke-width="1.6"/><polyline points="1144.1,829.6 1144.3,829.3 1144.8,829.2 1145.4,829.3 1146.0,829.6 1146.7,829.9 1147.2,830.2 1147.7,830.3 1148.0,830.3 1148.3,830.1 1148.6,829.7 1148.9,829.3 1149.2,828.9 1149.5,828.7 1149.9,828.7 1150.4,828.9 1150.8,829.3 1151.2,829.8 1151.5,830.4 1151.8,830.7" stroke="#006400" stroke-width="1.6"/><polyline points="1143.9,829.5 1144.2,829.0 1144.4,828.6 1144.7,828.1 1145.0,827.7 1145.4,827.4 1145.8,827.1 1146.3,827.0 1146.8,827.0 1147.3,827.1 1147.9,827.3 1148.4,827.6 1149.0,828.0 1149.5,828.3 1149.9,828.6 1150.3,828.9 1150.7,829.0 1151.1,829.0 1151.5,828.9 1151.9,828.6" stroke="#006400" stroke-width="2.1"/><polyline points="1142.7,827.8 1143.3,827.8 1143.8,827.7 1144.3,827.4 1144.6,827.0 1144.9,826.5 1145.2,825.9 1145.6,825.3 1146.0,824.8 1146.5,824.5 1147.0,824.3 1147.6,824.4 1148.3,824.7 1148.9,825.1 1149.5,825.7 1150.1,826.2 1150.6,826.7 1151.1,827.1 1151.5,827.3 1151.9,827.1" stroke="#006400" stroke-width="2.6"/><polyline points="1140.9,825.4 1141.6,825.4 1142.4,825.4 1143.0,825.4 1143.6,825.2 1144.2,825.0 1144.7,824.7 1145.1,824.3 1145.6,823.8 1146.1,823.3 1146.6,822.9 1147.1,822.5 1147.7,822.3 1148.4,822.2 1149.0,822.3 1149.7,822.6 1150.3,822.9 1150.9,823.4 1151.5,823.9 1152.0,824.3" stroke="#006400" stroke-width="2.1"/><polyline points="1139.8,824.0 1140.3,823.5 1140.8,823.0 1141.4,822.7 1142.0,822.3 1142.7,822.0 1143.3,821.7 1144.0,821.5 1144.7,821.4 1145.4,821.3 1146.1,821.2 1146.8,821.2 1147.5,821.3 1148.2,821.4 1148.9,821.5 1149.6,821.7 1150.2,821.9 1150.9,822.1 1151.5,822.3 1152.1,822.5" stroke="#006400" stroke-width="1.6"/><polyline points="1138.7,822.5 1139.2,821.9 1139.8,821.4 1140.4,821.0 1141.1,820.6 1141.8,820.2 1142.5,819.9 1143.2,819.6 1144.0,819.4 1144.7,819.3 1145.5,819.2 1146.3,819.2 1147.1,819.2 1147.8,819.3 1148.6,819.4 1149.3,819.6 1150.1,819.8 1150.8,820.0 1151.5,820.3 1152.2,820.5" stroke="#00ff00" stroke-width="2.1"/><polyline points="1136.5,819.7 1137.4,819.3 1138.4,819.2 1139.4,819.2 1140.4,819.3 1141.3,819.3 1142.2,819.3 1143.0,819.2 1143.8,818.9 1144.5,818.6 1145.2,818.1 1145.9,817.6 1146.6,817.1 1147.4,816.7 1148.2,816.5 1149.0,816.4 1149.8,816.5 1150.7,816.9 1151.5,817.3 1152.3,817.8" stroke="#006400" stroke-width="3.2"/></g><g clip-path="url(#cpA)" fill="none"><polygon points="1057.8,783.6 1062.5,774.2 1070.6,764.7 1080.1,755.2 1082.8,747.1 1086.9,748.4 1086.9,753.9 1093.6,755.2 1100.4,760.6 1105.8,762.0 1111.2,767.4 1108.5,771.5 1101.8,770.1 1097.7,767.4 1095.0,764.7 1089.6,764.7 1084.2,768.7 1078.7,776.9 1074.7,783.6 1070.6,790.4 1065.2,790.4 1060.5,787.7" fill="#8c5c00"/><circle cx="1151.5" cy="839.5" r="79.20" stroke="#ff5050" stroke-width="1.5"/><circle cx="1151.5" cy="839.5" r="80.95" stroke="#8c5c00" stroke-width="2.0"/><circle cx="1151.5" cy="839.5" r="82.45" stroke="#8c5c00" stroke-width="1.0"/><circle cx="1151.5" cy="839.5" r="84.20" stroke="#ff5050" stroke-width="2.5"/><circle cx="1151.5" cy="839.5" r="86.20" stroke="#ff5050" stroke-width="1.5"/><circle cx="1151.5" cy="839.5" r="87.95" stroke="#ff0000" stroke-width="2.0"/><circle cx="1151.5" cy="839.5" r="89.70" stroke="#ffff00" stroke-width="1.5"/><circle cx="1151.5" cy="839.5" r="90.95" stroke="#ff5050" stroke-width="1.0"/><circle cx="1151.5" cy="839.5" r="92.95" stroke="#a00000" stroke-width="3.0"/><circle cx="1151.5" cy="839.5" r="95.95" stroke="#8c5c00" stroke-width="3.0"/><circle cx="1151.5" cy="839.5" r="98.95" stroke="#a00000" stroke-width="3.0"/><circle cx="1151.5" cy="839.5" r="100.95" stroke="#606060" stroke-width="1.0"/><circle cx="1151.5" cy="839.5" r="102.20" stroke="#8c5c00" stroke-width="1.5"/><circle cx="1151.5" cy="839.5" r="103.45" stroke="#ff0000" stroke-width="1.0"/><circle cx="1151.5" cy="839.5" r="105.45" stroke="#606060" stroke-width="3.0"/><circle cx="1151.5" cy="839.5" r="107.45" stroke="#ff0000" stroke-width="1.0"/><circle cx="1151.5" cy="839.5" r="109.45" stroke="#a00000" stroke-width="3.0"/><circle cx="1151.5" cy="839.5" r="112.45" stroke="#ff0000" stroke-width="3.0"/><circle cx="1151.5" cy="839.5" r="114.70" stroke="#a00000" stroke-width="1.5"/><circle cx="1151.5" cy="839.5" r="116.20" stroke="#606060" stroke-width="1.5"/><circle cx="1151.5" cy="839.5" r="117.45" stroke="#606060" stroke-width="1.0"/></g><g clip-path="url(#cpG)" fill="none"><polygon points="1218.5,831.5 1268.0,831.5 1268.0,843.5 1218.5,843.5" fill="#ff0000"/><circle cx="1151.5" cy="839.5" r="66.12" stroke="#8080ff" stroke-width="2.0"/><circle cx="1151.5" cy="839.5" r="67.87" stroke="#8080ff" stroke-width="1.5"/><circle cx="1151.5" cy="839.5" r="70.12" stroke="#8080ff" stroke-width="3.0"/><circle cx="1151.5" cy="839.5" r="72.37" stroke="#ffff00" stroke-width="1.5"/><circle cx="1151.5" cy="839.5" r="74.12" stroke="#4848ff" stroke-width="2.0"/><circle cx="1151.5" cy="839.5" r="75.62" stroke="#8080ff" stroke-width="1.0"/><circle cx="1151.5" cy="839.5" r="76.87" stroke="#8080ff" stroke-width="1.5"/><circle cx="1151.5" cy="839.5" r="79.12" stroke="#4848ff" stroke-width="3.0"/><circle cx="1151.5" cy="839.5" r="81.12" stroke="#4848ff" stroke-width="1.0"/><circle cx="1151.5" cy="839.5" r="82.62" stroke="#ffff00" stroke-width="2.0"/><circle cx="1151.5" cy="839.5" r="85.12" stroke="#ffff00" stroke-width="3.0"/><circle cx="1151.5" cy="839.5" r="87.87" stroke="#8080ff" stroke-width="2.5"/><circle cx="1151.5" cy="839.5" r="90.12" stroke="#ff5050" stroke-width="2.0"/><circle cx="1151.5" cy="839.5" r="91.62" stroke="#ff5050" stroke-width="1.0"/><circle cx="1151.5" cy="839.5" r="93.12" stroke="#ff0000" stroke-width="2.0"/><circle cx="1151.5" cy="839.5" r="94.87" stroke="#ff5050" stroke-width="1.5"/><circle cx="1151.5" cy="839.5" r="97.12" stroke="#ff5050" stroke-width="3.0"/><circle cx="1151.5" cy="839.5" r="99.87" stroke="#ff5050" stroke-width="2.5"/><circle cx="1151.5" cy="839.5" r="102.37" stroke="#606060" stroke-width="2.5"/><circle cx="1151.5" cy="839.5" r="105.12" stroke="#a00000" stroke-width="3.0"/><circle cx="1151.5" cy="839.5" r="107.12" stroke="#606060" stroke-width="1.0"/><circle cx="1151.5" cy="839.5" r="108.37" stroke="#a00000" stroke-width="1.5"/><circle cx="1151.5" cy="839.5" r="110.12" stroke="#606060" stroke-width="2.0"/><circle cx="1151.5" cy="839.5" r="112.12" stroke="#606060" stroke-width="2.0"/><circle cx="1151.5" cy="839.5" r="114.12" stroke="#606060" stroke-width="2.0"/><circle cx="1151.5" cy="839.5" r="116.12" stroke="#606060" stroke-width="2.0"/><circle cx="1151.5" cy="839.5" r="117.62" stroke="#606060" stroke-width="1.0"/><circle cx="1151.5" cy="839.5" r="119.12" stroke="#606060" stroke-width="2.0"/></g><g clip-path="url(#cpM)" fill="none"><polygon points="1153.7,821.0 1165.0,824.0 1180.0,831.3 1191.7,840.0 1195.0,852.0 1197.5,863.3 1191.0,868.0 1185.8,872.1 1187.0,885.0 1188.5,903.0 1185.8,907.0 1177.1,901.3 1170.0,890.0 1165.4,880.8 1159.6,872.1 1152.3,851.7 1151.5,839.5" fill="#006400"/><circle cx="1151.5" cy="839.5" r="2.00" stroke="#00ff00" stroke-width="2.0"/><circle cx="1151.5" cy="839.5" r="3.75" stroke="#00ff00" stroke-width="1.5"/><circle cx="1151.5" cy="839.5" r="6.00" stroke="#006400" stroke-width="3.0"/><circle cx="1151.5" cy="839.5" r="8.25" stroke="#006400" stroke-width="1.5"/><circle cx="1151.5" cy="839.5" r="9.75" stroke="#006400" stroke-width="1.5"/><circle cx="1151.5" cy="839.5" r="11.00" stroke="#006400" stroke-width="1.0"/><circle cx="1151.5" cy="839.5" r="12.50" stroke="#006400" stroke-width="2.0"/><circle cx="1151.5" cy="839.5" r="14.25" stroke="#006400" stroke-width="1.5"/><circle cx="1151.5" cy="839.5" r="16.50" stroke="#006400" stroke-width="3.0"/><circle cx="1151.5" cy="839.5" r="19.00" stroke="#006400" stroke-width="2.0"/><circle cx="1151.5" cy="839.5" r="20.75" stroke="#006400" stroke-width="1.5"/><circle cx="1151.5" cy="839.5" r="23.00" stroke="#006400" stroke-width="3.0"/><circle cx="1151.5" cy="839.5" r="25.50" stroke="#00ff00" stroke-width="2.0"/><circle cx="1151.5" cy="839.5" r="28.00" stroke="#006400" stroke-width="3.0"/><circle cx="1151.5" cy="839.5" r="30.25" stroke="#006400" stroke-width="1.5"/><circle cx="1151.5" cy="839.5" r="31.50" stroke="#006400" stroke-width="1.0"/><circle cx="1151.5" cy="839.5" r="33.00" stroke="#006400" stroke-width="2.0"/><circle cx="1151.5" cy="839.5" r="35.50" stroke="#006400" stroke-width="3.0"/><circle cx="1151.5" cy="839.5" r="38.00" stroke="#006400" stroke-width="2.0"/><circle cx="1151.5" cy="839.5" r="40.00" stroke="#006400" stroke-width="2.0"/><circle cx="1151.5" cy="839.5" r="42.25" stroke="#006400" stroke-width="2.5"/><circle cx="1151.5" cy="839.5" r="44.25" stroke="#006400" stroke-width="1.5"/><circle cx="1151.5" cy="839.5" r="46.25" stroke="#00ff00" stroke-width="2.5"/><circle cx="1151.5" cy="839.5" r="48.25" stroke="#006400" stroke-width="1.5"/><circle cx="1151.5" cy="839.5" r="50.50" stroke="#006400" stroke-width="3.0"/><circle cx="1151.5" cy="839.5" r="52.50" stroke="#006400" stroke-width="1.0"/><circle cx="1151.5" cy="839.5" r="54.00" stroke="#00ff00" stroke-width="2.0"/><circle cx="1151.5" cy="839.5" r="55.75" stroke="#00ff00" stroke-width="1.5"/><circle cx="1151.5" cy="839.5" r="57.50" stroke="#006400" stroke-width="2.0"/><circle cx="1151.5" cy="839.5" r="59.50" stroke="#006400" stroke-width="2.0"/><circle cx="1151.5" cy="839.5" r="61.00" stroke="#00ffff" stroke-width="1.0"/><circle cx="1151.5" cy="839.5" r="63.00" stroke="#00ffff" stroke-width="3.0"/><circle cx="1151.5" cy="839.5" r="65.25" stroke="#00ffff" stroke-width="1.5"/><circle cx="1151.5" cy="839.5" r="67.25" stroke="#4848ff" stroke-width="2.5"/><circle cx="1151.5" cy="839.5" r="70.00" stroke="#8080ff" stroke-width="3.0"/><circle cx="1151.5" cy="839.5" r="72.00" stroke="#4848ff" stroke-width="1.0"/><circle cx="1151.5" cy="839.5" r="73.50" stroke="#ffff00" stroke-width="2.0"/><circle cx="1151.5" cy="839.5" r="75.50" stroke="#ffff00" stroke-width="2.0"/><circle cx="1151.5" cy="839.5" r="78.00" stroke="#ffff00" stroke-width="3.0"/></g><g clip-path="url(#cpI)" fill="none"><polygon points="1081.5,924.8 1083.0,912.0 1084.2,905.8 1088.2,886.9 1092.3,870.6 1097.7,861.1 1104.5,855.0 1111.2,846.0 1116.7,838.0 1121.0,841.0 1119.4,848.0 1114.0,857.1 1110.0,866.0 1111.2,878.0 1110.0,888.0 1105.0,898.0 1100.4,905.8 1092.3,916.7 1086.9,926.1" fill="#8080ff"/><circle cx="1151.5" cy="839.5" r="29.04" stroke="#00ff00" stroke-width="1.0"/><circle cx="1151.5" cy="839.5" r="30.79" stroke="#006400" stroke-width="2.5"/><circle cx="1151.5" cy="839.5" r="32.79" stroke="#006400" stroke-width="1.5"/><circle cx="1151.5" cy="839.5" r="34.04" stroke="#006400" stroke-width="1.0"/><circle cx="1151.5" cy="839.5" r="35.79" stroke="#006400" stroke-width="2.5"/><circle cx="1151.5" cy="839.5" r="38.29" stroke="#00ff00" stroke-width="2.5"/><circle cx="1151.5" cy="839.5" r="40.79" stroke="#006400" stroke-width="2.5"/><circle cx="1151.5" cy="839.5" r="43.04" stroke="#00ff00" stroke-width="2.0"/><circle cx="1151.5" cy="839.5" r="44.79" stroke="#006400" stroke-width="1.5"/><circle cx="1151.5" cy="839.5" r="46.29" stroke="#00ffff" stroke-width="1.5"/><circle cx="1151.5" cy="839.5" r="48.29" stroke="#00ffff" stroke-width="2.5"/><circle cx="1151.5" cy="839.5" r="51.04" stroke="#00ffff" stroke-width="3.0"/><circle cx="1151.5" cy="839.5" r="54.04" stroke="#8080ff" stroke-width="3.0"/><circle cx="1151.5" cy="839.5" r="57.04" stroke="#00ffff" stroke-width="3.0"/><circle cx="1151.5" cy="839.5" r="59.04" stroke="#00ffff" stroke-width="1.0"/><circle cx="1151.5" cy="839.5" r="60.04" stroke="#00ffff" stroke-width="1.0"/><circle cx="1151.5" cy="839.5" r="61.54" stroke="#00ffff" stroke-width="2.0"/><circle cx="1151.5" cy="839.5" r="63.54" stroke="#8080ff" stroke-width="2.0"/><circle cx="1151.5" cy="839.5" r="65.54" stroke="#ffff00" stroke-width="2.0"/><circle cx="1151.5" cy="839.5" r="68.04" stroke="#ffff00" stroke-width="3.0"/><circle cx="1151.5" cy="839.5" r="70.54" stroke="#8080ff" stroke-width="2.0"/><circle cx="1151.5" cy="839.5" r="72.79" stroke="#00ffff" stroke-width="2.5"/><circle cx="1151.5" cy="839.5" r="75.29" stroke="#ff0000" stroke-width="2.5"/><circle cx="1151.5" cy="839.5" r="78.04" stroke="#ff5050" stroke-width="3.0"/><circle cx="1151.5" cy="839.5" r="80.04" stroke="#ff0000" stroke-width="1.0"/><circle cx="1151.5" cy="839.5" r="81.29" stroke="#ff0000" stroke-width="1.5"/><circle cx="1151.5" cy="839.5" r="83.54" stroke="#ff0000" stroke-width="3.0"/><circle cx="1151.5" cy="839.5" r="86.04" stroke="#ff0000" stroke-width="2.0"/><circle cx="1151.5" cy="839.5" r="88.29" stroke="#ff0000" stroke-width="2.5"/><circle cx="1151.5" cy="839.5" r="90.54" stroke="#a00000" stroke-width="2.0"/><circle cx="1151.5" cy="839.5" r="92.29" stroke="#a00000" stroke-width="1.5"/><circle cx="1151.5" cy="839.5" r="94.04" stroke="#ff0000" stroke-width="2.0"/><circle cx="1151.5" cy="839.5" r="96.29" stroke="#ff5050" stroke-width="2.5"/><circle cx="1151.5" cy="839.5" r="99.04" stroke="#a00000" stroke-width="3.0"/><circle cx="1151.5" cy="839.5" r="101.04" stroke="#a00000" stroke-width="1.0"/><circle cx="1151.5" cy="839.5" r="102.29" stroke="#606060" stroke-width="1.5"/><circle cx="1151.5" cy="839.5" r="103.54" stroke="#606060" stroke-width="1.0"/><circle cx="1151.5" cy="839.5" r="105.04" stroke="#606060" stroke-width="2.0"/><circle cx="1151.5" cy="839.5" r="106.79" stroke="#a00000" stroke-width="1.5"/><circle cx="1151.5" cy="839.5" r="108.29" stroke="#a00000" stroke-width="1.5"/><circle cx="1151.5" cy="839.5" r="110.04" stroke="#606060" stroke-width="2.0"/><circle cx="1151.5" cy="839.5" r="112.04" stroke="#a00000" stroke-width="2.0"/></g><g clip-path="url(#cpJ1)" fill="none"><polygon points="1116.7,878.7 1123.4,877.4 1124.8,895.0 1127.5,924.8 1124.8,937.0 1119.4,938.3 1118.0,924.8 1116.7,897.7" fill="#a00000"/><circle cx="1151.5" cy="839.5" r="46.18" stroke="#ff0000" stroke-width="2.0"/><circle cx="1151.5" cy="839.5" r="47.93" stroke="#a00000" stroke-width="1.5"/><circle cx="1151.5" cy="839.5" r="50.18" stroke="#ff0000" stroke-width="3.0"/><circle cx="1151.5" cy="839.5" r="52.68" stroke="#a00000" stroke-width="2.0"/><circle cx="1151.5" cy="839.5" r="55.18" stroke="#a00000" stroke-width="3.0"/><circle cx="1151.5" cy="839.5" r="58.18" stroke="#a00000" stroke-width="3.0"/><circle cx="1151.5" cy="839.5" r="60.43" stroke="#a00000" stroke-width="1.5"/><circle cx="1151.5" cy="839.5" r="61.93" stroke="#a00000" stroke-width="1.5"/><circle cx="1151.5" cy="839.5" r="64.18" stroke="#606060" stroke-width="3.0"/><circle cx="1151.5" cy="839.5" r="67.18" stroke="#606060" stroke-width="3.0"/><circle cx="1151.5" cy="839.5" r="70.18" stroke="#606060" stroke-width="3.0"/><circle cx="1151.5" cy="839.5" r="72.68" stroke="#a00000" stroke-width="2.0"/><circle cx="1151.5" cy="839.5" r="74.68" stroke="#606060" stroke-width="2.0"/><circle cx="1151.5" cy="839.5" r="77.18" stroke="#606060" stroke-width="3.0"/><circle cx="1151.5" cy="839.5" r="79.93" stroke="#a00000" stroke-width="2.5"/><circle cx="1151.5" cy="839.5" r="82.68" stroke="#606060" stroke-width="3.0"/><circle cx="1151.5" cy="839.5" r="85.68" stroke="#606060" stroke-width="3.0"/><circle cx="1151.5" cy="839.5" r="88.43" stroke="#606060" stroke-width="2.5"/><circle cx="1151.5" cy="839.5" r="90.93" stroke="#606060" stroke-width="2.5"/><circle cx="1151.5" cy="839.5" r="92.68" stroke="#606060" stroke-width="1.0"/><circle cx="1151.5" cy="839.5" r="93.93" stroke="#a00000" stroke-width="1.5"/><circle cx="1151.5" cy="839.5" r="95.43" stroke="#606060" stroke-width="1.5"/><circle cx="1151.5" cy="839.5" r="97.18" stroke="#606060" stroke-width="2.0"/><circle cx="1151.5" cy="839.5" r="98.93" stroke="#a00000" stroke-width="1.5"/><circle cx="1151.5" cy="839.5" r="100.43" stroke="#606060" stroke-width="1.5"/><circle cx="1151.5" cy="839.5" r="101.68" stroke="#606060" stroke-width="1.0"/><circle cx="1151.5" cy="839.5" r="103.18" stroke="#a00000" stroke-width="2.0"/><circle cx="1151.5" cy="839.5" r="105.18" stroke="#606060" stroke-width="2.0"/></g><g clip-path="url(#cpJ2)" fill="none"><polygon points="1130.9,885.5 1137.7,886.9 1135.6,900.4 1132.9,911.2 1127.5,911.2 1128.8,897.7" fill="#a00000"/><circle cx="1151.5" cy="839.5" r="48.12" stroke="#00ffff" stroke-width="1.5"/><circle cx="1151.5" cy="839.5" r="49.37" stroke="#00ffff" stroke-width="1.0"/><circle cx="1151.5" cy="839.5" r="50.87" stroke="#00ffff" stroke-width="2.0"/><circle cx="1151.5" cy="839.5" r="52.37" stroke="#a00000" stroke-width="1.0"/><circle cx="1151.5" cy="839.5" r="54.37" stroke="#a00000" stroke-width="3.0"/><circle cx="1151.5" cy="839.5" r="56.62" stroke="#a00000" stroke-width="1.5"/><circle cx="1151.5" cy="839.5" r="58.12" stroke="#ff0000" stroke-width="1.5"/><circle cx="1151.5" cy="839.5" r="59.87" stroke="#ff0000" stroke-width="2.0"/><circle cx="1151.5" cy="839.5" r="61.62" stroke="#ff0000" stroke-width="1.5"/><circle cx="1151.5" cy="839.5" r="63.12" stroke="#a00000" stroke-width="1.5"/><circle cx="1151.5" cy="839.5" r="64.87" stroke="#606060" stroke-width="2.0"/><circle cx="1151.5" cy="839.5" r="66.62" stroke="#606060" stroke-width="1.5"/><circle cx="1151.5" cy="839.5" r="68.12" stroke="#606060" stroke-width="1.5"/><circle cx="1151.5" cy="839.5" r="69.37" stroke="#a00000" stroke-width="1.0"/><circle cx="1151.5" cy="839.5" r="70.37" stroke="#a00000" stroke-width="1.0"/><circle cx="1151.5" cy="839.5" r="72.37" stroke="#606060" stroke-width="3.0"/><circle cx="1151.5" cy="839.5" r="75.12" stroke="#606060" stroke-width="2.5"/><circle cx="1151.5" cy="839.5" r="77.62" stroke="#606060" stroke-width="2.5"/></g><g clip-path="url(#cpK1)" fill="none"><polygon points="1124.8,938.3 1132.9,934.3 1134.3,938.3 1127.5,949.2 1123.4,951.9 1122.1,946.5" fill="#a00000"/><circle cx="1151.5" cy="839.5" r="95.61" stroke="#a00000" stroke-width="2.0"/><circle cx="1151.5" cy="839.5" r="97.86" stroke="#ff0000" stroke-width="2.5"/><circle cx="1151.5" cy="839.5" r="99.86" stroke="#a00000" stroke-width="1.5"/><circle cx="1151.5" cy="839.5" r="101.61" stroke="#a00000" stroke-width="2.0"/><circle cx="1151.5" cy="839.5" r="103.36" stroke="#ff0000" stroke-width="1.5"/><circle cx="1151.5" cy="839.5" r="105.11" stroke="#a00000" stroke-width="2.0"/><circle cx="1151.5" cy="839.5" r="106.86" stroke="#ff0000" stroke-width="1.5"/><circle cx="1151.5" cy="839.5" r="108.36" stroke="#ff0000" stroke-width="1.5"/><circle cx="1151.5" cy="839.5" r="110.61" stroke="#ff0000" stroke-width="3.0"/><circle cx="1151.5" cy="839.5" r="113.11" stroke="#a00000" stroke-width="2.0"/><circle cx="1151.5" cy="839.5" r="115.11" stroke="#ff0000" stroke-width="2.0"/><circle cx="1151.5" cy="839.5" r="117.36" stroke="#ff0000" stroke-width="2.5"/></g><g clip-path="url(#cpK2)" fill="none"><polygon points="1135.6,926.1 1142.4,926.1 1154.6,947.8 1151.9,954.6 1146.5,951.9 1137.0,932.9" fill="#ff5050"/><circle cx="1151.5" cy="839.5" r="86.33" stroke="#ff5050" stroke-width="2.5"/><circle cx="1151.5" cy="839.5" r="88.33" stroke="#ff5050" stroke-width="1.5"/><circle cx="1151.5" cy="839.5" r="90.08" stroke="#ff0000" stroke-width="2.0"/><circle cx="1151.5" cy="839.5" r="92.08" stroke="#ff5050" stroke-width="2.0"/><circle cx="1151.5" cy="839.5" r="93.58" stroke="#ff5050" stroke-width="1.0"/><circle cx="1151.5" cy="839.5" r="94.58" stroke="#ff5050" stroke-width="1.0"/><circle cx="1151.5" cy="839.5" r="95.58" stroke="#a00000" stroke-width="1.0"/><circle cx="1151.5" cy="839.5" r="97.58" stroke="#ff0000" stroke-width="3.0"/><circle cx="1151.5" cy="839.5" r="100.08" stroke="#ff0000" stroke-width="2.0"/><circle cx="1151.5" cy="839.5" r="102.58" stroke="#ff0000" stroke-width="3.0"/><circle cx="1151.5" cy="839.5" r="104.83" stroke="#ff5050" stroke-width="1.5"/><circle cx="1151.5" cy="839.5" r="107.08" stroke="#ff5050" stroke-width="3.0"/><circle cx="1151.5" cy="839.5" r="110.08" stroke="#ff5050" stroke-width="3.0"/><circle cx="1151.5" cy="839.5" r="112.58" stroke="#ff5050" stroke-width="2.0"/><circle cx="1151.5" cy="839.5" r="114.83" stroke="#ff0000" stroke-width="2.5"/><circle cx="1151.5" cy="839.5" r="117.08" stroke="#ff0000" stroke-width="2.0"/></g><g clip-path="url(#cpL)" fill="none"><polygon points="1152.0,844.9 1160.0,843.5 1162.0,870.6 1160.0,885.5 1155.9,886.9 1153.2,870.6" fill="#ff5050"/><circle cx="1151.5" cy="839.5" r="4.42" stroke="#8c5c00" stroke-width="2.0"/><circle cx="1151.5" cy="839.5" r="6.42" stroke="#8c5c00" stroke-width="2.0"/><circle cx="1151.5" cy="839.5" r="8.92" stroke="#8c5c00" stroke-width="3.0"/><circle cx="1151.5" cy="839.5" r="11.17" stroke="#8c5c00" stroke-width="1.5"/><circle cx="1151.5" cy="839.5" r="13.42" stroke="#ff5050" stroke-width="3.0"/><circle cx="1151.5" cy="839.5" r="15.42" stroke="#ff5050" stroke-width="1.0"/><circle cx="1151.5" cy="839.5" r="16.67" stroke="#ff5050" stroke-width="1.5"/><circle cx="1151.5" cy="839.5" r="18.17" stroke="#8c5c00" stroke-width="1.5"/><circle cx="1151.5" cy="839.5" r="19.67" stroke="#ff5050" stroke-width="1.5"/><circle cx="1151.5" cy="839.5" r="21.17" stroke="#ff5050" stroke-width="1.5"/><circle cx="1151.5" cy="839.5" r="22.67" stroke="#ff5050" stroke-width="1.5"/><circle cx="1151.5" cy="839.5" r="24.42" stroke="#ff5050" stroke-width="2.0"/><circle cx="1151.5" cy="839.5" r="26.92" stroke="#ff5050" stroke-width="3.0"/><circle cx="1151.5" cy="839.5" r="29.17" stroke="#8c5c00" stroke-width="1.5"/><circle cx="1151.5" cy="839.5" r="31.42" stroke="#8c5c00" stroke-width="3.0"/><circle cx="1151.5" cy="839.5" r="34.42" stroke="#8c5c00" stroke-width="3.0"/><circle cx="1151.5" cy="839.5" r="37.17" stroke="#8c5c00" stroke-width="2.5"/><circle cx="1151.5" cy="839.5" r="39.42" stroke="#ff5050" stroke-width="2.0"/><circle cx="1151.5" cy="839.5" r="41.67" stroke="#ff5050" stroke-width="2.5"/><circle cx="1151.5" cy="839.5" r="44.42" stroke="#8c5c00" stroke-width="3.0"/><circle cx="1151.5" cy="839.5" r="46.67" stroke="#8c5c00" stroke-width="1.5"/><circle cx="1151.5" cy="839.5" r="48.92" stroke="#8c5c00" stroke-width="3.0"/></g><g clip-path="url(#cpC)" fill="none"><polygon points="1051.7,814.8 1057.1,814.8 1065.2,817.5 1074.7,820.2 1077.4,801.2 1081.5,799.9 1081.5,812.1 1076.0,828.3 1073.3,836.5 1067.9,836.5 1069.3,825.6 1063.9,822.9 1053.0,820.2" fill="#ffff00"/><circle cx="1151.5" cy="839.5" r="74.17" stroke="#ff5050" stroke-width="2.0"/><circle cx="1151.5" cy="839.5" r="75.92" stroke="#ff0000" stroke-width="1.5"/><circle cx="1151.5" cy="839.5" r="77.67" stroke="#ff5050" stroke-width="2.0"/><circle cx="1151.5" cy="839.5" r="79.42" stroke="#ff5050" stroke-width="1.5"/><circle cx="1151.5" cy="839.5" r="81.42" stroke="#ff5050" stroke-width="2.5"/><circle cx="1151.5" cy="839.5" r="83.42" stroke="#ff5050" stroke-width="1.5"/><circle cx="1151.5" cy="839.5" r="85.42" stroke="#ff5050" stroke-width="2.5"/><circle cx="1151.5" cy="839.5" r="87.42" stroke="#8c5c00" stroke-width="1.5"/><circle cx="1151.5" cy="839.5" r="89.42" stroke="#ffff00" stroke-width="2.5"/><circle cx="1151.5" cy="839.5" r="92.17" stroke="#ffff00" stroke-width="3.0"/><circle cx="1151.5" cy="839.5" r="95.17" stroke="#606060" stroke-width="3.0"/><circle cx="1151.5" cy="839.5" r="97.17" stroke="#606060" stroke-width="1.0"/><circle cx="1151.5" cy="839.5" r="98.17" stroke="#606060" stroke-width="1.0"/><circle cx="1151.5" cy="839.5" r="99.92" stroke="#606060" stroke-width="2.5"/><circle cx="1151.5" cy="839.5" r="102.17" stroke="#606060" stroke-width="2.0"/><circle cx="1151.5" cy="839.5" r="103.92" stroke="#606060" stroke-width="1.5"/><circle cx="1151.5" cy="839.5" r="105.42" stroke="#606060" stroke-width="1.5"/></g><g clip-path="url(#cpP)" fill="none"><polygon points="1241.6,859.8 1248.3,861.1 1248.3,873.3 1249.7,897.7 1245.6,903.1 1229.4,893.6 1232.1,886.9 1240.2,870.6" fill="#606060"/><circle cx="1151.5" cy="839.5" r="91.36" stroke="#606060" stroke-width="2.0"/><circle cx="1151.5" cy="839.5" r="93.11" stroke="#a00000" stroke-width="1.5"/><circle cx="1151.5" cy="839.5" r="94.61" stroke="#606060" stroke-width="1.5"/><circle cx="1151.5" cy="839.5" r="96.86" stroke="#606060" stroke-width="3.0"/><circle cx="1151.5" cy="839.5" r="99.11" stroke="#606060" stroke-width="1.5"/><circle cx="1151.5" cy="839.5" r="101.11" stroke="#606060" stroke-width="2.5"/><circle cx="1151.5" cy="839.5" r="103.86" stroke="#a00000" stroke-width="3.0"/><circle cx="1151.5" cy="839.5" r="106.11" stroke="#606060" stroke-width="1.5"/><circle cx="1151.5" cy="839.5" r="107.86" stroke="#606060" stroke-width="2.0"/><circle cx="1151.5" cy="839.5" r="109.86" stroke="#606060" stroke-width="2.0"/><circle cx="1151.5" cy="839.5" r="111.36" stroke="#606060" stroke-width="1.0"/><circle cx="1151.5" cy="839.5" r="112.86" stroke="#606060" stroke-width="2.0"/><circle cx="1151.5" cy="839.5" r="114.86" stroke="#606060" stroke-width="2.0"/><circle cx="1151.5" cy="839.5" r="116.86" stroke="#606060" stroke-width="2.0"/></g><circle cx="1153" cy="725.5" r="4" fill="#ffff00"/><g stroke="#ffffff" fill="none" stroke-width="1" shape-rendering="crispEdges"><circle cx="1151.5" cy="839.5" r="38.5"/><circle cx="1151.5" cy="839.5" r="77.0"/><circle cx="1151.5" cy="839.5" r="115.5"/><line x1="1032" y1="839.5" x2="1271" y2="839.5"/><line x1="1151.5" y1="720" x2="1151.5" y2="959"/><path d="M1148.5,833.1L1154.5,833.1M1148.5,826.7L1154.5,826.7M1148.5,820.2L1154.5,820.2M1148.5,813.8L1154.5,813.8M1148.5,807.4L1154.5,807.4M1148.5,801.0L1154.5,801.0M1148.5,794.6L1154.5,794.6M1148.5,788.2L1154.5,788.2M1148.5,781.8L1154.5,781.8M1148.5,775.3L1154.5,775.3M1148.5,768.9L1154.5,768.9M1148.5,762.5L1154.5,762.5M1148.5,756.1L1154.5,756.1M1148.5,749.7L1154.5,749.7M1148.5,743.2L1154.5,743.2M1148.5,736.8L1154.5,736.8M1148.5,730.4L1154.5,730.4M1148.5,724.0L1154.5,724.0M1151.5,839.5L1209.2,739.5M1187.4,771.3L1192.6,774.3M1190.6,765.8L1195.8,768.8M1193.8,760.2L1199.0,763.2M1197.0,754.6L1202.2,757.6M1200.2,749.1L1205.4,752.1M1203.4,743.5L1208.6,746.5M1206.7,738.0L1211.8,741.0M1151.5,839.5L1251.5,781.8M1216.7,798.4L1219.7,803.6M1222.2,795.2L1225.2,800.4M1227.8,792.0L1230.8,797.2M1233.4,788.8L1236.4,794.0M1238.9,785.6L1241.9,790.8M1244.5,782.4L1247.5,787.6M1250.0,779.2L1253.0,784.3M1157.9,836.5L1157.9,842.5M1164.3,836.5L1164.3,842.5M1170.8,836.5L1170.8,842.5M1177.2,836.5L1177.2,842.5M1183.6,836.5L1183.6,842.5M1190.0,836.5L1190.0,842.5M1196.4,836.5L1196.4,842.5M1202.8,836.5L1202.8,842.5M1209.2,836.5L1209.2,842.5M1215.7,836.5L1215.7,842.5M1222.1,836.5L1222.1,842.5M1228.5,836.5L1228.5,842.5M1234.9,836.5L1234.9,842.5M1241.3,836.5L1241.3,842.5M1247.8,836.5L1247.8,842.5M1254.2,836.5L1254.2,842.5M1260.6,836.5L1260.6,842.5M1267.0,836.5L1267.0,842.5M1151.5,839.5L1251.5,897.2M1219.7,875.4L1216.7,880.6M1225.2,878.6L1222.2,883.8M1230.8,881.8L1227.8,887.0M1236.4,885.0L1233.4,890.2M1241.9,888.2L1238.9,893.4M1247.5,891.4L1244.5,896.6M1253.0,894.7L1250.0,899.8M1151.5,839.5L1209.2,939.5M1192.6,904.7L1187.4,907.7M1195.8,910.2L1190.6,913.2M1199.0,915.8L1193.8,918.8M1202.2,921.4L1197.0,924.4M1205.4,926.9L1200.2,929.9M1208.6,932.5L1203.4,935.5M1211.8,938.0L1206.7,941.0M1154.5,845.9L1148.5,845.9M1154.5,852.3L1148.5,852.3M1154.5,858.8L1148.5,858.8M1154.5,865.2L1148.5,865.2M1154.5,871.6L1148.5,871.6M1154.5,878.0L1148.5,878.0M1154.5,884.4L1148.5,884.4M1154.5,890.8L1148.5,890.8M1154.5,897.2L1148.5,897.2M1154.5,903.7L1148.5,903.7M1154.5,910.1L1148.5,910.1M1154.5,916.5L1148.5,916.5M1154.5,922.9L1148.5,922.9M1154.5,929.3L1148.5,929.3M1154.5,935.8L1148.5,935.8M1154.5,942.2L1148.5,942.2M1154.5,948.6L1148.5,948.6M1154.5,955.0L1148.5,955.0M1151.5,839.5L1093.8,939.5M1115.6,907.7L1110.4,904.7M1112.4,913.2L1107.2,910.2M1109.2,918.8L1104.0,915.8M1106.0,924.4L1100.8,921.4M1102.8,929.9L1097.6,926.9M1099.6,935.5L1094.4,932.5M1096.3,941.0L1091.2,938.0M1151.5,839.5L1051.5,897.2M1086.3,880.6L1083.3,875.4M1080.8,883.8L1077.8,878.6M1075.2,887.0L1072.2,881.8M1069.6,890.2L1066.6,885.0M1064.1,893.4L1061.1,888.2M1058.5,896.6L1055.5,891.4M1053.0,899.8L1050.0,894.7M1145.1,842.5L1145.1,836.5M1138.7,842.5L1138.7,836.5M1132.2,842.5L1132.2,836.5M1125.8,842.5L1125.8,836.5M1119.4,842.5L1119.4,836.5M1113.0,842.5L1113.0,836.5M1106.6,842.5L1106.6,836.5M1100.2,842.5L1100.2,836.5M1093.8,842.5L1093.8,836.5M1087.3,842.5L1087.3,836.5M1080.9,842.5L1080.9,836.5M1074.5,842.5L1074.5,836.5M1068.1,842.5L1068.1,836.5M1061.7,842.5L1061.7,836.5M1055.2,842.5L1055.2,836.5M1048.8,842.5L1048.8,836.5M1042.4,842.5L1042.4,836.5M1036.0,842.5L1036.0,836.5M1151.5,839.5L1051.5,781.8M1083.3,803.6L1086.3,798.4M1077.8,800.4L1080.8,795.2M1072.2,797.2L1075.2,792.0M1066.6,794.0L1069.6,788.8M1061.1,790.8L1064.1,785.6M1055.5,787.6L1058.5,782.4M1050.0,784.3L1053.0,779.2M1151.5,839.5L1093.8,739.5M1110.4,774.3L1115.6,771.3M1107.2,768.8L1112.4,765.8M1104.0,763.2L1109.2,760.2M1100.8,757.6L1106.0,754.6M1097.6,752.1L1102.8,749.1M1094.4,746.5L1099.6,743.5M1091.2,741.0L1096.3,738.0M1161.3,727.4L1161.8,721.5M1171.0,728.7L1172.1,722.8M1180.6,730.8L1182.2,725.0M1190.0,733.8L1192.0,728.1M1199.0,737.5L1201.6,732.1M1216.0,747.3L1219.5,742.4M1223.8,753.3L1227.7,748.7M1231.0,760.0L1235.3,755.7M1237.7,767.2L1242.3,763.3M1243.7,775.0L1248.6,771.5M1253.5,792.0L1258.9,789.4M1257.2,801.0L1262.9,799.0M1260.2,810.4L1266.0,808.8M1262.3,820.0L1268.2,818.9M1263.6,829.7L1269.5,829.2M1263.6,849.3L1269.5,849.8M1262.3,859.0L1268.2,860.1M1260.2,868.6L1266.0,870.2M1257.2,878.0L1262.9,880.0M1253.5,887.0L1258.9,889.6M1243.7,904.0L1248.6,907.5M1237.7,911.8L1242.3,915.7M1231.0,919.0L1235.3,923.3M1223.8,925.7L1227.7,930.3M1216.0,931.7L1219.5,936.6M1199.0,941.5L1201.6,946.9M1190.0,945.2L1192.0,950.9M1180.6,948.2L1182.2,954.0M1171.0,950.3L1172.1,956.2M1161.3,951.6L1161.8,957.5M1141.7,951.6L1141.2,957.5M1132.0,950.3L1130.9,956.2M1122.4,948.2L1120.8,954.0M1113.0,945.2L1111.0,950.9M1104.0,941.5L1101.4,946.9M1087.0,931.7L1083.5,936.6M1079.2,925.7L1075.3,930.3M1072.0,919.0L1067.7,923.3M1065.3,911.8L1060.7,915.7M1059.3,904.0L1054.4,907.5M1049.5,887.0L1044.1,889.6M1045.8,878.0L1040.1,880.0M1042.8,868.6L1037.0,870.2M1040.7,859.0L1034.8,860.1M1039.4,849.3L1033.5,849.8M1039.4,829.7L1033.5,829.2M1040.7,820.0L1034.8,818.9M1042.8,810.4L1037.0,808.8M1045.8,801.0L1040.1,799.0M1049.5,792.0L1044.1,789.4M1059.3,775.0L1054.4,771.5M1065.3,767.2L1060.7,763.3M1072.0,760.0L1067.7,755.7M1079.2,753.3L1075.3,748.7M1087.0,747.3L1083.5,742.4M1104.0,737.5L1101.4,732.1M1113.0,733.8L1111.0,728.1M1122.4,730.8L1120.8,725.0M1132.0,728.7L1130.9,722.8M1141.7,727.4L1141.2,721.5"/></g><path fill="#ffffff" d="M1159,750h1v1h-1zM1167,751h1v1h-1zM1174,753h1v1h-1zM1182,755h1v1h-1zM1189,758h1v1h-1zM1202,766h1v1h-1zM1209,770h1v1h-1zM1214,776h1v1h-1zM1220,781h1v1h-1zM1224,788h1v1h-1zM1232,801h1v1h-1zM1235,808h1v1h-1zM1237,816h1v1h-1zM1239,823h1v1h-1zM1240,831h1v1h-1zM1240,847h1v1h-1zM1239,855h1v1h-1zM1237,862h1v1h-1zM1235,870h1v1h-1zM1232,877h1v1h-1zM1224,890h1v1h-1zM1220,897h1v1h-1zM1214,902h1v1h-1zM1209,908h1v1h-1zM1202,912h1v1h-1zM1189,920h1v1h-1zM1182,923h1v1h-1zM1174,925h1v1h-1zM1167,927h1v1h-1zM1159,928h1v1h-1zM1143,928h1v1h-1zM1135,927h1v1h-1zM1128,925h1v1h-1zM1120,923h1v1h-1zM1113,920h1v1h-1zM1100,912h1v1h-1zM1093,908h1v1h-1zM1088,902h1v1h-1zM1082,897h1v1h-1zM1078,890h1v1h-1zM1070,877h1v1h-1zM1067,870h1v1h-1zM1065,862h1v1h-1zM1063,855h1v1h-1zM1062,847h1v1h-1zM1062,831h1v1h-1zM1063,823h1v1h-1zM1065,816h1v1h-1zM1067,808h1v1h-1zM1070,801h1v1h-1zM1078,788h1v1h-1zM1082,781h1v1h-1zM1088,776h1v1h-1zM1093,770h1v1h-1zM1100,766h1v1h-1zM1113,758h1v1h-1zM1120,755h1v1h-1zM1128,753h1v1h-1zM1135,751h1v1h-1zM1143,750h1v1h-1z"/><g font-family="Liberation Mono" font-size="13.333" font-weight="bold" fill="#ffffff"><text x="1147" y="714">N</text><rect x="1014" y="832" width="9" height="14" fill="#000"/><text x="1015" y="843">W</text></g><defs><g id="clk" stroke="#00ffff" stroke-width="1" fill="none" stroke-linecap="square" shape-rendering="crispEdges"><polyline points="56.5,533.5 63.5,519.5 63.5,603.5"/><polyline points="56.5,603.5 70.5,603.5"/><polyline points="112.5,519.5 126.5,519.5 133.5,533.5 133.5,575.5 119.5,603.5 112.5,603.5"/><polyline points="112.5,519.5 105.5,533.5 105.5,547.5 112.5,561.5 133.5,561.5"/><polyline points="224.5,519.5 245.5,519.5 252.5,533.5 252.5,589.5 245.5,603.5 224.5,603.5 217.5,589.5 217.5,533.5 224.5,519.5"/><polyline points="252.5,533.5 217.5,589.5"/><polyline points="294.5,519.5 287.5,519.5 273.5,547.5 273.5,589.5 280.5,603.5 294.5,603.5 301.5,589.5 301.5,575.5 294.5,561.5 273.5,561.5"/><polyline points="392.5,519.5 413.5,519.5 420.5,533.5 420.5,589.5 413.5,603.5 392.5,603.5 385.5,589.5 385.5,533.5 392.5,519.5"/><polyline points="420.5,533.5 385.5,589.5"/><polyline points="448.5,519.5 462.5,519.5 469.5,533.5 469.5,547.5 462.5,561.5 469.5,575.5 469.5,589.5 462.5,603.5 448.5,603.5 441.5,589.5 441.5,575.5 448.5,561.5 441.5,547.5 441.5,533.5 448.5,519.5"/><polyline points="448.5,561.5 462.5,561.5"/><line x1="175.5" y1="533.5" x2="175.5" y2="547.5"/><line x1="175.5" y1="589.5" x2="175.5" y2="603.5"/><line x1="343.5" y1="533.5" x2="343.5" y2="547.5"/><line x1="343.5" y1="589.5" x2="343.5" y2="603.5"/></g></defs><use href="#clk" x="-1" y="-1"/><use href="#clk" x="-1" y="0"/><use href="#clk" x="-1" y="1"/><use href="#clk" x="0" y="-1"/><use href="#clk" x="0" y="0"/><use href="#clk" x="0" y="1"/><use href="#clk" x="1" y="-1"/><use href="#clk" x="1" y="0"/><use href="#clk" x="1" y="1"/><g font-family="Liberation Mono" font-size="13.333" xml:space="preserve"><text x="16" y="25" fill="#00ff00" font-weight="bold">UTC time OK  </text><text x="136" y="25" fill="#00ff00" font-weight="bold">Receiver data</text><text x="16" y="39" fill="#00ffff" font-weight="bold">19:06:08 CDT</text><text x="136" y="39" fill="#707070" font-weight="bold">Temp: no sensor</text><text x="16" y="53" fill="#ffffff" font-weight="bold">15 Mar 2018</text><text x="136" y="53" fill="#ffffff" font-weight="bold">Sawt:  0.106000 ns</text><text x="16" y="67" fill="#ffffff" font-weight="bold">Week:  1992</text><text x="136" y="67" fill="#ffffff" font-weight="bold">Accu:  6.000000 ns</text><text x="16" y="81" fill="#ffffff" font-weight="bold">TOW: 432385</text><text x="16" y="95" fill="#ffffff" font-weight="bold">UTC ofs: 18</text><text x="136" y="95" fill="#ffffff" font-weight="bold">Dly:   0.000000 ns</text><text x="312" y="25" fill="#8080ff" font-weight="bold">Press SPACE for help</text><text x="312" y="39" fill="#ffffff" font-weight="bold">Dev:  eSIP Receiver</text><text x="312" y="53" fill="#ffffff" font-weight="bold">ID:   GT87</text><text x="312" y="67" fill="#ffffff" font-weight="bold">Ver:  ENP624H1410501T</text><text x="312" y="81" fill="#ffffff" font-weight="bold">COM: 1</text><text x="312" y="95" fill="#ffffff" font-weight="bold">Log: OFF</text><text x="536" y="25" fill="#00ff00" font-weight="bold">Antenna OK</text><text x="536" y="39" fill="#00ff00" font-weight="bold">TRAIM   NORMAL</text><text x="536" y="53" fill="#00ff00" font-weight="bold">No leap pend</text><text x="16" y="123" fill="#00ff00" font-weight="bold">Position hold mode</text><text x="192" y="123" fill="#707070" font-weight="bold">Survey data:</text><text x="16" y="137" fill="#ffffff" font-weight="bold">Lat:  (private)</text><text x="16" y="151" fill="#ffffff" font-weight="bold">Lon:  (private)</text><text x="16" y="165" fill="#ffffff" font-weight="bold">Alt: 167.00000000 m</text><text x="336" y="123" fill="#ffffff" font-weight="bold">Operation mode:</text><text x="336" y="137" fill="#00ff00" font-weight="bold">Time locked</text><text x="336" y="165" fill="#707070" font-weight="bold">No status avail</text><text x="536" y="123" fill="#00ff00" font-weight="bold">PPS:  ON  </text><text x="536" y="137" fill="#00ff00" font-weight="bold">TYPE: LEGACY</text><text x="536" y="165" fill="#ffffff" font-weight="bold">PDOP:  2.00</text><text x="536" y="179" fill="#ffffff" font-weight="bold">HDOP:  1.00</text><text x="536" y="193" fill="#ffffff" font-weight="bold">VDOP:  1.80</text><text x="536" y="221" fill="#ffffff" font-weight="bold">EL:   20.00°</text><text x="536" y="235" fill="#ffffff" font-weight="bold">SNR:  20.00</text><text x="16" y="193" fill="#ffffff" font-weight="bold">PRN   °AZ   °EL    SNR   DOPPLER PSEUDORANGE</text><text x="16" y="207" fill="#00ff00" font-weight="bold"> 01   63.0  41.0   47.0  1325940  1396869090</text><text x="16" y="221" fill="#ffff00" font-weight="bold"> 06  191.0  12.0    0.0      N/A         N/A</text><text x="16" y="235" fill="#00ff00" font-weight="bold"> 07  153.0  32.0   37.0  2823931  1427049485</text><text x="16" y="249" fill="#00ff00" font-weight="bold"> 11   50.0  36.0   44.0  2261757  1421069146</text><text x="16" y="263" fill="#00ff00" font-weight="bold"> 13  273.0  26.0   27.0  1034009  1482550296</text><text x="16" y="277" fill="#ffff00" font-weight="bold"> 15  300.0   7.0    0.0      N/A         N/A</text><text x="16" y="291" fill="#00ff00" font-weight="bold"> 17  263.0  61.0   51.0  -338134  1348975931</text><text x="16" y="305" fill="#00ff00" font-weight="bold"> 18   46.0  20.0   35.0      N/A         N/A</text><text x="16" y="319" fill="#00ff00" font-weight="bold"> 19  244.0  40.0   43.0 -1554190  1406615151</text><text x="16" y="333" fill="#00ff00" font-weight="bold"> 22   87.0   3.0   21.0      N/A         N/A</text><text x="16" y="347" fill="#00ff00" font-weight="bold"> 28   18.0  60.0   47.0   156659  1352312910</text><text x="16" y="361" fill="#00ff00" font-weight="bold"> 30  161.0  57.0   49.0  1886229  1332197024</text><text x="16" y="375" fill="#00ff00" font-weight="bold"> 51  198.0  48.0   44.0      N/A         N/A</text><text x="16" y="389" fill="#00ff00" font-weight="bold"> 73   16.0  71.0   36.0      N/A         N/A</text><text x="16" y="403" fill="#00ff00" font-weight="bold"> 74  328.0  23.0   27.0      N/A         N/A</text><text x="16" y="417" fill="#00ff00" font-weight="bold"> 80  122.0  39.0   21.0      N/A         N/A</text><text x="16" y="431" fill="#00ff00" font-weight="bold"> 82   30.0  14.0   23.0      N/A         N/A</text><text x="16" y="445" fill="#00ff00" font-weight="bold"> 83   21.0  67.0   34.0      N/A         N/A</text><text x="16" y="459" fill="#00ff00" font-weight="bold"> 84  217.0  48.0   24.0      N/A         N/A</text><text x="24" y="473" fill="#ffffff" font-weight="bold">..</text><text x="24" y="487" fill="#ffffff" font-weight="bold">..</text><text x="24" y="501" fill="#ffffff" font-weight="bold">..</text><text x="536" y="571" fill="#8080ff" font-weight="bold">VIEW: 102.0 min</text><text x="536" y="585" fill="#8080ff" font-weight="bold">VIEW: 6.0 min/div</text><text x="536" y="599" fill="#ffffff" font-weight="bold">PLOTQ: 3.0 day</text><text x="536" y="613" fill="#ffffff" font-weight="bold">ADEVQ: 36000 pts</text><text x="16" y="641" fill="#00ffff" font-weight="bold">Cursor time: 15 Mar 2018    18:07:12.199 CDT  &lt;33m56s&gt;</text><text x="16" y="655" fill="#ff00ff" font-weight="bold">Accu: 6.000000 ns</text><text x="168" y="655" fill="#00ff00" font-weight="bold">Sawt: 0.272000 ns</text><text x="16" y="669" fill="#ff00ff" font-weight="bold">span: 1.000000 ns</text><text x="168" y="669" fill="#00ff00" font-weight="bold">span: 3.474000 ns</text><text x="16" y="683" fill="#00ffff" font-weight="bold">Auto (DEL to stop): 15 Mar 2018    17:33:16.199 CDT</text><text x="16" y="697" fill="#ff00ff" font-weight="bold">ref~&lt;5.4 ns&gt;</text><text x="168" y="697" fill="#00ff00" font-weight="bold">ref~&lt;0.000000 ns&gt;</text><text x="16" y="711" fill="#ff00ff" font-weight="bold">Accu~(0.20 ns/div)</text><text x="168" y="711" fill="#00ff00" font-weight="bold">Sawt~(1.0 ns/div)</text><text x="744" y="25" fill="#4848ff">13 </text><text x="744" y="39" fill="#ff00ff">15 </text><text x="744" y="53" fill="#ffff00">74 </text><text x="1224" y="25" fill="#ff5050">01 </text><text x="1224" y="39" fill="#00ffff">11 </text><text x="1224" y="53" fill="#006400">18 </text><text x="1224" y="67" fill="#a00000">22 </text><text x="1224" y="81" fill="#8c5c00">28 </text><text x="1224" y="95" fill="#a0a0a0">73 </text><text x="1224" y="109" fill="#8080ff">82 </text><text x="1224" y="123" fill="#00ff00">83 </text><text x="744" y="459" fill="#606060">MOON</text><text x="744" y="473" fill="#ffff00">SUN</text><text x="744" y="487" fill="#00ffff">84 </text><text x="744" y="501" fill="#ff0000">51</text><text x="744" y="515" fill="#008080">19 </text><text x="744" y="529" fill="#ffffff">17 </text><text x="744" y="543" fill="#8080ff">06 </text><text x="1224" y="515" fill="#ff5050">80 </text><text x="1224" y="529" fill="#606060">30 </text><text x="1224" y="543" fill="#00ff00">07 </text><text x="920" y="585" fill="#ffffff" font-weight="bold">Satellite positions</text><text x="8" y="949" fill="#ffffff" font-weight="bold">Beware the Ides of March!</text></g><path d="M115,15h1v1h-1zM115,16h1v1h-1zM116,16h1v1h-1zM115,17h1v1h-1zM117,17h1v1h-1zM115,18h1v1h-1zM118,18h1v1h-1zM115,19h1v1h-1zM116,19h1v1h-1zM118,19h1v1h-1zM115,20h1v1h-1zM117,20h1v1h-1zM118,20h1v1h-1zM113,21h1v1h-1zM114,21h1v1h-1zM115,21h1v1h-1zM118,21h1v1h-1zM112,22h1v1h-1zM113,22h1v1h-1zM114,22h1v1h-1zM115,22h1v1h-1zM118,22h1v1h-1zM113,23h1v1h-1zM114,23h1v1h-1zM118,23h1v1h-1zM116,24h1v1h-1zM117,24h1v1h-1zM118,24h1v1h-1zM115,25h1v1h-1zM116,25h1v1h-1zM117,25h1v1h-1zM118,25h1v1h-1zM116,26h1v1h-1zM117,26h1v1h-1z" fill="#00ff00"/><path d="M611.5,114V123 M608.5,117.5L611.5,114.2L614.5,117.5" stroke="#00ff00" stroke-width="1.5" fill="none"/><path d="M147.5,198V206 M144.5,202.5L147.5,205.8L150.5,202.5" stroke="#00ff00" stroke-width="1.5" fill="none"/><path d="M147.5,212V221 M144.5,215.5L147.5,212.2L150.5,215.5" stroke="#ffff00" stroke-width="1.5" fill="none"/><path d="M147.5,226V234 M144.5,230.5L147.5,233.8L150.5,230.5" stroke="#00ff00" stroke-width="1.5" fill="none"/><path d="M147.5,240V248 M144.5,244.5L147.5,247.8L150.5,244.5" stroke="#00ff00" stroke-width="1.5" fill="none"/><path d="M147.5,254V262 M144.5,258.5L147.5,261.8L150.5,258.5" stroke="#00ff00" stroke-width="1.5" fill="none"/><path d="M147.5,268V277 M144.5,271.5L147.5,268.2L150.5,271.5" stroke="#ffff00" stroke-width="1.5" fill="none"/><path d="M147.5,282V291 M144.5,285.5L147.5,282.2L150.5,285.5" stroke="#00ff00" stroke-width="1.5" fill="none"/><path d="M147.5,296V304 M144.5,300.5L147.5,303.8L150.5,300.5" stroke="#00ff00" stroke-width="1.5" fill="none"/><path d="M147.5,310V319 M144.5,313.5L147.5,310.2L150.5,313.5" stroke="#00ff00" stroke-width="1.5" fill="none"/><path d="M147.5,324V333 M144.5,327.5L147.5,324.2L150.5,327.5" stroke="#00ff00" stroke-width="1.5" fill="none"/><path d="M147.5,338V347 M144.5,341.5L147.5,338.2L150.5,341.5" stroke="#00ff00" stroke-width="1.5" fill="none"/><path d="M147.5,352V360 M144.5,356.5L147.5,359.8L150.5,356.5" stroke="#00ff00" stroke-width="1.5" fill="none"/><path d="M147.5,380V389 M144.5,383.5L147.5,380.2L150.5,383.5" stroke="#00ff00" stroke-width="1.5" fill="none"/><path d="M147.5,394V403 M144.5,397.5L147.5,394.2L150.5,397.5" stroke="#00ff00" stroke-width="1.5" fill="none"/><path d="M147.5,408V416 M144.5,412.5L147.5,415.8L150.5,412.5" stroke="#00ff00" stroke-width="1.5" fill="none"/><path d="M147.5,422V430 M144.5,426.5L147.5,429.8L150.5,426.5" stroke="#00ff00" stroke-width="1.5" fill="none"/><path d="M147.5,436V444 M144.5,440.5L147.5,443.8L150.5,440.5" stroke="#00ff00" stroke-width="1.5" fill="none"/><path d="M147.5,450V459 M144.5,453.5L147.5,450.2L150.5,453.5" stroke="#00ff00" stroke-width="1.5" fill="none"/><path d="M763.5,16V24 M760.5,20.5L763.5,23.8L766.5,20.5" stroke="#4848ff" stroke-width="1.1" fill="none"/><path d="M763.5,30V39 M760.5,33.5L763.5,30.2L766.5,33.5" stroke="#ff00ff" stroke-width="1.1" fill="none"/><path d="M763.5,44V53 M760.5,47.5L763.5,44.2L766.5,47.5" stroke="#ffff00" stroke-width="1.1" fill="none"/><path d="M1243.5,16V24 M1240.5,20.5L1243.5,23.8L1246.5,20.5" stroke="#ff5050" stroke-width="1.1" fill="none"/><path d="M1243.5,30V38 M1240.5,34.5L1243.5,37.8L1246.5,34.5" stroke="#00ffff" stroke-width="1.1" fill="none"/><path d="M1243.5,44V52 M1240.5,48.5L1243.5,51.8L1246.5,48.5" stroke="#006400" stroke-width="1.1" fill="none"/><path d="M1243.5,58V67 M1240.5,61.5L1243.5,58.2L1246.5,61.5" stroke="#a00000" stroke-width="1.1" fill="none"/><path d="M1243.5,72V81 M1240.5,75.5L1243.5,72.2L1246.5,75.5" stroke="#8c5c00" stroke-width="1.1" fill="none"/><path d="M1243.5,86V95 M1240.5,89.5L1243.5,86.2L1246.5,89.5" stroke="#a0a0a0" stroke-width="1.1" fill="none"/><path d="M1243.5,100V108 M1240.5,104.5L1243.5,107.8L1246.5,104.5" stroke="#8080ff" stroke-width="1.1" fill="none"/><path d="M1243.5,114V122 M1240.5,118.5L1243.5,121.8L1246.5,118.5" stroke="#00ff00" stroke-width="1.1" fill="none"/><path d="M763.5,478V487 M760.5,481.5L763.5,478.2L766.5,481.5" stroke="#00ffff" stroke-width="1.1" fill="none"/><path d="M763.5,506V515 M760.5,509.5L763.5,506.2L766.5,509.5" stroke="#008080" stroke-width="1.1" fill="none"/><path d="M763.5,520V529 M760.5,523.5L763.5,520.2L766.5,523.5" stroke="#ffffff" stroke-width="1.1" fill="none"/><path d="M763.5,534V543 M760.5,537.5L763.5,534.2L766.5,537.5" stroke="#8080ff" stroke-width="1.1" fill="none"/><path d="M1243.5,506V514 M1240.5,510.5L1243.5,513.8L1246.5,510.5" stroke="#ff5050" stroke-width="1.1" fill="none"/><path d="M1243.5,520V528 M1240.5,524.5L1243.5,527.8L1246.5,524.5" stroke="#606060" stroke-width="1.1" fill="none"/><path d="M1243.5,534V542 M1240.5,538.5L1243.5,541.8L1246.5,538.5" stroke="#00ff00" stroke-width="1.1" fill="none"/>
</svg></body></html>
